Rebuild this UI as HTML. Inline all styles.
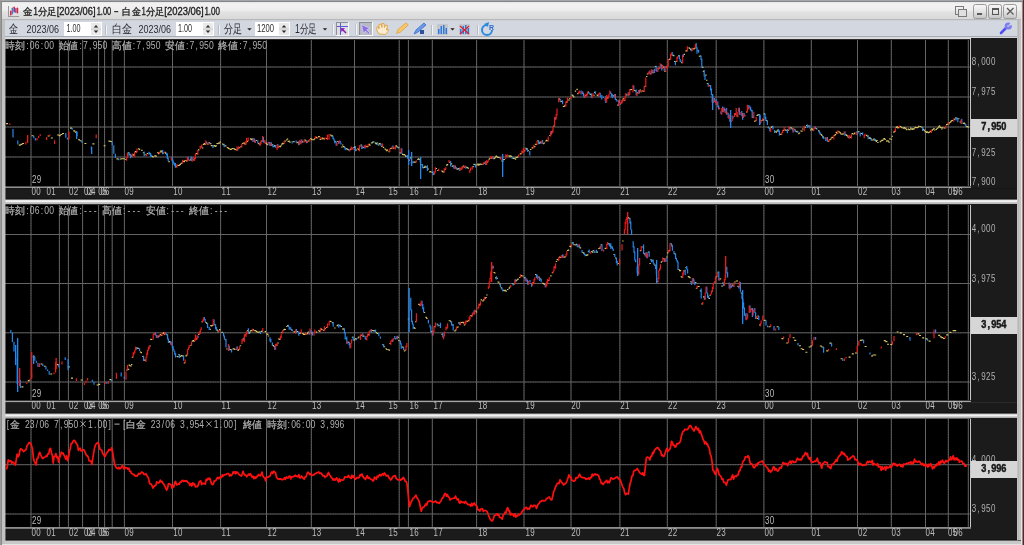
<!DOCTYPE html><html><head><meta charset="utf-8"><style>html,body{margin:0;padding:0;width:1024px;height:545px;overflow:hidden;background:#a4a8ae}svg{display:block;will-change:transform}</style></head><body>
<svg width="1024" height="545" viewBox="0 0 1024 545" font-family="Liberation Sans, sans-serif">
<defs><linearGradient id="tg" x1="0" y1="0" x2="0" y2="1"><stop offset="0" stop-color="#e4e4e4"/><stop offset="0.1" stop-color="#f2f2f2"/><stop offset="0.45" stop-color="#eeeeee"/><stop offset="0.55" stop-color="#e2e2e2"/><stop offset="1" stop-color="#d8d8d8"/></linearGradient><linearGradient id="bg" x1="0" y1="0" x2="0" y2="1"><stop offset="0" stop-color="#f8f8f8"/><stop offset="0.5" stop-color="#e4e4e4"/><stop offset="1" stop-color="#c4c4c4"/></linearGradient></defs>
<rect x="0" y="0" width="1024" height="545" fill="#c4c4c4"/>
<rect x="0" y="0" width="1024" height="1" fill="#a2a6ac"/>
<rect x="0" y="1" width="1023" height="1" fill="#858585"/>
<rect x="0" y="0" width="1" height="545" fill="#9a9a9a"/>
<rect x="1" y="1" width="1" height="544" fill="#8a8a8a"/>
<rect x="1021" y="2" width="1" height="543" fill="#e4e4e8"/>
<rect x="1022" y="2" width="1" height="543" fill="#9c8486"/>
<rect x="1023" y="0" width="1" height="545" fill="#4e2a2c"/>
<rect x="2" y="2" width="1019" height="18" fill="url(#tg)"/>
<rect x="2" y="19" width="1019" height="1" fill="#b8b8b8"/>
<rect x="8" y="6" width="1" height="11" fill="#9a9a9a"/><rect x="8" y="16" width="11" height="1" fill="#9a9a9a"/>
<rect x="10" y="10.5" width="1.6" height="5" rx="0.8" fill="#f01c30"/><rect x="11.6" y="7.5" width="1.5" height="7" rx="0.7" fill="#2a86e8"/><rect x="13.4" y="6.5" width="1.6" height="6" rx="0.8" fill="#f01c30"/><rect x="15" y="8" width="1.5" height="5" rx="0.7" fill="#2a86e8"/><rect x="16.6" y="7.5" width="1.6" height="6" rx="0.8" fill="#f01c30"/>
<text x="23.0" y="14.9" font-size="9.8" fill="#1a1a1a" stroke="#1a1a1a" stroke-width="0.3" textLength="9.600000000000005" lengthAdjust="spacingAndGlyphs">金</text>
<text x="33.300000000000004" y="14.9" font-size="10" fill="#1a1a1a" stroke="#1a1a1a" stroke-width="0.3" textLength="4.699999999999998" lengthAdjust="spacingAndGlyphs">1</text>
<text x="37.6" y="14.9" font-size="9.8" fill="#1a1a1a" stroke="#1a1a1a" stroke-width="0.3" textLength="18.900000000000002" lengthAdjust="spacingAndGlyphs">分足</text>
<text x="56.7" y="14.9" font-size="10" fill="#1a1a1a" stroke="#1a1a1a" stroke-width="0.3" textLength="38.9" lengthAdjust="spacingAndGlyphs">[2023/06]</text>
<text x="96.69999999999999" y="14.9" font-size="10" fill="#1a1a1a" stroke="#1a1a1a" stroke-width="0.3" textLength="14.500000000000004" lengthAdjust="spacingAndGlyphs">1.00</text>
<text x="122.19999999999999" y="14.9" font-size="9.8" fill="#1a1a1a" stroke="#1a1a1a" stroke-width="0.3" textLength="8.899999999999995" lengthAdjust="spacingAndGlyphs">白</text>
<text x="131.79999999999998" y="14.9" font-size="9.8" fill="#1a1a1a" stroke="#1a1a1a" stroke-width="0.3" textLength="8.900000000000023" lengthAdjust="spacingAndGlyphs">金</text>
<text x="141.5" y="14.9" font-size="10" fill="#1a1a1a" stroke="#1a1a1a" stroke-width="0.3" textLength="4.3" lengthAdjust="spacingAndGlyphs">1</text>
<text x="146.0" y="14.9" font-size="9.8" fill="#1a1a1a" stroke="#1a1a1a" stroke-width="0.3" textLength="18.599999999999984" lengthAdjust="spacingAndGlyphs">分足</text>
<text x="164.29999999999998" y="14.9" font-size="10" fill="#1a1a1a" stroke="#1a1a1a" stroke-width="0.3" textLength="39.40000000000002" lengthAdjust="spacingAndGlyphs">[2023/06]</text>
<text x="204.4" y="14.9" font-size="10" fill="#1a1a1a" stroke="#1a1a1a" stroke-width="0.3" textLength="15.599999999999984" lengthAdjust="spacingAndGlyphs">1.00</text>
<rect x="114.2" y="11" width="4" height="1.2" fill="#303030"/>
<g fill="none" stroke="#7a7a7a" stroke-width="1"><rect x="955.5" y="6.5" width="8" height="8"/><rect x="958.5" y="9.5" width="8" height="7" fill="#e0e0e0"/></g>
<rect x="973.5" y="4.5" width="13" height="14" rx="2" fill="url(#bg)" stroke="#9a9a9a"/>
<rect x="988.5" y="4.5" width="13" height="14" rx="2" fill="url(#bg)" stroke="#9a9a9a"/>
<rect x="1003.5" y="4.5" width="13" height="14" rx="2" fill="url(#bg)" stroke="#9a9a9a"/>
<rect x="977" y="13" width="5" height="2" fill="#5a5a5a"/>
<rect x="992.5" y="8.5" width="6" height="6" fill="none" stroke="#555" stroke-width="1"/><rect x="992" y="8" width="7" height="2" fill="#555"/>
<path d="M1007 8 L1013.5 14.5 M1013.5 8 L1007 14.5" stroke="#5a5a5a" stroke-width="1.3"/>
<rect x="2" y="20" width="1019" height="17" fill="#d3d7df"/>
<rect x="5" y="20" width="1012" height="1" fill="#ccd0d8"/>
<rect x="5" y="36" width="1012" height="1" fill="#a9adb5"/>
<rect x="2" y="20" width="3" height="525" fill="#c2c2c2"/>
<rect x="1017" y="20" width="4" height="525" fill="#c4c4c4"/><rect x="1018" y="20" width="1" height="525" fill="#b8b8b8"/>
<text x="9" y="32.8" font-size="12" fill="#2a2a34" textLength="9" lengthAdjust="spacingAndGlyphs">金</text>
<text x="26.5" y="33" font-size="10.8" fill="#2a2a34" textLength="32.5" lengthAdjust="spacingAndGlyphs">2023/06</text>
<rect x="64" y="22" width="38" height="14" fill="#ffffff"/>
<rect x="91" y="23" width="10" height="12" fill="#e9e9e9"/>
<rect x="91" y="28.5" width="10" height="1" fill="#c9c9c9"/>
<path d="M93.7 27.6 L98.3 27.6 L96 25.1Z M93.7 30.4 L98.3 30.4 L96 32.9Z" fill="#2a2a2a"/>
<text x="66.5" y="32" font-size="11" fill="#2c2c2c" textLength="14" lengthAdjust="spacingAndGlyphs">1.00</text>
<rect x="106" y="25" width="1" height="10" fill="#f2f2f2"/><rect x="105" y="25" width="1" height="10" fill="#b8bcc4"/>
<text x="112" y="32.8" font-size="12" fill="#2a2a34" textLength="20" lengthAdjust="spacingAndGlyphs">白金</text>
<text x="138.5" y="33" font-size="10.8" fill="#2a2a34" textLength="32.5" lengthAdjust="spacingAndGlyphs">2023/06</text>
<rect x="176" y="22" width="38" height="14" fill="#ffffff"/>
<rect x="203" y="23" width="10" height="12" fill="#e9e9e9"/>
<rect x="203" y="28.5" width="10" height="1" fill="#c9c9c9"/>
<path d="M205.7 27.6 L210.3 27.6 L208 25.1Z M205.7 30.4 L210.3 30.4 L208 32.9Z" fill="#2a2a2a"/>
<text x="178" y="32" font-size="11" fill="#2c2c2c" textLength="14" lengthAdjust="spacingAndGlyphs">1.00</text>
<rect x="219" y="25" width="1" height="10" fill="#f2f2f2"/><rect x="218" y="25" width="1" height="10" fill="#b8bcc4"/>
<text x="224" y="32.8" font-size="12" fill="#2a2a34" textLength="18" lengthAdjust="spacingAndGlyphs">分足</text>
<path d="M247.3 28.2 L251.7 28.2 L249.5 30.6Z" fill="#222"/>
<rect x="255" y="22" width="35" height="14" fill="#ffffff"/>
<rect x="279" y="23" width="10" height="12" fill="#e9e9e9"/>
<rect x="279" y="28.5" width="10" height="1" fill="#c9c9c9"/>
<path d="M281.7 27.6 L286.3 27.6 L284 25.1Z M281.7 30.4 L286.3 30.4 L284 32.9Z" fill="#2a2a2a"/>
<text x="257" y="32" font-size="11" fill="#2c2c2c" textLength="17" lengthAdjust="spacingAndGlyphs">1200</text>
<text x="295" y="32.8" font-size="12" fill="#2a2a34" textLength="22" lengthAdjust="spacingAndGlyphs">1分足</text>
<path d="M322.8 28.2 L327.2 28.2 L325 30.6Z" fill="#222"/>
<rect x="333" y="24" width="1" height="11" fill="#f4f4f6"/><rect x="332" y="24" width="1" height="11" fill="#c0c4cc"/>
<rect x="356" y="24" width="1" height="11" fill="#f4f4f6"/><rect x="355" y="24" width="1" height="11" fill="#c0c4cc"/>
<rect x="336" y="22" width="13" height="14" fill="#fafafa"/><rect x="336" y="22" width="12" height="13" fill="#8e9096"/><rect x="337" y="23" width="11" height="12" fill="#dedfe2"/>
<path d="M340.5 23 V35 M337 26.5 H348" stroke="#5a5ad8" stroke-width="1"/>
<path d="M346 33 L342.5 29.5" stroke="#9020b0" stroke-width="1.6"/><path d="M341 28 L345 28.3 L341.3 32Z" fill="#9020b0"/>
<rect x="359" y="22" width="14" height="14" fill="#fafafa"/><rect x="359" y="22" width="13" height="13" fill="#8e9096"/><rect x="360" y="23" width="12" height="12" fill="#b6b9c0"/>
<path d="M361.5 24.5 L370 28.5 L366.8 29.8 L370 33 L368.6 34.2 L365.5 31 L363.5 33.5Z" fill="#8a70e0" stroke="#e8e0ff" stroke-width="0.6"/>
<path d="M379 34 C377 31 376 29 377 27 L378 26.5 L379 29 L379 24.5 L381 24 L382 27.5 L382 23.5 L384 23.5 L384.5 27.5 L385.5 25 L387.5 25.5 L386.5 30 L388 29 L388 31.5 L385.5 34.5Z" fill="#fbecd0" stroke="#e0a040" stroke-width="0.9"/>
<path d="M396.5 33.5 L398 29.5 L406 22.8 L408.3 25 L400.5 32Z" fill="#f6c868" stroke="#e0a040" stroke-width="0.8"/>
<path d="M414 34 L416 30 L424 23 L426 25 L418 32Z" fill="#6a9ae8" stroke="#3a6ad0" stroke-width="0.8"/><rect x="420" y="30" width="4" height="4" fill="#3050a0"/>
<rect x="432" y="25" width="1" height="10" fill="#f2f2f2"/><rect x="431" y="25" width="1" height="10" fill="#b8bcc4"/>
<rect x="437" y="24" width="11" height="11" fill="#c4c6cc"/>
<g fill="#2a7ae0"><rect x="438" y="29" width="1.5" height="5"/><rect x="440.5" y="26" width="1.5" height="8"/><rect x="443" y="25" width="1.5" height="9"/><rect x="445.5" y="28" width="1.5" height="6"/></g>
<path d="M450.3 28.2 L454.7 28.2 L452.5 30.6Z" fill="#222"/>
<rect x="459" y="24" width="11" height="11" fill="#c4c6cc"/>
<g fill="#2a7ae0"><rect x="460" y="29" width="1.5" height="5"/><rect x="462.5" y="26" width="1.5" height="8"/><rect x="465" y="25" width="1.5" height="9"/><rect x="467.5" y="28" width="1.5" height="6"/></g>
<path d="M460 26 L469 34 M469 26 L460 34" stroke="#e02030" stroke-width="1.2"/>
<rect x="478" y="25" width="1" height="10" fill="#f2f2f2"/><rect x="477" y="25" width="1" height="10" fill="#b8bcc4"/>
<path d="M487 25 A5 5 0 1 0 492 30" fill="none" stroke="#2a8ae0" stroke-width="2"/><path d="M484 24 L489 22 L488 27Z" fill="#2a8ae0"/><text x="489" y="30" font-size="7" font-weight="bold" fill="#2a6ad0">R</text>
<path d="M1001 33 L1006.5 27.5" stroke="#5050f0" stroke-width="2.6" stroke-linecap="round"/>
<circle cx="1008.3" cy="26" r="3.6" fill="#7c7cf0"/>
<path d="M1008.3 26 L1011 22 L1013.5 24.5Z" fill="#d3d7df"/><circle cx="1008.3" cy="26" r="1.2" fill="#b0b0f4"/>
<rect x="5" y="36" width="1012" height="1" fill="#a6aab4"/>
<rect x="5" y="37" width="1012" height="1" fill="#d6d8de"/>
<rect x="5" y="39" width="966" height="149" fill="#000"/>
<rect x="971" y="38" width="46" height="161" fill="#1b1b1b"/>
<rect x="5" y="188" width="1012" height="11" fill="#1b1b1b"/>
<line x1="31" y1="39" x2="31" y2="187" stroke="#5c5c5c"/>
<line x1="31" y1="39" x2="31" y2="187" stroke="#9a9a9a" stroke-opacity="0.28" stroke-dasharray="1.25 1.25"/>
<line x1="59.4" y1="39" x2="59.4" y2="187" stroke="#5c5c5c"/>
<line x1="59.4" y1="39" x2="59.4" y2="187" stroke="#9a9a9a" stroke-opacity="0.28" stroke-dasharray="1.25 1.25"/>
<line x1="68.4" y1="39" x2="68.4" y2="187" stroke="#5c5c5c"/>
<line x1="68.4" y1="39" x2="68.4" y2="187" stroke="#9a9a9a" stroke-opacity="0.28" stroke-dasharray="1.25 1.25"/>
<line x1="82.6" y1="39" x2="82.6" y2="187" stroke="#5c5c5c"/>
<line x1="82.6" y1="39" x2="82.6" y2="187" stroke="#9a9a9a" stroke-opacity="0.28" stroke-dasharray="1.25 1.25"/>
<line x1="98.6" y1="39" x2="98.6" y2="187" stroke="#5c5c5c"/>
<line x1="98.6" y1="39" x2="98.6" y2="187" stroke="#9a9a9a" stroke-opacity="0.28" stroke-dasharray="1.25 1.25"/>
<line x1="104.6" y1="39" x2="104.6" y2="187" stroke="#5c5c5c"/>
<line x1="104.6" y1="39" x2="104.6" y2="187" stroke="#9a9a9a" stroke-opacity="0.28" stroke-dasharray="1.25 1.25"/>
<line x1="112.2" y1="39" x2="112.2" y2="187" stroke="#5c5c5c"/>
<line x1="112.2" y1="39" x2="112.2" y2="187" stroke="#9a9a9a" stroke-opacity="0.28" stroke-dasharray="1.25 1.25"/>
<line x1="124.4" y1="39" x2="124.4" y2="187" stroke="#5c5c5c"/>
<line x1="124.4" y1="39" x2="124.4" y2="187" stroke="#9a9a9a" stroke-opacity="0.28" stroke-dasharray="1.25 1.25"/>
<line x1="172.5" y1="39" x2="172.5" y2="187" stroke="#5c5c5c"/>
<line x1="172.5" y1="39" x2="172.5" y2="187" stroke="#9a9a9a" stroke-opacity="0.28" stroke-dasharray="1.25 1.25"/>
<line x1="220.6" y1="39" x2="220.6" y2="187" stroke="#5c5c5c"/>
<line x1="220.6" y1="39" x2="220.6" y2="187" stroke="#9a9a9a" stroke-opacity="0.28" stroke-dasharray="1.25 1.25"/>
<line x1="266.5" y1="39" x2="266.5" y2="187" stroke="#5c5c5c"/>
<line x1="266.5" y1="39" x2="266.5" y2="187" stroke="#9a9a9a" stroke-opacity="0.28" stroke-dasharray="1.25 1.25"/>
<line x1="311.3" y1="39" x2="311.3" y2="187" stroke="#5c5c5c"/>
<line x1="311.3" y1="39" x2="311.3" y2="187" stroke="#9a9a9a" stroke-opacity="0.28" stroke-dasharray="1.25 1.25"/>
<line x1="354.5" y1="39" x2="354.5" y2="187" stroke="#5c5c5c"/>
<line x1="354.5" y1="39" x2="354.5" y2="187" stroke="#9a9a9a" stroke-opacity="0.28" stroke-dasharray="1.25 1.25"/>
<line x1="399.2" y1="39" x2="399.2" y2="187" stroke="#5c5c5c"/>
<line x1="399.2" y1="39" x2="399.2" y2="187" stroke="#9a9a9a" stroke-opacity="0.28" stroke-dasharray="1.25 1.25"/>
<line x1="408.4" y1="39" x2="408.4" y2="187" stroke="#5c5c5c"/>
<line x1="408.4" y1="39" x2="408.4" y2="187" stroke="#9a9a9a" stroke-opacity="0.28" stroke-dasharray="1.25 1.25"/>
<line x1="432.3" y1="39" x2="432.3" y2="187" stroke="#5c5c5c"/>
<line x1="432.3" y1="39" x2="432.3" y2="187" stroke="#9a9a9a" stroke-opacity="0.28" stroke-dasharray="1.25 1.25"/>
<line x1="476.6" y1="39" x2="476.6" y2="187" stroke="#5c5c5c"/>
<line x1="476.6" y1="39" x2="476.6" y2="187" stroke="#9a9a9a" stroke-opacity="0.28" stroke-dasharray="1.25 1.25"/>
<line x1="524" y1="39" x2="524" y2="187" stroke="#5c5c5c"/>
<line x1="524" y1="39" x2="524" y2="187" stroke="#9a9a9a" stroke-opacity="0.28" stroke-dasharray="1.25 1.25"/>
<line x1="571" y1="39" x2="571" y2="187" stroke="#5c5c5c"/>
<line x1="571" y1="39" x2="571" y2="187" stroke="#9a9a9a" stroke-opacity="0.28" stroke-dasharray="1.25 1.25"/>
<line x1="619.9" y1="39" x2="619.9" y2="187" stroke="#5c5c5c"/>
<line x1="619.9" y1="39" x2="619.9" y2="187" stroke="#9a9a9a" stroke-opacity="0.28" stroke-dasharray="1.25 1.25"/>
<line x1="667.3" y1="39" x2="667.3" y2="187" stroke="#5c5c5c"/>
<line x1="667.3" y1="39" x2="667.3" y2="187" stroke="#9a9a9a" stroke-opacity="0.28" stroke-dasharray="1.25 1.25"/>
<line x1="716.2" y1="39" x2="716.2" y2="187" stroke="#5c5c5c"/>
<line x1="716.2" y1="39" x2="716.2" y2="187" stroke="#9a9a9a" stroke-opacity="0.28" stroke-dasharray="1.25 1.25"/>
<line x1="763.9" y1="39" x2="763.9" y2="187" stroke="#5c5c5c"/>
<line x1="763.9" y1="39" x2="763.9" y2="187" stroke="#9a9a9a" stroke-opacity="0.28" stroke-dasharray="1.25 1.25"/>
<line x1="811.3" y1="39" x2="811.3" y2="187" stroke="#5c5c5c"/>
<line x1="811.3" y1="39" x2="811.3" y2="187" stroke="#9a9a9a" stroke-opacity="0.28" stroke-dasharray="1.25 1.25"/>
<line x1="857.5" y1="39" x2="857.5" y2="187" stroke="#5c5c5c"/>
<line x1="857.5" y1="39" x2="857.5" y2="187" stroke="#9a9a9a" stroke-opacity="0.28" stroke-dasharray="1.25 1.25"/>
<line x1="891.3" y1="39" x2="891.3" y2="187" stroke="#5c5c5c"/>
<line x1="891.3" y1="39" x2="891.3" y2="187" stroke="#9a9a9a" stroke-opacity="0.28" stroke-dasharray="1.25 1.25"/>
<line x1="925.5" y1="39" x2="925.5" y2="187" stroke="#5c5c5c"/>
<line x1="925.5" y1="39" x2="925.5" y2="187" stroke="#9a9a9a" stroke-opacity="0.28" stroke-dasharray="1.25 1.25"/>
<line x1="948.3" y1="39" x2="948.3" y2="187" stroke="#5c5c5c"/>
<line x1="948.3" y1="39" x2="948.3" y2="187" stroke="#9a9a9a" stroke-opacity="0.28" stroke-dasharray="1.25 1.25"/>
<line x1="968.3" y1="39" x2="968.3" y2="187" stroke="#5c5c5c"/>
<line x1="968.3" y1="39" x2="968.3" y2="187" stroke="#9a9a9a" stroke-opacity="0.28" stroke-dasharray="1.25 1.25"/>
<line x1="5" y1="67" x2="970" y2="67" stroke="#5c5c5c"/>
<line x1="5" y1="67" x2="970" y2="67" stroke="#9a9a9a" stroke-opacity="0.28" stroke-dasharray="1.25 1.25"/>
<line x1="5" y1="97" x2="970" y2="97" stroke="#5c5c5c"/>
<line x1="5" y1="97" x2="970" y2="97" stroke="#9a9a9a" stroke-opacity="0.28" stroke-dasharray="1.25 1.25"/>
<line x1="5" y1="127" x2="970" y2="127" stroke="#5c5c5c"/>
<line x1="5" y1="127" x2="970" y2="127" stroke="#9a9a9a" stroke-opacity="0.28" stroke-dasharray="1.25 1.25"/>
<line x1="5" y1="157" x2="970" y2="157" stroke="#5c5c5c"/>
<line x1="5" y1="157" x2="970" y2="157" stroke="#9a9a9a" stroke-opacity="0.28" stroke-dasharray="1.25 1.25"/>
<rect x="970" y="38" width="1" height="150" fill="#c8c8c8"/>
<rect x="5" y="38" width="966" height="1" fill="#dcdcdc"/>
<rect x="5" y="39" width="965" height="1" fill="#2c2c2c"/>
<rect x="5" y="186" width="966" height="1" fill="#505050"/>
<rect x="5" y="187" width="966" height="1" fill="#909090"/>
<rect x="5" y="188" width="1012" height="1" fill="#161616"/>
<rect x="5" y="198" width="1012" height="1" fill="#141414"/>
<rect x="5" y="199" width="1012" height="1" fill="#6a6a6a"/>
<rect x="5" y="200" width="1012" height="1" fill="#e8e8e8"/>
<rect x="5" y="201" width="1012" height="1" fill="#f2f2f2"/>
<rect x="5" y="202" width="1012" height="1" fill="#c4c4c4"/>
<rect x="5" y="203" width="1012" height="1" fill="#bcbcbc"/>
<rect x="5" y="205" width="966" height="197" fill="#000"/>
<rect x="971" y="204" width="46" height="209" fill="#1b1b1b"/>
<rect x="5" y="402" width="1012" height="11" fill="#1b1b1b"/>
<line x1="31" y1="205" x2="31" y2="401" stroke="#5c5c5c"/>
<line x1="31" y1="205" x2="31" y2="401" stroke="#9a9a9a" stroke-opacity="0.28" stroke-dasharray="1.25 1.25"/>
<line x1="59.4" y1="205" x2="59.4" y2="401" stroke="#5c5c5c"/>
<line x1="59.4" y1="205" x2="59.4" y2="401" stroke="#9a9a9a" stroke-opacity="0.28" stroke-dasharray="1.25 1.25"/>
<line x1="68.4" y1="205" x2="68.4" y2="401" stroke="#5c5c5c"/>
<line x1="68.4" y1="205" x2="68.4" y2="401" stroke="#9a9a9a" stroke-opacity="0.28" stroke-dasharray="1.25 1.25"/>
<line x1="82.6" y1="205" x2="82.6" y2="401" stroke="#5c5c5c"/>
<line x1="82.6" y1="205" x2="82.6" y2="401" stroke="#9a9a9a" stroke-opacity="0.28" stroke-dasharray="1.25 1.25"/>
<line x1="98.6" y1="205" x2="98.6" y2="401" stroke="#5c5c5c"/>
<line x1="98.6" y1="205" x2="98.6" y2="401" stroke="#9a9a9a" stroke-opacity="0.28" stroke-dasharray="1.25 1.25"/>
<line x1="104.6" y1="205" x2="104.6" y2="401" stroke="#5c5c5c"/>
<line x1="104.6" y1="205" x2="104.6" y2="401" stroke="#9a9a9a" stroke-opacity="0.28" stroke-dasharray="1.25 1.25"/>
<line x1="112.2" y1="205" x2="112.2" y2="401" stroke="#5c5c5c"/>
<line x1="112.2" y1="205" x2="112.2" y2="401" stroke="#9a9a9a" stroke-opacity="0.28" stroke-dasharray="1.25 1.25"/>
<line x1="124.4" y1="205" x2="124.4" y2="401" stroke="#5c5c5c"/>
<line x1="124.4" y1="205" x2="124.4" y2="401" stroke="#9a9a9a" stroke-opacity="0.28" stroke-dasharray="1.25 1.25"/>
<line x1="172.5" y1="205" x2="172.5" y2="401" stroke="#5c5c5c"/>
<line x1="172.5" y1="205" x2="172.5" y2="401" stroke="#9a9a9a" stroke-opacity="0.28" stroke-dasharray="1.25 1.25"/>
<line x1="220.6" y1="205" x2="220.6" y2="401" stroke="#5c5c5c"/>
<line x1="220.6" y1="205" x2="220.6" y2="401" stroke="#9a9a9a" stroke-opacity="0.28" stroke-dasharray="1.25 1.25"/>
<line x1="266.5" y1="205" x2="266.5" y2="401" stroke="#5c5c5c"/>
<line x1="266.5" y1="205" x2="266.5" y2="401" stroke="#9a9a9a" stroke-opacity="0.28" stroke-dasharray="1.25 1.25"/>
<line x1="311.3" y1="205" x2="311.3" y2="401" stroke="#5c5c5c"/>
<line x1="311.3" y1="205" x2="311.3" y2="401" stroke="#9a9a9a" stroke-opacity="0.28" stroke-dasharray="1.25 1.25"/>
<line x1="354.5" y1="205" x2="354.5" y2="401" stroke="#5c5c5c"/>
<line x1="354.5" y1="205" x2="354.5" y2="401" stroke="#9a9a9a" stroke-opacity="0.28" stroke-dasharray="1.25 1.25"/>
<line x1="399.2" y1="205" x2="399.2" y2="401" stroke="#5c5c5c"/>
<line x1="399.2" y1="205" x2="399.2" y2="401" stroke="#9a9a9a" stroke-opacity="0.28" stroke-dasharray="1.25 1.25"/>
<line x1="408.4" y1="205" x2="408.4" y2="401" stroke="#5c5c5c"/>
<line x1="408.4" y1="205" x2="408.4" y2="401" stroke="#9a9a9a" stroke-opacity="0.28" stroke-dasharray="1.25 1.25"/>
<line x1="432.3" y1="205" x2="432.3" y2="401" stroke="#5c5c5c"/>
<line x1="432.3" y1="205" x2="432.3" y2="401" stroke="#9a9a9a" stroke-opacity="0.28" stroke-dasharray="1.25 1.25"/>
<line x1="476.6" y1="205" x2="476.6" y2="401" stroke="#5c5c5c"/>
<line x1="476.6" y1="205" x2="476.6" y2="401" stroke="#9a9a9a" stroke-opacity="0.28" stroke-dasharray="1.25 1.25"/>
<line x1="524" y1="205" x2="524" y2="401" stroke="#5c5c5c"/>
<line x1="524" y1="205" x2="524" y2="401" stroke="#9a9a9a" stroke-opacity="0.28" stroke-dasharray="1.25 1.25"/>
<line x1="571" y1="205" x2="571" y2="401" stroke="#5c5c5c"/>
<line x1="571" y1="205" x2="571" y2="401" stroke="#9a9a9a" stroke-opacity="0.28" stroke-dasharray="1.25 1.25"/>
<line x1="619.9" y1="205" x2="619.9" y2="401" stroke="#5c5c5c"/>
<line x1="619.9" y1="205" x2="619.9" y2="401" stroke="#9a9a9a" stroke-opacity="0.28" stroke-dasharray="1.25 1.25"/>
<line x1="667.3" y1="205" x2="667.3" y2="401" stroke="#5c5c5c"/>
<line x1="667.3" y1="205" x2="667.3" y2="401" stroke="#9a9a9a" stroke-opacity="0.28" stroke-dasharray="1.25 1.25"/>
<line x1="716.2" y1="205" x2="716.2" y2="401" stroke="#5c5c5c"/>
<line x1="716.2" y1="205" x2="716.2" y2="401" stroke="#9a9a9a" stroke-opacity="0.28" stroke-dasharray="1.25 1.25"/>
<line x1="763.9" y1="205" x2="763.9" y2="401" stroke="#5c5c5c"/>
<line x1="763.9" y1="205" x2="763.9" y2="401" stroke="#9a9a9a" stroke-opacity="0.28" stroke-dasharray="1.25 1.25"/>
<line x1="811.3" y1="205" x2="811.3" y2="401" stroke="#5c5c5c"/>
<line x1="811.3" y1="205" x2="811.3" y2="401" stroke="#9a9a9a" stroke-opacity="0.28" stroke-dasharray="1.25 1.25"/>
<line x1="857.5" y1="205" x2="857.5" y2="401" stroke="#5c5c5c"/>
<line x1="857.5" y1="205" x2="857.5" y2="401" stroke="#9a9a9a" stroke-opacity="0.28" stroke-dasharray="1.25 1.25"/>
<line x1="891.3" y1="205" x2="891.3" y2="401" stroke="#5c5c5c"/>
<line x1="891.3" y1="205" x2="891.3" y2="401" stroke="#9a9a9a" stroke-opacity="0.28" stroke-dasharray="1.25 1.25"/>
<line x1="925.5" y1="205" x2="925.5" y2="401" stroke="#5c5c5c"/>
<line x1="925.5" y1="205" x2="925.5" y2="401" stroke="#9a9a9a" stroke-opacity="0.28" stroke-dasharray="1.25 1.25"/>
<line x1="948.3" y1="205" x2="948.3" y2="401" stroke="#5c5c5c"/>
<line x1="948.3" y1="205" x2="948.3" y2="401" stroke="#9a9a9a" stroke-opacity="0.28" stroke-dasharray="1.25 1.25"/>
<line x1="968.3" y1="205" x2="968.3" y2="401" stroke="#5c5c5c"/>
<line x1="968.3" y1="205" x2="968.3" y2="401" stroke="#9a9a9a" stroke-opacity="0.28" stroke-dasharray="1.25 1.25"/>
<line x1="5" y1="234.5" x2="970" y2="234.5" stroke="#5c5c5c"/>
<line x1="5" y1="234.5" x2="970" y2="234.5" stroke="#9a9a9a" stroke-opacity="0.28" stroke-dasharray="1.25 1.25"/>
<line x1="5" y1="283.5" x2="970" y2="283.5" stroke="#5c5c5c"/>
<line x1="5" y1="283.5" x2="970" y2="283.5" stroke="#9a9a9a" stroke-opacity="0.28" stroke-dasharray="1.25 1.25"/>
<line x1="5" y1="332.8" x2="970" y2="332.8" stroke="#5c5c5c"/>
<line x1="5" y1="332.8" x2="970" y2="332.8" stroke="#9a9a9a" stroke-opacity="0.28" stroke-dasharray="1.25 1.25"/>
<line x1="5" y1="382" x2="970" y2="382" stroke="#5c5c5c"/>
<line x1="5" y1="382" x2="970" y2="382" stroke="#9a9a9a" stroke-opacity="0.28" stroke-dasharray="1.25 1.25"/>
<rect x="970" y="204" width="1" height="198" fill="#c8c8c8"/>
<rect x="5" y="204" width="966" height="1" fill="#303030"/>
<rect x="971" y="204" width="46" height="1" fill="#1b1b1b"/>
<rect x="5" y="400" width="966" height="1" fill="#3a3a3a"/>
<rect x="5" y="401" width="966" height="1" fill="#a4a4a4"/>
<rect x="5" y="402" width="1012" height="1" fill="#2a2a2a"/>
<rect x="5" y="412" width="1012" height="1" fill="#141414"/>
<rect x="5" y="413" width="1012" height="1" fill="#606060"/>
<rect x="5" y="414" width="1012" height="1" fill="#d8d8d8"/>
<rect x="5" y="415" width="1012" height="1" fill="#f4f4f4"/>
<rect x="5" y="416" width="1012" height="1" fill="#d0d0d0"/>
<rect x="5" y="417" width="1012" height="1" fill="#b0b0b0"/>
<rect x="5" y="419" width="966" height="110" fill="#000"/>
<rect x="971" y="418" width="46" height="122" fill="#1b1b1b"/>
<rect x="5" y="529" width="1012" height="11" fill="#1b1b1b"/>
<line x1="31" y1="419" x2="31" y2="528" stroke="#5c5c5c"/>
<line x1="31" y1="419" x2="31" y2="528" stroke="#9a9a9a" stroke-opacity="0.28" stroke-dasharray="1.25 1.25"/>
<line x1="59.4" y1="419" x2="59.4" y2="528" stroke="#5c5c5c"/>
<line x1="59.4" y1="419" x2="59.4" y2="528" stroke="#9a9a9a" stroke-opacity="0.28" stroke-dasharray="1.25 1.25"/>
<line x1="68.4" y1="419" x2="68.4" y2="528" stroke="#5c5c5c"/>
<line x1="68.4" y1="419" x2="68.4" y2="528" stroke="#9a9a9a" stroke-opacity="0.28" stroke-dasharray="1.25 1.25"/>
<line x1="82.6" y1="419" x2="82.6" y2="528" stroke="#5c5c5c"/>
<line x1="82.6" y1="419" x2="82.6" y2="528" stroke="#9a9a9a" stroke-opacity="0.28" stroke-dasharray="1.25 1.25"/>
<line x1="98.6" y1="419" x2="98.6" y2="528" stroke="#5c5c5c"/>
<line x1="98.6" y1="419" x2="98.6" y2="528" stroke="#9a9a9a" stroke-opacity="0.28" stroke-dasharray="1.25 1.25"/>
<line x1="104.6" y1="419" x2="104.6" y2="528" stroke="#5c5c5c"/>
<line x1="104.6" y1="419" x2="104.6" y2="528" stroke="#9a9a9a" stroke-opacity="0.28" stroke-dasharray="1.25 1.25"/>
<line x1="112.2" y1="419" x2="112.2" y2="528" stroke="#5c5c5c"/>
<line x1="112.2" y1="419" x2="112.2" y2="528" stroke="#9a9a9a" stroke-opacity="0.28" stroke-dasharray="1.25 1.25"/>
<line x1="124.4" y1="419" x2="124.4" y2="528" stroke="#5c5c5c"/>
<line x1="124.4" y1="419" x2="124.4" y2="528" stroke="#9a9a9a" stroke-opacity="0.28" stroke-dasharray="1.25 1.25"/>
<line x1="172.5" y1="419" x2="172.5" y2="528" stroke="#5c5c5c"/>
<line x1="172.5" y1="419" x2="172.5" y2="528" stroke="#9a9a9a" stroke-opacity="0.28" stroke-dasharray="1.25 1.25"/>
<line x1="220.6" y1="419" x2="220.6" y2="528" stroke="#5c5c5c"/>
<line x1="220.6" y1="419" x2="220.6" y2="528" stroke="#9a9a9a" stroke-opacity="0.28" stroke-dasharray="1.25 1.25"/>
<line x1="266.5" y1="419" x2="266.5" y2="528" stroke="#5c5c5c"/>
<line x1="266.5" y1="419" x2="266.5" y2="528" stroke="#9a9a9a" stroke-opacity="0.28" stroke-dasharray="1.25 1.25"/>
<line x1="311.3" y1="419" x2="311.3" y2="528" stroke="#5c5c5c"/>
<line x1="311.3" y1="419" x2="311.3" y2="528" stroke="#9a9a9a" stroke-opacity="0.28" stroke-dasharray="1.25 1.25"/>
<line x1="354.5" y1="419" x2="354.5" y2="528" stroke="#5c5c5c"/>
<line x1="354.5" y1="419" x2="354.5" y2="528" stroke="#9a9a9a" stroke-opacity="0.28" stroke-dasharray="1.25 1.25"/>
<line x1="399.2" y1="419" x2="399.2" y2="528" stroke="#5c5c5c"/>
<line x1="399.2" y1="419" x2="399.2" y2="528" stroke="#9a9a9a" stroke-opacity="0.28" stroke-dasharray="1.25 1.25"/>
<line x1="408.4" y1="419" x2="408.4" y2="528" stroke="#5c5c5c"/>
<line x1="408.4" y1="419" x2="408.4" y2="528" stroke="#9a9a9a" stroke-opacity="0.28" stroke-dasharray="1.25 1.25"/>
<line x1="432.3" y1="419" x2="432.3" y2="528" stroke="#5c5c5c"/>
<line x1="432.3" y1="419" x2="432.3" y2="528" stroke="#9a9a9a" stroke-opacity="0.28" stroke-dasharray="1.25 1.25"/>
<line x1="476.6" y1="419" x2="476.6" y2="528" stroke="#5c5c5c"/>
<line x1="476.6" y1="419" x2="476.6" y2="528" stroke="#9a9a9a" stroke-opacity="0.28" stroke-dasharray="1.25 1.25"/>
<line x1="524" y1="419" x2="524" y2="528" stroke="#5c5c5c"/>
<line x1="524" y1="419" x2="524" y2="528" stroke="#9a9a9a" stroke-opacity="0.28" stroke-dasharray="1.25 1.25"/>
<line x1="571" y1="419" x2="571" y2="528" stroke="#5c5c5c"/>
<line x1="571" y1="419" x2="571" y2="528" stroke="#9a9a9a" stroke-opacity="0.28" stroke-dasharray="1.25 1.25"/>
<line x1="619.9" y1="419" x2="619.9" y2="528" stroke="#5c5c5c"/>
<line x1="619.9" y1="419" x2="619.9" y2="528" stroke="#9a9a9a" stroke-opacity="0.28" stroke-dasharray="1.25 1.25"/>
<line x1="667.3" y1="419" x2="667.3" y2="528" stroke="#5c5c5c"/>
<line x1="667.3" y1="419" x2="667.3" y2="528" stroke="#9a9a9a" stroke-opacity="0.28" stroke-dasharray="1.25 1.25"/>
<line x1="716.2" y1="419" x2="716.2" y2="528" stroke="#5c5c5c"/>
<line x1="716.2" y1="419" x2="716.2" y2="528" stroke="#9a9a9a" stroke-opacity="0.28" stroke-dasharray="1.25 1.25"/>
<line x1="763.9" y1="419" x2="763.9" y2="528" stroke="#5c5c5c"/>
<line x1="763.9" y1="419" x2="763.9" y2="528" stroke="#9a9a9a" stroke-opacity="0.28" stroke-dasharray="1.25 1.25"/>
<line x1="811.3" y1="419" x2="811.3" y2="528" stroke="#5c5c5c"/>
<line x1="811.3" y1="419" x2="811.3" y2="528" stroke="#9a9a9a" stroke-opacity="0.28" stroke-dasharray="1.25 1.25"/>
<line x1="857.5" y1="419" x2="857.5" y2="528" stroke="#5c5c5c"/>
<line x1="857.5" y1="419" x2="857.5" y2="528" stroke="#9a9a9a" stroke-opacity="0.28" stroke-dasharray="1.25 1.25"/>
<line x1="891.3" y1="419" x2="891.3" y2="528" stroke="#5c5c5c"/>
<line x1="891.3" y1="419" x2="891.3" y2="528" stroke="#9a9a9a" stroke-opacity="0.28" stroke-dasharray="1.25 1.25"/>
<line x1="925.5" y1="419" x2="925.5" y2="528" stroke="#5c5c5c"/>
<line x1="925.5" y1="419" x2="925.5" y2="528" stroke="#9a9a9a" stroke-opacity="0.28" stroke-dasharray="1.25 1.25"/>
<line x1="948.3" y1="419" x2="948.3" y2="528" stroke="#5c5c5c"/>
<line x1="948.3" y1="419" x2="948.3" y2="528" stroke="#9a9a9a" stroke-opacity="0.28" stroke-dasharray="1.25 1.25"/>
<line x1="968.3" y1="419" x2="968.3" y2="528" stroke="#5c5c5c"/>
<line x1="968.3" y1="419" x2="968.3" y2="528" stroke="#9a9a9a" stroke-opacity="0.28" stroke-dasharray="1.25 1.25"/>
<line x1="5" y1="464.7" x2="970" y2="464.7" stroke="#5c5c5c"/>
<line x1="5" y1="464.7" x2="970" y2="464.7" stroke="#9a9a9a" stroke-opacity="0.28" stroke-dasharray="1.25 1.25"/>
<line x1="5" y1="514" x2="970" y2="514" stroke="#5c5c5c"/>
<line x1="5" y1="514" x2="970" y2="514" stroke="#9a9a9a" stroke-opacity="0.28" stroke-dasharray="1.25 1.25"/>
<rect x="970" y="418" width="1" height="111" fill="#c8c8c8"/>
<rect x="5" y="418" width="966" height="1" fill="#606060"/>
<rect x="971" y="418" width="46" height="1" fill="#1b1b1b"/>
<rect x="5" y="527" width="966" height="1" fill="#8c8c8c"/>
<rect x="5" y="528" width="966" height="1" fill="#787878"/>
<rect x="5" y="539" width="1012" height="1" fill="#141414"/>
<rect x="5" y="540" width="1016" height="1" fill="#606060"/>
<rect x="5" y="541" width="1016" height="3" fill="#c8c8c8"/>
<rect x="2" y="544" width="1019" height="1" fill="#e4e4e4"/>
<rect x="5" y="38" width="1" height="503" fill="#c4c4c4" opacity="0.45"/>
<rect x="1017" y="38" width="1" height="503" fill="#c4c4c4" opacity="0.4"/>
<g font-family="Liberation Sans, sans-serif" font-size="10" fill="#bdbdbd" text-anchor="middle"><text transform="translate(33.83 195) scale(0.8 1)">0</text><text transform="translate(38.48 195) scale(0.8 1)">0</text></g>
<g font-family="Liberation Sans, sans-serif" font-size="10" fill="#bdbdbd" text-anchor="middle"><text transform="translate(48.83 195) scale(0.8 1)">0</text><text transform="translate(53.48 195) scale(0.8 1)">1</text></g>
<g font-family="Liberation Sans, sans-serif" font-size="10" fill="#bdbdbd" text-anchor="middle"><text transform="translate(71.33 195) scale(0.8 1)">0</text><text transform="translate(75.98 195) scale(0.8 1)">2</text></g>
<g font-family="Liberation Sans, sans-serif" font-size="10" fill="#bdbdbd" text-anchor="middle"><text transform="translate(86.12 195) scale(0.8 1)">0</text><text transform="translate(90.78 195) scale(0.8 1)">3</text></g>
<g font-family="Liberation Sans, sans-serif" font-size="10" fill="#bdbdbd" text-anchor="middle"><text transform="translate(88.62 195) scale(0.8 1)">0</text><text transform="translate(93.28 195) scale(0.8 1)">4</text></g>
<g font-family="Liberation Sans, sans-serif" font-size="10" fill="#bdbdbd" text-anchor="middle"><text transform="translate(100.42 195) scale(0.8 1)">0</text><text transform="translate(105.08 195) scale(0.8 1)">5</text></g>
<g font-family="Liberation Sans, sans-serif" font-size="10" fill="#bdbdbd" text-anchor="middle"><text transform="translate(102.62 195) scale(0.8 1)">0</text><text transform="translate(107.28 195) scale(0.8 1)">6</text></g>
<g font-family="Liberation Sans, sans-serif" font-size="10" fill="#bdbdbd" text-anchor="middle"><text transform="translate(126.83 195) scale(0.8 1)">0</text><text transform="translate(131.47 195) scale(0.8 1)">9</text></g>
<g font-family="Liberation Sans, sans-serif" font-size="10" fill="#bdbdbd" text-anchor="middle"><text transform="translate(175.57 195) scale(0.8 1)">1</text><text transform="translate(180.22 195) scale(0.8 1)">0</text></g>
<g font-family="Liberation Sans, sans-serif" font-size="10" fill="#bdbdbd" text-anchor="middle"><text transform="translate(223.82 195) scale(0.8 1)">1</text><text transform="translate(228.47 195) scale(0.8 1)">1</text></g>
<g font-family="Liberation Sans, sans-serif" font-size="10" fill="#bdbdbd" text-anchor="middle"><text transform="translate(269.82 195) scale(0.8 1)">1</text><text transform="translate(274.47 195) scale(0.8 1)">2</text></g>
<g font-family="Liberation Sans, sans-serif" font-size="10" fill="#bdbdbd" text-anchor="middle"><text transform="translate(314.32 195) scale(0.8 1)">1</text><text transform="translate(318.97 195) scale(0.8 1)">3</text></g>
<g font-family="Liberation Sans, sans-serif" font-size="10" fill="#bdbdbd" text-anchor="middle"><text transform="translate(357.82 195) scale(0.8 1)">1</text><text transform="translate(362.47 195) scale(0.8 1)">4</text></g>
<g font-family="Liberation Sans, sans-serif" font-size="10" fill="#bdbdbd" text-anchor="middle"><text transform="translate(390.82 195) scale(0.8 1)">1</text><text transform="translate(395.47 195) scale(0.8 1)">5</text></g>
<g font-family="Liberation Sans, sans-serif" font-size="10" fill="#bdbdbd" text-anchor="middle"><text transform="translate(411.82 195) scale(0.8 1)">1</text><text transform="translate(416.47 195) scale(0.8 1)">6</text></g>
<g font-family="Liberation Sans, sans-serif" font-size="10" fill="#bdbdbd" text-anchor="middle"><text transform="translate(435.82 195) scale(0.8 1)">1</text><text transform="translate(440.47 195) scale(0.8 1)">7</text></g>
<g font-family="Liberation Sans, sans-serif" font-size="10" fill="#bdbdbd" text-anchor="middle"><text transform="translate(480.43 195) scale(0.8 1)">1</text><text transform="translate(485.07 195) scale(0.8 1)">8</text></g>
<g font-family="Liberation Sans, sans-serif" font-size="10" fill="#bdbdbd" text-anchor="middle"><text transform="translate(527.83 195) scale(0.8 1)">1</text><text transform="translate(532.48 195) scale(0.8 1)">9</text></g>
<g font-family="Liberation Sans, sans-serif" font-size="10" fill="#bdbdbd" text-anchor="middle"><text transform="translate(573.53 195) scale(0.8 1)">2</text><text transform="translate(578.18 195) scale(0.8 1)">0</text></g>
<g font-family="Liberation Sans, sans-serif" font-size="10" fill="#bdbdbd" text-anchor="middle"><text transform="translate(622.53 195) scale(0.8 1)">2</text><text transform="translate(627.18 195) scale(0.8 1)">1</text></g>
<g font-family="Liberation Sans, sans-serif" font-size="10" fill="#bdbdbd" text-anchor="middle"><text transform="translate(670.33 195) scale(0.8 1)">2</text><text transform="translate(674.98 195) scale(0.8 1)">2</text></g>
<g font-family="Liberation Sans, sans-serif" font-size="10" fill="#bdbdbd" text-anchor="middle"><text transform="translate(718.83 195) scale(0.8 1)">2</text><text transform="translate(723.48 195) scale(0.8 1)">3</text></g>
<g font-family="Liberation Sans, sans-serif" font-size="10" fill="#bdbdbd" text-anchor="middle"><text transform="translate(766.83 195) scale(0.8 1)">0</text><text transform="translate(771.48 195) scale(0.8 1)">0</text></g>
<g font-family="Liberation Sans, sans-serif" font-size="10" fill="#bdbdbd" text-anchor="middle"><text transform="translate(813.83 195) scale(0.8 1)">0</text><text transform="translate(818.48 195) scale(0.8 1)">1</text></g>
<g font-family="Liberation Sans, sans-serif" font-size="10" fill="#bdbdbd" text-anchor="middle"><text transform="translate(860.33 195) scale(0.8 1)">0</text><text transform="translate(864.98 195) scale(0.8 1)">2</text></g>
<g font-family="Liberation Sans, sans-serif" font-size="10" fill="#bdbdbd" text-anchor="middle"><text transform="translate(893.83 195) scale(0.8 1)">0</text><text transform="translate(898.48 195) scale(0.8 1)">3</text></g>
<g font-family="Liberation Sans, sans-serif" font-size="10" fill="#bdbdbd" text-anchor="middle"><text transform="translate(927.83 195) scale(0.8 1)">0</text><text transform="translate(932.48 195) scale(0.8 1)">4</text></g>
<g font-family="Liberation Sans, sans-serif" font-size="10" fill="#bdbdbd" text-anchor="middle"><text transform="translate(950.33 195) scale(0.8 1)">0</text><text transform="translate(954.98 195) scale(0.8 1)">5</text></g>
<g font-family="Liberation Sans, sans-serif" font-size="10" fill="#bdbdbd" text-anchor="middle"><text transform="translate(955.83 195) scale(0.8 1)">0</text><text transform="translate(960.48 195) scale(0.8 1)">6</text></g>
<g font-family="Liberation Sans, sans-serif" font-size="10" fill="#bdbdbd" text-anchor="middle"><text transform="translate(33.83 409) scale(0.8 1)">0</text><text transform="translate(38.48 409) scale(0.8 1)">0</text></g>
<g font-family="Liberation Sans, sans-serif" font-size="10" fill="#bdbdbd" text-anchor="middle"><text transform="translate(48.83 409) scale(0.8 1)">0</text><text transform="translate(53.48 409) scale(0.8 1)">1</text></g>
<g font-family="Liberation Sans, sans-serif" font-size="10" fill="#bdbdbd" text-anchor="middle"><text transform="translate(71.33 409) scale(0.8 1)">0</text><text transform="translate(75.98 409) scale(0.8 1)">2</text></g>
<g font-family="Liberation Sans, sans-serif" font-size="10" fill="#bdbdbd" text-anchor="middle"><text transform="translate(86.12 409) scale(0.8 1)">0</text><text transform="translate(90.78 409) scale(0.8 1)">3</text></g>
<g font-family="Liberation Sans, sans-serif" font-size="10" fill="#bdbdbd" text-anchor="middle"><text transform="translate(88.62 409) scale(0.8 1)">0</text><text transform="translate(93.28 409) scale(0.8 1)">4</text></g>
<g font-family="Liberation Sans, sans-serif" font-size="10" fill="#bdbdbd" text-anchor="middle"><text transform="translate(100.42 409) scale(0.8 1)">0</text><text transform="translate(105.08 409) scale(0.8 1)">5</text></g>
<g font-family="Liberation Sans, sans-serif" font-size="10" fill="#bdbdbd" text-anchor="middle"><text transform="translate(102.62 409) scale(0.8 1)">0</text><text transform="translate(107.28 409) scale(0.8 1)">6</text></g>
<g font-family="Liberation Sans, sans-serif" font-size="10" fill="#bdbdbd" text-anchor="middle"><text transform="translate(126.83 409) scale(0.8 1)">0</text><text transform="translate(131.47 409) scale(0.8 1)">9</text></g>
<g font-family="Liberation Sans, sans-serif" font-size="10" fill="#bdbdbd" text-anchor="middle"><text transform="translate(175.57 409) scale(0.8 1)">1</text><text transform="translate(180.22 409) scale(0.8 1)">0</text></g>
<g font-family="Liberation Sans, sans-serif" font-size="10" fill="#bdbdbd" text-anchor="middle"><text transform="translate(223.82 409) scale(0.8 1)">1</text><text transform="translate(228.47 409) scale(0.8 1)">1</text></g>
<g font-family="Liberation Sans, sans-serif" font-size="10" fill="#bdbdbd" text-anchor="middle"><text transform="translate(269.82 409) scale(0.8 1)">1</text><text transform="translate(274.47 409) scale(0.8 1)">2</text></g>
<g font-family="Liberation Sans, sans-serif" font-size="10" fill="#bdbdbd" text-anchor="middle"><text transform="translate(314.32 409) scale(0.8 1)">1</text><text transform="translate(318.97 409) scale(0.8 1)">3</text></g>
<g font-family="Liberation Sans, sans-serif" font-size="10" fill="#bdbdbd" text-anchor="middle"><text transform="translate(357.82 409) scale(0.8 1)">1</text><text transform="translate(362.47 409) scale(0.8 1)">4</text></g>
<g font-family="Liberation Sans, sans-serif" font-size="10" fill="#bdbdbd" text-anchor="middle"><text transform="translate(390.82 409) scale(0.8 1)">1</text><text transform="translate(395.47 409) scale(0.8 1)">5</text></g>
<g font-family="Liberation Sans, sans-serif" font-size="10" fill="#bdbdbd" text-anchor="middle"><text transform="translate(411.82 409) scale(0.8 1)">1</text><text transform="translate(416.47 409) scale(0.8 1)">6</text></g>
<g font-family="Liberation Sans, sans-serif" font-size="10" fill="#bdbdbd" text-anchor="middle"><text transform="translate(435.82 409) scale(0.8 1)">1</text><text transform="translate(440.47 409) scale(0.8 1)">7</text></g>
<g font-family="Liberation Sans, sans-serif" font-size="10" fill="#bdbdbd" text-anchor="middle"><text transform="translate(480.43 409) scale(0.8 1)">1</text><text transform="translate(485.07 409) scale(0.8 1)">8</text></g>
<g font-family="Liberation Sans, sans-serif" font-size="10" fill="#bdbdbd" text-anchor="middle"><text transform="translate(527.83 409) scale(0.8 1)">1</text><text transform="translate(532.48 409) scale(0.8 1)">9</text></g>
<g font-family="Liberation Sans, sans-serif" font-size="10" fill="#bdbdbd" text-anchor="middle"><text transform="translate(573.53 409) scale(0.8 1)">2</text><text transform="translate(578.18 409) scale(0.8 1)">0</text></g>
<g font-family="Liberation Sans, sans-serif" font-size="10" fill="#bdbdbd" text-anchor="middle"><text transform="translate(622.53 409) scale(0.8 1)">2</text><text transform="translate(627.18 409) scale(0.8 1)">1</text></g>
<g font-family="Liberation Sans, sans-serif" font-size="10" fill="#bdbdbd" text-anchor="middle"><text transform="translate(670.33 409) scale(0.8 1)">2</text><text transform="translate(674.98 409) scale(0.8 1)">2</text></g>
<g font-family="Liberation Sans, sans-serif" font-size="10" fill="#bdbdbd" text-anchor="middle"><text transform="translate(718.83 409) scale(0.8 1)">2</text><text transform="translate(723.48 409) scale(0.8 1)">3</text></g>
<g font-family="Liberation Sans, sans-serif" font-size="10" fill="#bdbdbd" text-anchor="middle"><text transform="translate(766.83 409) scale(0.8 1)">0</text><text transform="translate(771.48 409) scale(0.8 1)">0</text></g>
<g font-family="Liberation Sans, sans-serif" font-size="10" fill="#bdbdbd" text-anchor="middle"><text transform="translate(813.83 409) scale(0.8 1)">0</text><text transform="translate(818.48 409) scale(0.8 1)">1</text></g>
<g font-family="Liberation Sans, sans-serif" font-size="10" fill="#bdbdbd" text-anchor="middle"><text transform="translate(860.33 409) scale(0.8 1)">0</text><text transform="translate(864.98 409) scale(0.8 1)">2</text></g>
<g font-family="Liberation Sans, sans-serif" font-size="10" fill="#bdbdbd" text-anchor="middle"><text transform="translate(893.83 409) scale(0.8 1)">0</text><text transform="translate(898.48 409) scale(0.8 1)">3</text></g>
<g font-family="Liberation Sans, sans-serif" font-size="10" fill="#bdbdbd" text-anchor="middle"><text transform="translate(927.83 409) scale(0.8 1)">0</text><text transform="translate(932.48 409) scale(0.8 1)">4</text></g>
<g font-family="Liberation Sans, sans-serif" font-size="10" fill="#bdbdbd" text-anchor="middle"><text transform="translate(950.33 409) scale(0.8 1)">0</text><text transform="translate(954.98 409) scale(0.8 1)">5</text></g>
<g font-family="Liberation Sans, sans-serif" font-size="10" fill="#bdbdbd" text-anchor="middle"><text transform="translate(955.83 409) scale(0.8 1)">0</text><text transform="translate(960.48 409) scale(0.8 1)">6</text></g>
<g font-family="Liberation Sans, sans-serif" font-size="10" fill="#bdbdbd" text-anchor="middle"><text transform="translate(33.83 536) scale(0.8 1)">0</text><text transform="translate(38.48 536) scale(0.8 1)">0</text></g>
<g font-family="Liberation Sans, sans-serif" font-size="10" fill="#bdbdbd" text-anchor="middle"><text transform="translate(48.83 536) scale(0.8 1)">0</text><text transform="translate(53.48 536) scale(0.8 1)">1</text></g>
<g font-family="Liberation Sans, sans-serif" font-size="10" fill="#bdbdbd" text-anchor="middle"><text transform="translate(71.33 536) scale(0.8 1)">0</text><text transform="translate(75.98 536) scale(0.8 1)">2</text></g>
<g font-family="Liberation Sans, sans-serif" font-size="10" fill="#bdbdbd" text-anchor="middle"><text transform="translate(86.12 536) scale(0.8 1)">0</text><text transform="translate(90.78 536) scale(0.8 1)">3</text></g>
<g font-family="Liberation Sans, sans-serif" font-size="10" fill="#bdbdbd" text-anchor="middle"><text transform="translate(88.62 536) scale(0.8 1)">0</text><text transform="translate(93.28 536) scale(0.8 1)">4</text></g>
<g font-family="Liberation Sans, sans-serif" font-size="10" fill="#bdbdbd" text-anchor="middle"><text transform="translate(100.42 536) scale(0.8 1)">0</text><text transform="translate(105.08 536) scale(0.8 1)">5</text></g>
<g font-family="Liberation Sans, sans-serif" font-size="10" fill="#bdbdbd" text-anchor="middle"><text transform="translate(102.62 536) scale(0.8 1)">0</text><text transform="translate(107.28 536) scale(0.8 1)">6</text></g>
<g font-family="Liberation Sans, sans-serif" font-size="10" fill="#bdbdbd" text-anchor="middle"><text transform="translate(126.83 536) scale(0.8 1)">0</text><text transform="translate(131.47 536) scale(0.8 1)">9</text></g>
<g font-family="Liberation Sans, sans-serif" font-size="10" fill="#bdbdbd" text-anchor="middle"><text transform="translate(175.57 536) scale(0.8 1)">1</text><text transform="translate(180.22 536) scale(0.8 1)">0</text></g>
<g font-family="Liberation Sans, sans-serif" font-size="10" fill="#bdbdbd" text-anchor="middle"><text transform="translate(223.82 536) scale(0.8 1)">1</text><text transform="translate(228.47 536) scale(0.8 1)">1</text></g>
<g font-family="Liberation Sans, sans-serif" font-size="10" fill="#bdbdbd" text-anchor="middle"><text transform="translate(269.82 536) scale(0.8 1)">1</text><text transform="translate(274.47 536) scale(0.8 1)">2</text></g>
<g font-family="Liberation Sans, sans-serif" font-size="10" fill="#bdbdbd" text-anchor="middle"><text transform="translate(314.32 536) scale(0.8 1)">1</text><text transform="translate(318.97 536) scale(0.8 1)">3</text></g>
<g font-family="Liberation Sans, sans-serif" font-size="10" fill="#bdbdbd" text-anchor="middle"><text transform="translate(357.82 536) scale(0.8 1)">1</text><text transform="translate(362.47 536) scale(0.8 1)">4</text></g>
<g font-family="Liberation Sans, sans-serif" font-size="10" fill="#bdbdbd" text-anchor="middle"><text transform="translate(390.82 536) scale(0.8 1)">1</text><text transform="translate(395.47 536) scale(0.8 1)">5</text></g>
<g font-family="Liberation Sans, sans-serif" font-size="10" fill="#bdbdbd" text-anchor="middle"><text transform="translate(411.82 536) scale(0.8 1)">1</text><text transform="translate(416.47 536) scale(0.8 1)">6</text></g>
<g font-family="Liberation Sans, sans-serif" font-size="10" fill="#bdbdbd" text-anchor="middle"><text transform="translate(435.82 536) scale(0.8 1)">1</text><text transform="translate(440.47 536) scale(0.8 1)">7</text></g>
<g font-family="Liberation Sans, sans-serif" font-size="10" fill="#bdbdbd" text-anchor="middle"><text transform="translate(480.43 536) scale(0.8 1)">1</text><text transform="translate(485.07 536) scale(0.8 1)">8</text></g>
<g font-family="Liberation Sans, sans-serif" font-size="10" fill="#bdbdbd" text-anchor="middle"><text transform="translate(527.83 536) scale(0.8 1)">1</text><text transform="translate(532.48 536) scale(0.8 1)">9</text></g>
<g font-family="Liberation Sans, sans-serif" font-size="10" fill="#bdbdbd" text-anchor="middle"><text transform="translate(573.53 536) scale(0.8 1)">2</text><text transform="translate(578.18 536) scale(0.8 1)">0</text></g>
<g font-family="Liberation Sans, sans-serif" font-size="10" fill="#bdbdbd" text-anchor="middle"><text transform="translate(622.53 536) scale(0.8 1)">2</text><text transform="translate(627.18 536) scale(0.8 1)">1</text></g>
<g font-family="Liberation Sans, sans-serif" font-size="10" fill="#bdbdbd" text-anchor="middle"><text transform="translate(670.33 536) scale(0.8 1)">2</text><text transform="translate(674.98 536) scale(0.8 1)">2</text></g>
<g font-family="Liberation Sans, sans-serif" font-size="10" fill="#bdbdbd" text-anchor="middle"><text transform="translate(718.83 536) scale(0.8 1)">2</text><text transform="translate(723.48 536) scale(0.8 1)">3</text></g>
<g font-family="Liberation Sans, sans-serif" font-size="10" fill="#bdbdbd" text-anchor="middle"><text transform="translate(766.83 536) scale(0.8 1)">0</text><text transform="translate(771.48 536) scale(0.8 1)">0</text></g>
<g font-family="Liberation Sans, sans-serif" font-size="10" fill="#bdbdbd" text-anchor="middle"><text transform="translate(813.83 536) scale(0.8 1)">0</text><text transform="translate(818.48 536) scale(0.8 1)">1</text></g>
<g font-family="Liberation Sans, sans-serif" font-size="10" fill="#bdbdbd" text-anchor="middle"><text transform="translate(860.33 536) scale(0.8 1)">0</text><text transform="translate(864.98 536) scale(0.8 1)">2</text></g>
<g font-family="Liberation Sans, sans-serif" font-size="10" fill="#bdbdbd" text-anchor="middle"><text transform="translate(893.83 536) scale(0.8 1)">0</text><text transform="translate(898.48 536) scale(0.8 1)">3</text></g>
<g font-family="Liberation Sans, sans-serif" font-size="10" fill="#bdbdbd" text-anchor="middle"><text transform="translate(927.83 536) scale(0.8 1)">0</text><text transform="translate(932.48 536) scale(0.8 1)">4</text></g>
<g font-family="Liberation Sans, sans-serif" font-size="10" fill="#bdbdbd" text-anchor="middle"><text transform="translate(950.33 536) scale(0.8 1)">0</text><text transform="translate(954.98 536) scale(0.8 1)">5</text></g>
<g font-family="Liberation Sans, sans-serif" font-size="10" fill="#bdbdbd" text-anchor="middle"><text transform="translate(955.83 536) scale(0.8 1)">0</text><text transform="translate(960.48 536) scale(0.8 1)">6</text></g>
<g font-family="Liberation Sans, sans-serif" font-size="10" fill="#bdbdbd" text-anchor="middle"><text transform="translate(34.33 183) scale(0.8 1)">2</text><text transform="translate(38.98 183) scale(0.8 1)">9</text></g>
<g font-family="Liberation Sans, sans-serif" font-size="10" fill="#bdbdbd" text-anchor="middle"><text transform="translate(767.33 183) scale(0.8 1)">3</text><text transform="translate(771.98 183) scale(0.8 1)">0</text></g>
<g font-family="Liberation Sans, sans-serif" font-size="10" fill="#bdbdbd" text-anchor="middle"><text transform="translate(34.33 397) scale(0.8 1)">2</text><text transform="translate(38.98 397) scale(0.8 1)">9</text></g>
<g font-family="Liberation Sans, sans-serif" font-size="10" fill="#bdbdbd" text-anchor="middle"><text transform="translate(767.33 397) scale(0.8 1)">3</text><text transform="translate(771.98 397) scale(0.8 1)">0</text></g>
<g font-family="Liberation Sans, sans-serif" font-size="10" fill="#bdbdbd" text-anchor="middle"><text transform="translate(34.33 524) scale(0.8 1)">2</text><text transform="translate(38.98 524) scale(0.8 1)">9</text></g>
<g font-family="Liberation Sans, sans-serif" font-size="10" fill="#bdbdbd" text-anchor="middle"><text transform="translate(767.33 524) scale(0.8 1)">3</text><text transform="translate(771.98 524) scale(0.8 1)">0</text></g>
<g font-family="Liberation Sans, sans-serif" font-size="10" fill="#b0b0b0" text-anchor="middle"><text transform="translate(973.90 65) scale(0.8 1)">8</text><text transform="translate(978.70 65) scale(0.8 1)">,</text><text transform="translate(983.50 65) scale(0.8 1)">0</text><text transform="translate(988.30 65) scale(0.8 1)">0</text><text transform="translate(993.10 65) scale(0.8 1)">0</text></g>
<g font-family="Liberation Sans, sans-serif" font-size="10" fill="#b0b0b0" text-anchor="middle"><text transform="translate(973.90 95) scale(0.8 1)">7</text><text transform="translate(978.70 95) scale(0.8 1)">,</text><text transform="translate(983.50 95) scale(0.8 1)">9</text><text transform="translate(988.30 95) scale(0.8 1)">7</text><text transform="translate(993.10 95) scale(0.8 1)">5</text></g>
<g font-family="Liberation Sans, sans-serif" font-size="10" fill="#b0b0b0" text-anchor="middle"><text transform="translate(973.90 155.5) scale(0.8 1)">7</text><text transform="translate(978.70 155.5) scale(0.8 1)">,</text><text transform="translate(983.50 155.5) scale(0.8 1)">9</text><text transform="translate(988.30 155.5) scale(0.8 1)">2</text><text transform="translate(993.10 155.5) scale(0.8 1)">5</text></g>
<g font-family="Liberation Sans, sans-serif" font-size="10" fill="#b0b0b0" text-anchor="middle"><text transform="translate(973.90 185) scale(0.8 1)">7</text><text transform="translate(978.70 185) scale(0.8 1)">,</text><text transform="translate(983.50 185) scale(0.8 1)">9</text><text transform="translate(988.30 185) scale(0.8 1)">0</text><text transform="translate(993.10 185) scale(0.8 1)">0</text></g>
<g font-family="Liberation Sans, sans-serif" font-size="10" fill="#b0b0b0" text-anchor="middle"><text transform="translate(973.90 232) scale(0.8 1)">4</text><text transform="translate(978.70 232) scale(0.8 1)">,</text><text transform="translate(983.50 232) scale(0.8 1)">0</text><text transform="translate(988.30 232) scale(0.8 1)">0</text><text transform="translate(993.10 232) scale(0.8 1)">0</text></g>
<g font-family="Liberation Sans, sans-serif" font-size="10" fill="#b0b0b0" text-anchor="middle"><text transform="translate(973.90 281.5) scale(0.8 1)">3</text><text transform="translate(978.70 281.5) scale(0.8 1)">,</text><text transform="translate(983.50 281.5) scale(0.8 1)">9</text><text transform="translate(988.30 281.5) scale(0.8 1)">7</text><text transform="translate(993.10 281.5) scale(0.8 1)">5</text></g>
<g font-family="Liberation Sans, sans-serif" font-size="10" fill="#b0b0b0" text-anchor="middle"><text transform="translate(973.90 380) scale(0.8 1)">3</text><text transform="translate(978.70 380) scale(0.8 1)">,</text><text transform="translate(983.50 380) scale(0.8 1)">9</text><text transform="translate(988.30 380) scale(0.8 1)">2</text><text transform="translate(993.10 380) scale(0.8 1)">5</text></g>
<g font-family="Liberation Sans, sans-serif" font-size="10" fill="#b0b0b0" text-anchor="middle"><text transform="translate(973.90 462.5) scale(0.8 1)">4</text><text transform="translate(978.70 462.5) scale(0.8 1)">,</text><text transform="translate(983.50 462.5) scale(0.8 1)">0</text><text transform="translate(988.30 462.5) scale(0.8 1)">0</text><text transform="translate(993.10 462.5) scale(0.8 1)">0</text></g>
<g font-family="Liberation Sans, sans-serif" font-size="10" fill="#b0b0b0" text-anchor="middle"><text transform="translate(973.90 512) scale(0.8 1)">3</text><text transform="translate(978.70 512) scale(0.8 1)">,</text><text transform="translate(983.50 512) scale(0.8 1)">9</text><text transform="translate(988.30 512) scale(0.8 1)">5</text><text transform="translate(993.10 512) scale(0.8 1)">0</text></g>
<rect x="971" y="119" width="46" height="18" fill="#d6d6d6"/>
<g font-family="Liberation Sans, sans-serif" font-size="10" fill="#161616" text-anchor="middle" font-weight="bold" stroke="#161616" stroke-width="0.45"><text transform="translate(983.80 130.3) scale(0.92 1)">7</text><text transform="translate(988.80 130.3) scale(0.92 1)">,</text><text transform="translate(993.80 130.3) scale(0.92 1)">9</text><text transform="translate(998.80 130.3) scale(0.92 1)">5</text><text transform="translate(1003.80 130.3) scale(0.92 1)">0</text></g>
<rect x="971" y="317" width="46" height="17" fill="#d6d6d6"/>
<g font-family="Liberation Sans, sans-serif" font-size="10" fill="#161616" text-anchor="middle" font-weight="bold" stroke="#161616" stroke-width="0.45"><text transform="translate(983.80 328.3) scale(0.92 1)">3</text><text transform="translate(988.80 328.3) scale(0.92 1)">,</text><text transform="translate(993.80 328.3) scale(0.92 1)">9</text><text transform="translate(998.80 328.3) scale(0.92 1)">5</text><text transform="translate(1003.80 328.3) scale(0.92 1)">4</text></g>
<rect x="971" y="461" width="46" height="17" fill="#d6d6d6"/>
<g font-family="Liberation Sans, sans-serif" font-size="10" fill="#161616" text-anchor="middle" font-weight="bold" stroke="#161616" stroke-width="0.45"><text transform="translate(983.80 472.3) scale(0.92 1)">3</text><text transform="translate(988.80 472.3) scale(0.92 1)">,</text><text transform="translate(993.80 472.3) scale(0.92 1)">9</text><text transform="translate(998.80 472.3) scale(0.92 1)">9</text><text transform="translate(1003.80 472.3) scale(0.92 1)">6</text></g>
<clipPath id="c1"><rect x="5" y="39" width="965" height="148"/></clipPath>
<clipPath id="c2"><rect x="5" y="204" width="965" height="197"/></clipPath>
<clipPath id="c3"><rect x="5" y="419" width="965" height="109"/></clipPath>
<g clip-path="url(#c1)">
<path fill="#d8c868" d="M6.0 123.1h2.0v1.1h-2.0zM18.8 144.6h2.0v1.1h-2.0zM20.4 143.8h2.0v1.1h-2.0zM22.0 143.0h2.0v1.1h-2.0zM31.6 135.2h2.0v1.1h-2.0zM47.6 135.5h2.0v1.1h-2.0zM50.8 137.5h2.0v1.1h-2.0zM57.2 134.4h2.0v1.1h-2.0zM58.8 135.1h2.0v1.1h-2.0zM60.4 134.0h2.0v1.1h-2.0zM62.0 132.9h2.0v1.1h-2.0zM70.0 127.6h2.0v1.1h-2.0zM73.2 130.3h2.0v1.1h-2.0zM74.8 131.6h2.0v1.1h-2.0zM78.0 139.2h2.0v1.1h-2.0zM79.6 140.2h2.0v1.1h-2.0zM84.4 143.0h2.0v1.1h-2.0zM92.4 143.3h2.0v1.1h-2.0zM103.6 145.2h2.0v1.1h-2.0zM108.4 140.6h2.0v1.1h-2.0zM110.0 140.9h2.0v1.1h-2.0zM116.4 158.3h2.0v1.1h-2.0zM119.6 158.5h2.0v1.1h-2.0zM121.2 158.2h2.0v1.1h-2.0zM122.8 158.2h2.0v1.1h-2.0zM125.2 159.0h1.4v1.1h-1.4zM127.6 152.3h1.4v1.1h-1.4zM129.2 153.8h1.4v1.1h-1.4zM130.8 155.6h1.4v1.1h-1.4zM132.4 154.1h1.4v1.1h-1.4zM133.2 154.7h1.4v1.1h-1.4zM134.8 151.1h1.4v1.1h-1.4zM135.6 151.3h1.4v1.1h-1.4zM138.0 148.2h1.4v1.1h-1.4zM138.8 148.8h1.4v1.1h-1.4zM141.2 149.8h1.4v1.1h-1.4zM142.8 152.2h1.4v1.1h-1.4zM144.4 154.2h1.4v1.1h-1.4zM146.8 153.0h1.4v1.1h-1.4zM149.2 152.8h1.4v1.1h-1.4zM151.6 155.8h1.4v1.1h-1.4zM152.4 156.3h1.4v1.1h-1.4zM154.0 155.4h1.4v1.1h-1.4zM154.8 155.3h1.4v1.1h-1.4zM155.6 155.7h1.4v1.1h-1.4zM157.2 152.1h1.4v1.1h-1.4zM158.0 153.1h1.4v1.1h-1.4zM159.6 151.4h1.4v1.1h-1.4zM160.4 150.3h1.4v1.1h-1.4zM161.2 151.3h1.4v1.1h-1.4zM162.8 152.4h1.4v1.1h-1.4zM164.4 151.7h1.4v1.1h-1.4zM165.2 152.8h1.4v1.1h-1.4zM168.4 161.1h1.4v1.1h-1.4zM175.6 166.1h1.4v1.1h-1.4zM177.2 164.9h1.4v1.1h-1.4zM178.0 164.9h1.4v1.1h-1.4zM178.8 164.6h1.4v1.1h-1.4zM179.6 163.9h1.4v1.1h-1.4zM180.4 163.0h1.4v1.1h-1.4zM181.2 162.4h1.4v1.1h-1.4zM182.8 160.8h1.4v1.1h-1.4zM183.6 161.1h1.4v1.1h-1.4zM184.4 160.0h1.4v1.1h-1.4zM186.0 160.3h1.4v1.1h-1.4zM189.2 159.7h1.4v1.1h-1.4zM190.0 158.4h1.4v1.1h-1.4zM193.2 159.5h1.4v1.1h-1.4zM195.6 153.1h1.4v1.1h-1.4zM196.4 152.9h1.4v1.1h-1.4zM198.0 149.3h1.4v1.1h-1.4zM200.4 146.3h1.4v1.1h-1.4zM202.0 147.4h1.4v1.1h-1.4zM202.8 144.0h1.4v1.1h-1.4zM203.6 142.9h1.4v1.1h-1.4zM204.4 143.8h1.4v1.1h-1.4zM206.8 143.5h1.4v1.1h-1.4zM208.4 142.0h1.4v1.1h-1.4zM210.0 143.1h1.4v1.1h-1.4zM210.8 145.1h1.4v1.1h-1.4zM211.6 145.2h1.4v1.1h-1.4zM213.2 145.3h1.4v1.1h-1.4zM214.0 145.1h1.4v1.1h-1.4zM214.8 146.0h1.4v1.1h-1.4zM215.6 145.2h1.4v1.1h-1.4zM216.4 143.0h1.4v1.1h-1.4zM217.2 143.2h1.4v1.1h-1.4zM218.0 142.5h1.4v1.1h-1.4zM218.8 142.6h1.4v1.1h-1.4zM219.6 141.5h1.4v1.1h-1.4zM222.0 143.5h1.4v1.1h-1.4zM222.8 144.1h1.4v1.1h-1.4zM224.4 145.2h1.4v1.1h-1.4zM225.2 145.4h1.4v1.1h-1.4zM226.8 147.0h1.4v1.1h-1.4zM227.6 147.6h1.4v1.1h-1.4zM228.4 148.2h1.4v1.1h-1.4zM229.2 148.4h1.4v1.1h-1.4zM230.0 148.9h1.4v1.1h-1.4zM230.8 148.7h1.4v1.1h-1.4zM231.6 148.0h1.4v1.1h-1.4zM233.2 148.1h1.4v1.1h-1.4zM234.0 148.7h1.4v1.1h-1.4zM234.8 149.0h1.4v1.1h-1.4zM235.6 149.5h1.4v1.1h-1.4zM238.8 147.2h1.4v1.1h-1.4zM240.4 146.1h1.4v1.1h-1.4zM242.0 143.0h1.4v1.1h-1.4zM242.8 142.4h1.4v1.1h-1.4zM243.6 142.4h1.4v1.1h-1.4zM244.4 143.6h1.4v1.1h-1.4zM246.8 140.8h1.4v1.1h-1.4zM250.0 138.3h1.4v1.1h-1.4zM250.8 139.1h1.4v1.1h-1.4zM251.6 138.6h1.4v1.1h-1.4zM255.6 140.0h1.4v1.1h-1.4zM258.0 143.0h1.4v1.1h-1.4zM258.8 143.7h1.4v1.1h-1.4zM261.2 140.6h1.4v1.1h-1.4zM265.2 142.6h1.4v1.1h-1.4zM266.0 143.3h1.4v1.1h-1.4zM266.8 144.1h1.4v1.1h-1.4zM268.4 142.0h1.4v1.1h-1.4zM271.6 144.3h1.4v1.1h-1.4zM273.2 145.9h1.4v1.1h-1.4zM274.0 145.0h1.4v1.1h-1.4zM278.8 145.8h1.4v1.1h-1.4zM279.6 146.1h1.4v1.1h-1.4zM280.4 145.2h1.4v1.1h-1.4zM281.2 143.6h1.4v1.1h-1.4zM282.0 142.7h1.4v1.1h-1.4zM282.8 143.1h1.4v1.1h-1.4zM284.4 140.6h1.4v1.1h-1.4zM286.0 139.4h1.4v1.1h-1.4zM286.8 138.4h1.4v1.1h-1.4zM287.6 141.0h1.4v1.1h-1.4zM288.4 140.5h1.4v1.1h-1.4zM289.2 141.6h1.4v1.1h-1.4zM293.2 141.1h1.4v1.1h-1.4zM296.4 142.2h1.4v1.1h-1.4zM297.2 141.7h1.4v1.1h-1.4zM302.0 141.3h1.4v1.1h-1.4zM304.4 139.4h1.4v1.1h-1.4zM305.2 140.4h1.4v1.1h-1.4zM307.6 140.5h1.4v1.1h-1.4zM310.0 138.2h1.4v1.1h-1.4zM310.8 138.6h1.4v1.1h-1.4zM311.6 139.2h1.4v1.1h-1.4zM313.2 139.1h1.4v1.1h-1.4zM314.0 138.2h1.4v1.1h-1.4zM315.6 136.8h1.4v1.1h-1.4zM316.4 137.4h1.4v1.1h-1.4zM318.0 136.1h1.4v1.1h-1.4zM318.8 136.2h1.4v1.1h-1.4zM319.6 138.8h1.4v1.1h-1.4zM321.2 138.5h1.4v1.1h-1.4zM322.0 137.4h1.4v1.1h-1.4zM322.8 138.2h1.4v1.1h-1.4zM323.6 138.3h1.4v1.1h-1.4zM326.0 137.9h1.4v1.1h-1.4zM330.0 134.4h1.4v1.1h-1.4zM330.8 135.4h1.4v1.1h-1.4zM331.6 135.3h1.4v1.1h-1.4zM334.8 141.2h1.4v1.1h-1.4zM337.2 141.0h1.4v1.1h-1.4zM341.2 146.4h1.4v1.1h-1.4zM342.0 144.4h1.4v1.1h-1.4zM342.8 146.0h1.4v1.1h-1.4zM343.6 146.6h1.4v1.1h-1.4zM346.0 148.1h1.4v1.1h-1.4zM346.8 148.7h1.4v1.1h-1.4zM347.6 149.1h1.4v1.1h-1.4zM350.0 148.6h1.4v1.1h-1.4zM353.2 147.0h1.4v1.1h-1.4zM354.0 146.4h1.4v1.1h-1.4zM355.6 149.5h1.4v1.1h-1.4zM357.2 148.2h1.4v1.1h-1.4zM358.0 149.1h1.4v1.1h-1.4zM360.4 144.4h1.4v1.1h-1.4zM362.8 146.9h1.4v1.1h-1.4zM366.0 146.0h1.4v1.1h-1.4zM366.8 146.1h1.4v1.1h-1.4zM368.4 143.8h1.4v1.1h-1.4zM369.2 144.6h1.4v1.1h-1.4zM370.8 142.4h1.4v1.1h-1.4zM371.6 142.2h1.4v1.1h-1.4zM372.4 141.2h1.4v1.1h-1.4zM374.8 142.6h1.4v1.1h-1.4zM375.6 143.3h1.4v1.1h-1.4zM376.4 142.4h1.4v1.1h-1.4zM378.0 144.4h1.4v1.1h-1.4zM378.8 143.1h1.4v1.1h-1.4zM379.6 143.3h1.4v1.1h-1.4zM381.2 146.0h1.4v1.1h-1.4zM382.8 146.8h1.4v1.1h-1.4zM384.4 148.4h1.4v1.1h-1.4zM385.2 149.2h1.4v1.1h-1.4zM386.0 150.2h1.4v1.1h-1.4zM386.8 149.6h1.4v1.1h-1.4zM388.4 151.2h1.4v1.1h-1.4zM390.0 148.0h1.4v1.1h-1.4zM390.8 147.8h1.4v1.1h-1.4zM393.2 147.6h1.4v1.1h-1.4zM395.6 145.3h1.4v1.1h-1.4zM396.4 146.3h1.4v1.1h-1.4zM398.0 147.1h1.4v1.1h-1.4zM399.6 152.3h1.4v1.1h-1.4zM402.0 153.8h1.4v1.1h-1.4zM402.8 154.1h1.4v1.1h-1.4zM403.6 154.0h1.4v1.1h-1.4zM404.4 154.7h1.4v1.1h-1.4zM405.2 155.8h1.4v1.1h-1.4zM407.6 157.4h1.4v1.1h-1.4zM408.4 160.0h1.4v1.1h-1.4zM410.0 157.3h1.4v1.1h-1.4zM410.8 162.1h1.4v1.1h-1.4zM413.2 161.7h1.4v1.1h-1.4zM414.0 161.6h1.4v1.1h-1.4zM414.8 161.5h1.4v1.1h-1.4zM417.2 158.8h1.4v1.1h-1.4zM418.0 158.2h1.4v1.1h-1.4zM418.8 159.0h1.4v1.1h-1.4zM421.2 164.2h1.4v1.1h-1.4zM422.8 167.2h1.4v1.1h-1.4zM423.6 166.8h1.4v1.1h-1.4zM424.4 165.7h1.4v1.1h-1.4zM425.2 166.6h1.4v1.1h-1.4zM426.0 166.4h1.4v1.1h-1.4zM427.6 168.5h1.4v1.1h-1.4zM429.2 171.3h1.4v1.1h-1.4zM430.0 171.1h1.4v1.1h-1.4zM431.6 172.0h1.4v1.1h-1.4zM433.2 173.3h1.4v1.1h-1.4zM435.6 167.9h1.4v1.1h-1.4zM437.2 170.0h1.4v1.1h-1.4zM441.2 170.5h1.4v1.1h-1.4zM442.0 171.1h1.4v1.1h-1.4zM442.8 171.4h1.4v1.1h-1.4zM444.4 168.7h1.4v1.1h-1.4zM446.0 164.6h1.4v1.1h-1.4zM446.8 164.1h1.4v1.1h-1.4zM449.2 161.8h1.4v1.1h-1.4zM450.8 163.3h1.4v1.1h-1.4zM451.6 165.7h1.4v1.1h-1.4zM452.4 165.2h1.4v1.1h-1.4zM456.4 168.3h1.4v1.1h-1.4zM457.2 168.7h1.4v1.1h-1.4zM458.0 167.9h1.4v1.1h-1.4zM460.4 168.5h1.4v1.1h-1.4zM462.8 165.4h1.4v1.1h-1.4zM463.6 166.7h1.4v1.1h-1.4zM466.0 166.7h1.4v1.1h-1.4zM466.8 167.1h1.4v1.1h-1.4zM467.6 167.7h1.4v1.1h-1.4zM472.4 166.1h1.4v1.1h-1.4zM473.2 163.7h1.4v1.1h-1.4zM474.0 164.0h1.4v1.1h-1.4zM476.4 164.4h1.4v1.1h-1.4zM477.2 163.6h1.4v1.1h-1.4zM478.0 164.6h1.4v1.1h-1.4zM478.8 163.8h1.4v1.1h-1.4zM479.6 163.6h1.4v1.1h-1.4zM481.2 163.8h1.4v1.1h-1.4zM483.6 162.6h1.4v1.1h-1.4zM486.8 161.5h1.4v1.1h-1.4zM488.4 158.7h1.4v1.1h-1.4zM489.2 157.8h1.4v1.1h-1.4zM490.8 157.6h1.4v1.1h-1.4zM493.2 158.1h1.4v1.1h-1.4zM494.0 157.6h1.4v1.1h-1.4zM494.8 156.6h1.4v1.1h-1.4zM495.6 155.6h1.4v1.1h-1.4zM496.4 156.2h1.4v1.1h-1.4zM497.2 156.8h1.4v1.1h-1.4zM498.0 156.9h1.4v1.1h-1.4zM498.8 156.9h1.4v1.1h-1.4zM501.2 160.5h1.4v1.1h-1.4zM502.0 160.7h1.4v1.1h-1.4zM502.8 159.1h1.4v1.1h-1.4zM503.6 158.9h1.4v1.1h-1.4zM506.0 155.5h1.4v1.1h-1.4zM508.4 155.3h1.4v1.1h-1.4zM509.2 156.1h1.4v1.1h-1.4zM510.0 155.2h1.4v1.1h-1.4zM510.8 156.0h1.4v1.1h-1.4zM512.4 158.0h1.4v1.1h-1.4zM513.2 157.6h1.4v1.1h-1.4zM514.0 157.7h1.4v1.1h-1.4zM514.8 158.6h1.4v1.1h-1.4zM515.6 156.8h1.4v1.1h-1.4zM516.4 157.0h1.4v1.1h-1.4zM517.2 156.2h1.4v1.1h-1.4zM519.6 153.4h1.4v1.1h-1.4zM520.4 153.0h1.4v1.1h-1.4zM522.0 151.5h1.4v1.1h-1.4zM523.6 150.2h1.4v1.1h-1.4zM525.2 147.7h1.4v1.1h-1.4zM526.0 148.6h1.4v1.1h-1.4zM527.6 150.2h1.4v1.1h-1.4zM530.0 148.9h1.4v1.1h-1.4zM531.6 147.3h1.4v1.1h-1.4zM534.0 146.1h1.4v1.1h-1.4zM534.8 143.7h1.4v1.1h-1.4zM535.6 143.9h1.4v1.1h-1.4zM537.2 140.2h1.4v1.1h-1.4zM538.8 142.6h1.4v1.1h-1.4zM539.6 141.6h1.4v1.1h-1.4zM542.8 143.2h1.4v1.1h-1.4zM543.6 142.4h1.4v1.1h-1.4zM545.2 140.5h1.4v1.1h-1.4zM546.0 139.8h1.4v1.1h-1.4zM546.8 140.2h1.4v1.1h-1.4zM549.2 135.0h1.4v1.1h-1.4zM553.2 125.4h1.4v1.1h-1.4zM558.8 98.6h1.4v1.1h-1.4zM560.4 101.0h1.4v1.1h-1.4zM561.2 100.7h1.4v1.1h-1.4zM562.8 106.0h1.4v1.1h-1.4zM563.6 105.7h1.4v1.1h-1.4zM564.4 104.7h1.4v1.1h-1.4zM566.0 101.6h1.4v1.1h-1.4zM567.6 99.4h1.4v1.1h-1.4zM568.4 99.5h1.4v1.1h-1.4zM569.2 98.0h1.4v1.1h-1.4zM571.6 94.6h1.4v1.1h-1.4zM572.4 95.3h1.4v1.1h-1.4zM573.2 96.5h1.4v1.1h-1.4zM574.8 90.6h1.4v1.1h-1.4zM576.4 88.8h1.4v1.1h-1.4zM577.2 93.1h1.4v1.1h-1.4zM585.2 94.9h1.4v1.1h-1.4zM587.6 91.6h1.4v1.1h-1.4zM589.2 93.5h1.4v1.1h-1.4zM590.0 93.8h1.4v1.1h-1.4zM593.2 94.7h1.4v1.1h-1.4zM594.0 91.8h1.4v1.1h-1.4zM596.4 94.5h1.4v1.1h-1.4zM597.2 95.1h1.4v1.1h-1.4zM606.8 97.3h1.4v1.1h-1.4zM612.4 95.1h1.4v1.1h-1.4zM615.6 99.2h1.4v1.1h-1.4zM617.2 104.6h1.4v1.1h-1.4zM622.8 98.3h1.4v1.1h-1.4zM623.6 100.0h1.4v1.1h-1.4zM626.0 94.3h1.4v1.1h-1.4zM630.0 89.1h1.4v1.1h-1.4zM630.8 88.9h1.4v1.1h-1.4zM634.0 89.9h1.4v1.1h-1.4zM634.8 90.5h1.4v1.1h-1.4zM637.2 92.3h1.4v1.1h-1.4zM639.6 89.4h1.4v1.1h-1.4zM640.4 91.2h1.4v1.1h-1.4zM642.0 90.4h1.4v1.1h-1.4zM642.8 90.7h1.4v1.1h-1.4zM644.4 85.8h1.4v1.1h-1.4zM646.0 75.9h1.4v1.1h-1.4zM646.8 73.5h1.4v1.1h-1.4zM652.4 72.1h1.4v1.1h-1.4zM654.8 65.9h1.4v1.1h-1.4zM658.8 67.4h1.4v1.1h-1.4zM660.4 64.6h1.4v1.1h-1.4zM662.8 66.6h1.4v1.1h-1.4zM664.4 71.0h1.4v1.1h-1.4zM666.0 66.4h1.4v1.1h-1.4zM668.4 59.0h1.4v1.1h-1.4zM669.2 58.4h1.4v1.1h-1.4zM672.4 54.8h1.4v1.1h-1.4zM673.2 55.2h1.4v1.1h-1.4zM674.0 60.9h1.4v1.1h-1.4zM675.6 61.0h1.4v1.1h-1.4zM678.0 55.3h1.4v1.1h-1.4zM681.2 62.1h1.4v1.1h-1.4zM683.6 53.8h1.4v1.1h-1.4zM685.2 50.5h1.4v1.1h-1.4zM686.0 50.3h1.4v1.1h-1.4zM688.4 47.3h1.4v1.1h-1.4zM689.2 47.9h1.4v1.1h-1.4zM690.0 49.1h1.4v1.1h-1.4zM692.4 48.2h1.4v1.1h-1.4zM693.2 48.5h1.4v1.1h-1.4zM694.0 47.7h1.4v1.1h-1.4zM697.2 49.7h1.4v1.1h-1.4zM698.8 55.7h1.4v1.1h-1.4zM699.6 55.4h1.4v1.1h-1.4zM702.0 66.8h1.4v1.1h-1.4zM702.8 70.8h1.4v1.1h-1.4zM705.2 74.6h1.4v1.1h-1.4zM706.0 79.7h1.4v1.1h-1.4zM706.8 83.0h1.4v1.1h-1.4zM709.2 85.1h1.4v1.1h-1.4zM712.4 101.3h1.4v1.1h-1.4zM730.0 121.0h1.4v1.1h-1.4zM734.8 113.6h1.4v1.1h-1.4zM736.4 115.3h1.4v1.1h-1.4zM746.0 111.5h1.4v1.1h-1.4zM752.4 116.6h1.4v1.1h-1.4zM754.0 120.7h1.4v1.1h-1.4zM754.8 120.2h1.4v1.1h-1.4zM756.4 115.0h1.4v1.1h-1.4zM757.2 114.3h1.4v1.1h-1.4zM758.0 114.2h1.4v1.1h-1.4zM761.2 119.9h1.4v1.1h-1.4zM762.8 119.3h1.4v1.1h-1.4zM763.6 113.3h1.4v1.1h-1.4zM766.0 120.1h1.4v1.1h-1.4zM767.6 126.7h1.4v1.1h-1.4zM770.8 126.8h1.4v1.1h-1.4zM771.6 126.0h1.4v1.1h-1.4zM774.8 131.2h1.4v1.1h-1.4zM775.6 131.7h1.4v1.1h-1.4zM776.4 130.6h1.4v1.1h-1.4zM777.2 129.4h1.4v1.1h-1.4zM779.6 133.7h1.4v1.1h-1.4zM780.4 133.8h1.4v1.1h-1.4zM782.8 129.8h1.4v1.1h-1.4zM784.4 129.2h1.4v1.1h-1.4zM785.2 129.7h1.4v1.1h-1.4zM786.0 129.7h1.4v1.1h-1.4zM787.6 129.7h1.4v1.1h-1.4zM790.0 127.1h1.4v1.1h-1.4zM790.8 127.4h1.4v1.1h-1.4zM791.6 128.4h1.4v1.1h-1.4zM794.0 129.2h1.4v1.1h-1.4zM795.6 131.2h1.4v1.1h-1.4zM796.4 130.8h1.4v1.1h-1.4zM798.0 133.2h1.4v1.1h-1.4zM798.8 132.5h1.4v1.1h-1.4zM800.4 130.5h1.4v1.1h-1.4zM801.2 130.6h1.4v1.1h-1.4zM802.0 128.5h1.4v1.1h-1.4zM804.4 126.8h1.4v1.1h-1.4zM806.0 124.9h1.4v1.1h-1.4zM807.6 125.4h1.4v1.1h-1.4zM810.0 129.5h1.4v1.1h-1.4zM810.8 128.3h1.4v1.1h-1.4zM811.6 128.6h1.4v1.1h-1.4zM812.4 129.7h1.4v1.1h-1.4zM815.6 128.0h1.4v1.1h-1.4zM818.0 130.3h1.4v1.1h-1.4zM820.4 133.8h1.4v1.1h-1.4zM821.2 134.8h1.4v1.1h-1.4zM822.0 136.3h1.4v1.1h-1.4zM824.4 137.5h1.4v1.1h-1.4zM827.6 140.8h1.4v1.1h-1.4zM829.2 139.2h1.4v1.1h-1.4zM830.0 138.7h1.4v1.1h-1.4zM830.8 137.4h1.4v1.1h-1.4zM831.6 136.8h1.4v1.1h-1.4zM834.0 134.8h1.4v1.1h-1.4zM834.8 133.9h1.4v1.1h-1.4zM835.6 131.8h1.4v1.1h-1.4zM836.4 132.9h1.4v1.1h-1.4zM838.0 131.2h1.4v1.1h-1.4zM838.8 131.4h1.4v1.1h-1.4zM839.6 132.3h1.4v1.1h-1.4zM840.4 133.5h1.4v1.1h-1.4zM841.2 133.6h1.4v1.1h-1.4zM842.0 133.5h1.4v1.1h-1.4zM842.8 133.3h1.4v1.1h-1.4zM845.2 133.9h1.4v1.1h-1.4zM846.0 134.8h1.4v1.1h-1.4zM846.8 135.5h1.4v1.1h-1.4zM847.6 136.7h1.4v1.1h-1.4zM850.0 136.8h1.4v1.1h-1.4zM851.6 133.1h1.4v1.1h-1.4zM852.4 133.4h1.4v1.1h-1.4zM853.2 133.4h1.4v1.1h-1.4zM854.0 132.6h1.4v1.1h-1.4zM856.4 131.4h1.4v1.1h-1.4zM858.0 131.1h1.4v1.1h-1.4zM860.4 132.9h1.4v1.1h-1.4zM861.2 132.9h1.4v1.1h-1.4zM866.0 134.8h1.4v1.1h-1.4zM866.8 135.7h1.4v1.1h-1.4zM868.4 137.8h1.4v1.1h-1.4zM869.2 136.9h1.4v1.1h-1.4zM870.0 138.1h1.4v1.1h-1.4zM871.6 139.4h1.4v1.1h-1.4zM872.4 139.4h1.4v1.1h-1.4zM873.2 138.5h1.4v1.1h-1.4zM874.8 139.6h1.4v1.1h-1.4zM875.6 140.8h1.4v1.1h-1.4zM876.4 140.0h1.4v1.1h-1.4zM877.2 141.9h1.4v1.1h-1.4zM879.6 141.2h1.4v1.1h-1.4zM880.4 140.4h1.4v1.1h-1.4zM881.2 139.8h1.4v1.1h-1.4zM882.0 139.8h1.4v1.1h-1.4zM882.8 138.5h1.4v1.1h-1.4zM883.6 138.1h1.4v1.1h-1.4zM884.4 138.8h1.4v1.1h-1.4zM886.0 140.6h1.4v1.1h-1.4zM886.8 140.2h1.4v1.1h-1.4zM887.6 140.5h1.4v1.1h-1.4zM888.4 141.6h1.4v1.1h-1.4zM889.2 138.3h1.4v1.1h-1.4zM890.8 138.7h1.4v1.1h-1.4zM891.6 135.7h1.4v1.1h-1.4zM893.2 131.6h1.4v1.1h-1.4zM894.0 130.7h1.4v1.1h-1.4zM895.6 127.0h1.4v1.1h-1.4zM896.4 126.1h1.4v1.1h-1.4zM897.2 127.3h1.4v1.1h-1.4zM898.0 126.9h1.4v1.1h-1.4zM899.6 126.0h1.4v1.1h-1.4zM900.4 126.4h1.4v1.1h-1.4zM901.2 127.1h1.4v1.1h-1.4zM902.8 127.6h1.4v1.1h-1.4zM903.6 127.0h1.4v1.1h-1.4zM904.4 128.1h1.4v1.1h-1.4zM905.2 127.6h1.4v1.1h-1.4zM906.0 129.1h1.4v1.1h-1.4zM907.6 128.4h1.4v1.1h-1.4zM908.4 129.1h1.4v1.1h-1.4zM909.2 129.1h1.4v1.1h-1.4zM910.0 127.6h1.4v1.1h-1.4zM910.8 128.4h1.4v1.1h-1.4zM911.6 128.8h1.4v1.1h-1.4zM912.4 128.0h1.4v1.1h-1.4zM913.2 128.7h1.4v1.1h-1.4zM914.0 127.4h1.4v1.1h-1.4zM914.8 126.8h1.4v1.1h-1.4zM915.6 127.0h1.4v1.1h-1.4zM916.4 127.2h1.4v1.1h-1.4zM917.2 126.9h1.4v1.1h-1.4zM918.0 125.8h1.4v1.1h-1.4zM919.6 126.0h1.4v1.1h-1.4zM921.2 126.6h1.4v1.1h-1.4zM922.8 128.8h1.4v1.1h-1.4zM923.6 129.8h1.4v1.1h-1.4zM924.4 131.2h1.4v1.1h-1.4zM925.2 131.0h1.4v1.1h-1.4zM926.0 132.0h1.4v1.1h-1.4zM926.8 131.2h1.4v1.1h-1.4zM927.6 132.1h1.4v1.1h-1.4zM928.4 132.0h1.4v1.1h-1.4zM929.2 131.2h1.4v1.1h-1.4zM930.0 130.8h1.4v1.1h-1.4zM931.6 129.6h1.4v1.1h-1.4zM932.4 128.9h1.4v1.1h-1.4zM933.2 128.0h1.4v1.1h-1.4zM934.0 129.4h1.4v1.1h-1.4zM935.6 129.0h1.4v1.1h-1.4zM936.4 128.0h1.4v1.1h-1.4zM937.2 127.5h1.4v1.1h-1.4zM938.0 126.3h1.4v1.1h-1.4zM938.8 125.3h1.4v1.1h-1.4zM939.6 126.8h1.4v1.1h-1.4zM940.4 127.1h1.4v1.1h-1.4zM941.2 128.4h1.4v1.1h-1.4zM942.0 127.2h1.4v1.1h-1.4zM943.6 127.4h1.4v1.1h-1.4zM944.4 127.4h1.4v1.1h-1.4zM946.0 124.1h1.4v1.1h-1.4zM946.8 123.8h1.4v1.1h-1.4zM948.4 123.2h1.4v1.1h-1.4zM949.2 121.9h1.4v1.1h-1.4zM950.0 121.3h1.4v1.1h-1.4zM950.8 120.3h1.4v1.1h-1.4zM951.6 119.9h1.4v1.1h-1.4zM954.0 118.8h1.4v1.1h-1.4zM954.8 117.5h1.4v1.1h-1.4zM956.4 117.8h1.4v1.1h-1.4zM958.0 118.2h1.4v1.1h-1.4zM959.6 121.5h1.4v1.1h-1.4zM962.8 122.8h1.4v1.1h-1.4zM963.6 122.4h1.4v1.1h-1.4zM964.4 123.5h1.4v1.1h-1.4zM966.0 126.1h1.4v1.1h-1.4zM966.8 125.9h1.4v1.1h-1.4zM967.6 126.6h1.4v1.1h-1.4z"/>
<path fill="#2288ee" d="M12.4 129.0h1.2v8.4h-1.2zM17.2 140.4h1.2v4.2h-1.2zM33.2 135.7h1.2v2.6h-1.2zM34.8 138.3h1.2v2.1h-1.2zM65.2 133.0h1.2v4.7h-1.2zM66.8 137.7h1.2v1.9h-1.2zM71.6 128.1h1.2v1.7h-1.2zM76.4 132.1h1.2v3.8h-1.2zM81.2 140.7h1.2v2.1h-1.2zM90.8 146.5h1.2v3.2h-1.2zM111.6 141.4h1.2v3.9h-1.2zM113.2 145.3h1.2v8.5h-1.2zM114.8 153.8h1.2v4.1h-1.2zM118.0 158.8h1.2v1.5h-1.2zM128.4 152.1h1.2v4.0h-1.2zM130.0 154.0h1.2v4.3h-1.2zM143.6 151.6h1.2v4.6h-1.2zM148.4 151.7h1.2v3.0h-1.2zM150.0 152.9h1.2v3.5h-1.2zM150.8 154.8h1.2v2.1h-1.2zM162.0 149.9h1.2v4.4h-1.2zM166.0 152.8h1.2v2.8h-1.2zM166.8 153.6h1.2v5.3h-1.2zM167.6 157.8h1.2v3.4h-1.2zM171.6 156.8h1.2v4.6h-1.2zM172.4 159.4h1.2v3.9h-1.2zM173.2 162.1h1.2v2.4h-1.2zM174.0 163.2h1.2v2.5h-1.2zM174.8 162.9h1.2v4.9h-1.2zM187.6 156.7h1.2v3.8h-1.2zM190.8 156.5h1.2v4.6h-1.2zM192.4 157.2h1.2v2.8h-1.2zM206.0 141.5h1.2v2.3h-1.2zM209.2 142.2h1.2v2.0h-1.2zM212.4 145.4h1.2v2.5h-1.2zM223.6 143.7h1.2v3.5h-1.2zM237.2 147.3h1.2v3.1h-1.2zM252.4 138.0h1.2v4.0h-1.2zM254.0 138.4h1.2v4.2h-1.2zM257.2 140.2h1.2v3.3h-1.2zM262.8 137.1h1.2v5.4h-1.2zM263.6 140.3h1.2v2.6h-1.2zM269.2 141.9h1.2v3.9h-1.2zM270.8 142.3h1.2v3.6h-1.2zM272.4 144.3h1.2v3.3h-1.2zM274.8 144.9h1.2v2.9h-1.2zM277.2 144.1h1.2v4.1h-1.2zM291.6 140.9h1.2v2.6h-1.2zM295.6 140.6h1.2v2.1h-1.2zM298.0 141.4h1.2v3.8h-1.2zM299.6 140.5h1.2v3.2h-1.2zM301.2 139.6h1.2v3.2h-1.2zM306.0 140.5h1.2v2.8h-1.2zM332.4 135.8h1.2v3.3h-1.2zM333.2 138.3h1.2v2.1h-1.2zM334.0 139.8h1.2v3.4h-1.2zM335.6 141.5h1.2v4.2h-1.2zM338.0 141.2h1.2v2.5h-1.2zM339.6 140.7h1.2v2.6h-1.2zM340.4 142.7h1.2v1.7h-1.2zM344.4 146.8h1.2v2.7h-1.2zM345.2 148.2h1.2v2.0h-1.2zM348.4 149.0h1.2v2.1h-1.2zM351.6 147.4h1.2v1.5h-1.2zM354.8 146.1h1.2v5.2h-1.2zM361.2 144.7h1.2v4.3h-1.2zM362.0 146.4h1.2v2.2h-1.2zM364.4 145.2h1.2v3.6h-1.2zM373.2 141.3h1.2v1.8h-1.2zM377.2 142.6h1.2v2.7h-1.2zM380.4 143.4h1.2v2.5h-1.2zM392.4 145.4h1.2v2.7h-1.2zM397.2 146.7h1.2v1.5h-1.2zM401.2 148.2h1.2v5.9h-1.2zM406.8 154.9h1.2v3.6h-1.2zM412.4 161.1h1.2v2.2h-1.2zM419.6 158.8h1.2v3.8h-1.2zM422.0 164.3h1.2v3.9h-1.2zM426.8 165.3h1.2v5.6h-1.2zM432.4 170.9h1.2v4.3h-1.2zM450.0 161.0h1.2v5.5h-1.2zM453.2 165.5h1.2v3.0h-1.2zM454.8 165.6h1.2v2.8h-1.2zM455.6 167.1h1.2v2.5h-1.2zM458.8 167.7h1.2v3.1h-1.2zM465.2 165.9h1.2v2.8h-1.2zM474.8 163.8h1.2v3.8h-1.2zM485.2 161.1h1.2v4.0h-1.2zM492.4 155.9h1.2v3.2h-1.2zM499.6 157.1h1.2v1.9h-1.2zM511.6 156.4h1.2v2.6h-1.2zM526.8 147.9h1.2v3.8h-1.2zM529.2 150.9h1.2v4.5h-1.2zM538.0 140.5h1.2v3.8h-1.2zM540.4 141.9h1.2v2.2h-1.2zM542.0 139.9h1.2v3.5h-1.2zM550.8 131.0h1.2v3.5h-1.2zM554.8 117.3h1.2v2.5h-1.2zM559.6 99.0h1.2v3.2h-1.2zM562.0 100.2h1.2v4.0h-1.2zM580.4 90.6h1.2v4.0h-1.2zM582.0 91.3h1.2v2.8h-1.2zM582.8 92.4h1.2v3.9h-1.2zM583.6 95.7h1.2v2.2h-1.2zM588.4 92.0h1.2v2.0h-1.2zM590.8 93.5h1.2v4.2h-1.2zM594.8 91.3h1.2v2.9h-1.2zM599.6 92.7h1.2v4.7h-1.2zM601.2 95.1h1.2v4.4h-1.2zM602.8 96.7h1.2v1.4h-1.2zM605.2 96.6h1.2v6.3h-1.2zM610.0 91.4h1.2v2.5h-1.2zM610.8 93.2h1.2v3.3h-1.2zM611.6 93.7h1.2v4.6h-1.2zM613.2 95.3h1.2v1.7h-1.2zM614.8 94.1h1.2v6.0h-1.2zM616.4 99.7h1.2v2.1h-1.2zM618.8 100.1h1.2v3.0h-1.2zM619.6 102.9h1.2v2.0h-1.2zM627.6 92.2h1.2v3.7h-1.2zM633.2 85.4h1.2v5.0h-1.2zM635.6 89.5h1.2v5.8h-1.2zM638.8 90.1h1.2v3.4h-1.2zM649.2 70.5h1.2v3.3h-1.2zM650.0 72.7h1.2v1.9h-1.2zM651.6 69.7h1.2v3.2h-1.2zM654.0 68.7h1.2v4.4h-1.2zM655.6 65.8h1.2v5.3h-1.2zM656.4 70.2h1.2v1.8h-1.2zM661.2 64.4h1.2v6.0h-1.2zM663.6 66.2h1.2v4.8h-1.2zM671.6 52.1h1.2v3.7h-1.2zM674.8 61.3h1.2v4.0h-1.2zM678.8 55.1h1.2v4.2h-1.2zM679.6 58.9h1.2v2.9h-1.2zM680.4 60.4h1.2v1.8h-1.2zM682.8 54.4h1.2v2.6h-1.2zM690.8 48.6h1.2v2.7h-1.2zM695.6 43.0h1.2v5.4h-1.2zM696.4 47.3h1.2v6.4h-1.2zM698.0 50.1h1.2v2.7h-1.2zM700.4 55.6h1.2v4.5h-1.2zM701.2 58.7h1.2v9.1h-1.2zM703.6 70.1h1.2v6.5h-1.2zM704.4 75.9h1.2v4.0h-1.2zM707.6 83.0h1.2v3.6h-1.2zM710.0 85.3h1.2v5.3h-1.2zM710.8 88.6h1.2v6.5h-1.2zM711.6 94.4h1.2v8.0h-1.2zM714.0 97.9h1.2v4.2h-1.2zM715.6 99.3h1.2v5.7h-1.2zM717.2 101.4h1.2v5.8h-1.2zM718.0 105.5h1.2v3.9h-1.2zM720.4 111.3h1.2v2.9h-1.2zM722.0 106.4h1.2v5.5h-1.2zM723.6 107.6h1.2v3.2h-1.2zM724.4 109.0h1.2v3.7h-1.2zM726.0 107.9h1.2v6.9h-1.2zM727.6 112.7h1.2v5.3h-1.2zM729.2 114.5h1.2v7.3h-1.2zM732.4 116.2h1.2v2.3h-1.2zM738.8 107.8h1.2v7.0h-1.2zM741.2 110.9h1.2v5.3h-1.2zM742.0 112.9h1.2v6.8h-1.2zM743.6 113.3h1.2v3.2h-1.2zM747.6 104.9h1.2v4.4h-1.2zM749.2 105.4h1.2v2.7h-1.2zM750.0 106.9h1.2v3.5h-1.2zM750.8 109.6h1.2v1.8h-1.2zM751.6 109.9h1.2v8.0h-1.2zM758.8 114.3h1.2v1.4h-1.2zM759.6 115.3h1.2v8.9h-1.2zM764.4 113.3h1.2v5.9h-1.2zM765.2 116.7h1.2v4.3h-1.2zM766.8 120.5h1.2v4.6h-1.2zM768.4 127.0h1.2v1.8h-1.2zM769.2 127.7h1.2v3.5h-1.2zM772.4 125.8h1.2v3.7h-1.2zM774.0 130.0h1.2v2.9h-1.2zM778.0 129.2h1.2v2.5h-1.2zM778.8 130.6h1.2v4.8h-1.2zM786.8 129.1h1.2v4.1h-1.2zM789.2 126.9h1.2v3.0h-1.2zM792.4 128.3h1.2v4.1h-1.2zM794.8 129.6h1.2v2.1h-1.2zM797.2 131.0h1.2v2.1h-1.2zM806.8 124.5h1.2v3.3h-1.2zM809.2 125.0h1.2v3.5h-1.2zM814.8 126.6h1.2v2.5h-1.2zM816.4 128.5h1.2v1.2h-1.2zM818.8 130.8h1.2v2.8h-1.2zM819.6 132.2h1.2v2.5h-1.2zM822.8 136.0h1.2v2.9h-1.2zM825.2 137.9h1.2v3.0h-1.2zM826.8 137.0h1.2v4.5h-1.2zM844.4 131.5h1.2v4.5h-1.2zM849.2 135.8h1.2v2.0h-1.2zM857.2 131.0h1.2v3.3h-1.2zM859.6 132.6h1.2v3.9h-1.2zM862.0 132.2h1.2v3.1h-1.2zM867.6 135.3h1.2v3.9h-1.2zM870.8 138.2h1.2v2.5h-1.2zM874.0 138.4h1.2v2.5h-1.2zM922.0 126.9h1.2v4.1h-1.2zM955.6 117.3h1.2v3.1h-1.2zM957.2 118.0h1.2v4.3h-1.2zM961.2 118.8h1.2v5.1h-1.2zM965.2 124.0h1.2v2.5h-1.2z"/>
<path fill="#f01818" d="M9.2 123.4h1.2v1.5h-1.2zM25.2 141.8h1.2v2.7h-1.2zM36.4 138.1h1.2v2.4h-1.2zM38.0 136.1h1.2v2.0h-1.2zM39.6 134.2h1.2v1.9h-1.2zM46.0 137.0h1.2v2.9h-1.2zM49.2 134.5h1.2v1.4h-1.2zM54.0 140.2h1.2v3.9h-1.2zM68.4 131.5h1.2v8.1h-1.2zM95.6 134.5h1.2v3.7h-1.2zM126.0 157.4h1.2v3.3h-1.2zM126.8 153.1h1.2v5.0h-1.2zM131.6 153.4h1.2v3.9h-1.2zM134.0 152.0h1.2v4.8h-1.2zM136.4 148.6h1.2v3.9h-1.2zM146.0 153.7h1.2v2.3h-1.2zM158.8 151.9h1.2v2.0h-1.2zM163.6 151.7h1.2v1.3h-1.2zM170.8 157.6h1.2v2.8h-1.2zM176.4 164.0h1.2v3.6h-1.2zM182.0 159.7h1.2v3.9h-1.2zM186.8 156.9h1.2v4.5h-1.2zM188.4 159.3h1.2v1.5h-1.2zM191.6 157.6h1.2v4.1h-1.2zM194.0 157.4h1.2v3.4h-1.2zM194.8 154.0h1.2v5.0h-1.2zM197.2 150.0h1.2v5.0h-1.2zM199.6 145.9h1.2v3.3h-1.2zM201.2 144.5h1.2v2.8h-1.2zM205.2 140.4h1.2v4.2h-1.2zM207.6 142.1h1.2v3.0h-1.2zM236.4 146.4h1.2v4.5h-1.2zM238.0 146.3h1.2v2.8h-1.2zM241.2 143.5h1.2v4.1h-1.2zM245.2 141.0h1.2v4.3h-1.2zM246.0 138.1h1.2v5.5h-1.2zM247.6 137.5h1.2v3.8h-1.2zM253.2 138.5h1.2v3.1h-1.2zM254.8 140.7h1.2v2.3h-1.2zM259.6 142.1h1.2v3.8h-1.2zM260.4 140.5h1.2v3.5h-1.2zM262.0 135.9h1.2v5.7h-1.2zM264.4 140.3h1.2v3.2h-1.2zM267.6 141.7h1.2v3.0h-1.2zM270.0 143.0h1.2v2.9h-1.2zM276.4 144.6h1.2v5.4h-1.2zM278.0 145.8h1.2v2.4h-1.2zM283.6 140.8h1.2v2.9h-1.2zM298.8 140.2h1.2v4.8h-1.2zM300.4 139.5h1.2v4.7h-1.2zM303.6 139.6h1.2v2.9h-1.2zM306.8 141.1h1.2v1.9h-1.2zM309.2 138.9h1.2v2.9h-1.2zM314.8 136.2h1.2v2.8h-1.2zM317.2 136.7h1.2v1.5h-1.2zM320.4 136.9h1.2v2.3h-1.2zM324.4 137.3h1.2v1.9h-1.2zM326.8 134.7h1.2v5.4h-1.2zM328.4 134.0h1.2v5.7h-1.2zM336.4 142.7h1.2v3.0h-1.2zM338.8 140.5h1.2v2.9h-1.2zM349.2 149.7h1.2v1.7h-1.2zM350.8 146.6h1.2v3.5h-1.2zM352.4 147.4h1.2v2.6h-1.2zM358.8 145.2h1.2v6.0h-1.2zM359.6 145.3h1.2v1.8h-1.2zM363.6 145.5h1.2v2.3h-1.2zM365.2 144.7h1.2v3.2h-1.2zM367.6 144.1h1.2v3.0h-1.2zM382.0 143.6h1.2v3.0h-1.2zM389.2 148.5h1.2v3.4h-1.2zM391.6 146.2h1.2v3.0h-1.2zM394.8 145.4h1.2v4.2h-1.2zM400.4 148.2h1.2v4.9h-1.2zM409.2 158.8h1.2v1.7h-1.2zM415.6 160.3h1.2v2.1h-1.2zM434.0 171.6h1.2v2.8h-1.2zM434.8 167.3h1.2v5.2h-1.2zM438.0 168.7h1.2v2.4h-1.2zM443.6 168.2h1.2v4.3h-1.2zM445.2 167.2h1.2v2.2h-1.2zM448.4 160.1h1.2v2.6h-1.2zM454.0 165.2h1.2v3.7h-1.2zM459.6 167.5h1.2v3.3h-1.2zM461.2 166.5h1.2v3.2h-1.2zM462.0 166.0h1.2v2.7h-1.2zM464.4 165.5h1.2v2.2h-1.2zM469.2 169.4h1.2v3.5h-1.2zM470.0 167.5h1.2v3.2h-1.2zM471.6 166.5h1.2v3.0h-1.2zM482.8 162.6h1.2v2.5h-1.2zM484.4 161.6h1.2v2.1h-1.2zM486.0 160.3h1.2v4.6h-1.2zM487.6 159.7h1.2v2.3h-1.2zM490.0 156.1h1.2v3.0h-1.2zM491.6 156.1h1.2v2.5h-1.2zM500.4 157.3h1.2v2.6h-1.2zM505.2 154.2h1.2v4.8h-1.2zM506.8 154.5h1.2v2.1h-1.2zM518.0 154.4h1.2v2.5h-1.2zM521.2 150.6h1.2v3.9h-1.2zM522.8 148.1h1.2v4.9h-1.2zM524.4 148.4h1.2v3.1h-1.2zM533.2 144.8h1.2v3.7h-1.2zM536.4 140.8h1.2v4.0h-1.2zM541.2 140.4h1.2v3.4h-1.2zM547.6 136.4h1.2v5.1h-1.2zM550.0 131.5h1.2v5.0h-1.2zM551.6 130.5h1.2v3.0h-1.2zM552.4 126.2h1.2v6.2h-1.2zM554.0 116.9h1.2v9.2h-1.2zM555.6 114.1h1.2v5.5h-1.2zM556.4 108.5h1.2v7.0h-1.2zM558.0 97.9h1.2v4.4h-1.2zM565.2 101.5h1.2v5.3h-1.2zM566.8 97.8h1.2v5.0h-1.2zM570.0 96.6h1.2v2.6h-1.2zM578.0 91.8h1.2v2.0h-1.2zM578.8 90.6h1.2v2.6h-1.2zM581.2 91.5h1.2v2.3h-1.2zM584.4 93.7h1.2v4.2h-1.2zM586.0 94.0h1.2v2.7h-1.2zM586.8 91.8h1.2v3.7h-1.2zM591.6 95.6h1.2v2.7h-1.2zM592.4 92.9h1.2v3.0h-1.2zM598.0 93.6h1.2v2.8h-1.2zM598.8 92.5h1.2v2.0h-1.2zM604.4 97.8h1.2v2.9h-1.2zM606.0 95.0h1.2v7.4h-1.2zM607.6 95.4h1.2v3.4h-1.2zM608.4 94.0h1.2v2.8h-1.2zM609.2 90.6h1.2v3.6h-1.2zM614.0 94.1h1.2v4.1h-1.2zM618.0 99.7h1.2v6.4h-1.2zM620.4 101.8h1.2v2.5h-1.2zM621.2 99.9h1.2v3.8h-1.2zM622.0 98.5h1.2v3.9h-1.2zM624.4 96.5h1.2v4.6h-1.2zM625.2 93.0h1.2v4.5h-1.2zM628.4 92.3h1.2v3.4h-1.2zM629.2 89.0h1.2v5.9h-1.2zM632.4 85.0h1.2v7.6h-1.2zM636.4 93.1h1.2v2.8h-1.2zM638.0 89.9h1.2v3.9h-1.2zM641.2 90.3h1.2v1.6h-1.2zM643.6 86.4h1.2v5.6h-1.2zM645.2 77.5h1.2v9.4h-1.2zM647.6 72.6h1.2v1.7h-1.2zM648.4 71.3h1.2v3.1h-1.2zM650.8 69.2h1.2v5.3h-1.2zM653.2 69.6h1.2v3.1h-1.2zM657.2 67.7h1.2v4.3h-1.2zM658.0 67.4h1.2v2.4h-1.2zM659.6 63.3h1.2v5.1h-1.2zM662.0 64.9h1.2v4.2h-1.2zM665.2 66.2h1.2v5.7h-1.2zM666.8 65.0h1.2v3.5h-1.2zM667.6 59.0h1.2v7.3h-1.2zM670.0 54.0h1.2v5.7h-1.2zM670.8 52.5h1.2v2.8h-1.2zM676.4 57.1h1.2v4.8h-1.2zM677.2 56.1h1.2v2.5h-1.2zM682.0 54.8h1.2v8.4h-1.2zM686.8 46.2h1.2v5.1h-1.2zM691.6 47.7h1.2v3.5h-1.2zM694.8 44.0h1.2v4.8h-1.2zM708.4 84.9h1.2v1.8h-1.2zM713.2 98.1h1.2v4.1h-1.2zM714.8 100.2h1.2v3.0h-1.2zM716.4 101.6h1.2v3.8h-1.2zM718.8 107.3h1.2v2.3h-1.2zM721.2 108.0h1.2v6.8h-1.2zM722.8 107.6h1.2v4.6h-1.2zM725.2 108.4h1.2v5.1h-1.2zM726.8 112.5h1.2v1.9h-1.2zM728.4 114.7h1.2v4.3h-1.2zM730.8 120.5h1.2v1.3h-1.2zM731.6 115.6h1.2v5.4h-1.2zM734.0 113.1h1.2v4.0h-1.2zM735.6 108.1h1.2v7.0h-1.2zM737.2 111.7h1.2v5.7h-1.2zM738.0 107.7h1.2v4.1h-1.2zM739.6 112.1h1.2v2.9h-1.2zM742.8 113.3h1.2v4.6h-1.2zM744.4 114.8h1.2v1.8h-1.2zM746.8 104.8h1.2v7.8h-1.2zM748.4 106.8h1.2v3.0h-1.2zM753.2 111.8h1.2v6.4h-1.2zM755.6 117.1h1.2v4.1h-1.2zM760.4 119.7h1.2v3.1h-1.2zM762.0 118.2h1.2v2.3h-1.2zM770.0 127.8h1.2v4.2h-1.2zM781.2 132.2h1.2v2.5h-1.2zM782.0 130.1h1.2v3.0h-1.2zM783.6 127.0h1.2v3.8h-1.2zM788.4 126.1h1.2v4.1h-1.2zM793.2 127.7h1.2v4.6h-1.2zM803.6 125.6h1.2v5.6h-1.2zM813.2 128.0h1.2v2.8h-1.2zM814.0 126.4h1.2v2.7h-1.2zM826.0 137.3h1.2v2.8h-1.2zM828.4 139.4h1.2v2.5h-1.2zM833.2 135.1h1.2v4.5h-1.2zM837.2 130.3h1.2v3.7h-1.2zM843.6 131.4h1.2v2.9h-1.2zM848.4 135.0h1.2v3.8h-1.2zM850.8 134.2h1.2v4.2h-1.2zM855.6 132.0h1.2v3.2h-1.2zM863.6 134.7h1.2v3.5h-1.2zM864.4 133.8h1.2v2.2h-1.2zM894.8 128.2h1.2v3.7h-1.2zM898.8 125.4h1.2v2.8h-1.2zM930.8 129.7h1.2v3.2h-1.2zM945.2 125.6h1.2v2.8h-1.2zM947.6 122.3h1.2v2.2h-1.2zM953.2 118.4h1.2v3.4h-1.2zM960.4 119.6h1.2v4.2h-1.2z"/>
</g>
<g clip-path="url(#c1)">
<rect x="420" y="157" width="1.3" height="22" fill="#2288ee"/>
<rect x="502" y="154" width="1.3" height="23" fill="#2288ee"/>
<rect x="408" y="150" width="1.3" height="15" fill="#2288ee"/>
<rect x="411" y="152" width="1.3" height="14" fill="#2288ee"/>
<rect x="91" y="147" width="1.3" height="7" fill="#2288ee"/>
<rect x="27" y="135" width="1.3" height="8" fill="#f01818"/>
<rect x="712" y="94" width="1.3" height="16" fill="#2288ee"/>
<rect x="730" y="110" width="1.3" height="18" fill="#2288ee"/>
<rect x="759" y="114" width="1.3" height="11" fill="#2288ee"/>
<rect x="76" y="131" width="1.3" height="8" fill="#2288ee"/>
</g>
<g clip-path="url(#c2)">
<path fill="#d8c868" d="M21.4 386.3h2.0v1.1h-2.0zM27.8 380.1h2.0v1.1h-2.0zM32.6 356.3h2.0v1.1h-2.0zM40.6 363.5h2.0v1.1h-2.0zM43.8 365.7h2.0v1.1h-2.0zM50.2 373.4h2.0v1.1h-2.0zM56.6 364.1h2.0v1.1h-2.0zM67.8 366.3h2.0v1.1h-2.0zM71.0 377.6h2.0v1.1h-2.0zM80.6 379.4h2.0v1.1h-2.0zM96.6 384.5h2.0v1.1h-2.0zM98.2 383.8h2.0v1.1h-2.0zM109.4 379.1h2.0v1.1h-2.0zM126.2 369.4h1.4v1.1h-1.4zM127.8 368.8h1.4v1.1h-1.4zM128.6 364.6h1.4v1.1h-1.4zM129.4 365.2h1.4v1.1h-1.4zM130.2 365.3h1.4v1.1h-1.4zM131.0 363.9h1.4v1.1h-1.4zM131.8 356.7h1.4v1.1h-1.4zM136.6 347.5h1.4v1.1h-1.4zM137.4 347.8h1.4v1.1h-1.4zM139.8 351.4h1.4v1.1h-1.4zM140.6 352.1h1.4v1.1h-1.4zM142.2 355.9h1.4v1.1h-1.4zM143.8 359.6h1.4v1.1h-1.4zM144.6 359.7h1.4v1.1h-1.4zM149.4 345.5h1.4v1.1h-1.4zM150.2 338.8h1.4v1.1h-1.4zM151.0 339.0h1.4v1.1h-1.4zM153.4 333.5h1.4v1.1h-1.4zM158.2 335.8h1.4v1.1h-1.4zM159.8 333.9h1.4v1.1h-1.4zM160.6 335.0h1.4v1.1h-1.4zM162.2 332.9h1.4v1.1h-1.4zM163.0 332.3h1.4v1.1h-1.4zM163.8 333.7h1.4v1.1h-1.4zM166.2 334.2h1.4v1.1h-1.4zM168.6 341.0h1.4v1.1h-1.4zM169.4 341.8h1.4v1.1h-1.4zM176.6 356.0h1.4v1.1h-1.4zM177.4 356.2h1.4v1.1h-1.4zM178.2 354.2h1.4v1.1h-1.4zM179.8 355.9h1.4v1.1h-1.4zM180.6 355.0h1.4v1.1h-1.4zM181.4 355.3h1.4v1.1h-1.4zM182.2 355.5h1.4v1.1h-1.4zM183.8 362.3h1.4v1.1h-1.4zM185.4 355.3h1.4v1.1h-1.4zM186.2 354.4h1.4v1.1h-1.4zM190.2 344.7h1.4v1.1h-1.4zM191.8 340.6h1.4v1.1h-1.4zM192.6 340.1h1.4v1.1h-1.4zM193.4 340.6h1.4v1.1h-1.4zM195.8 338.3h1.4v1.1h-1.4zM198.2 333.8h1.4v1.1h-1.4zM201.4 321.2h1.4v1.1h-1.4zM205.4 321.9h1.4v1.1h-1.4zM206.2 323.0h1.4v1.1h-1.4zM209.4 328.8h1.4v1.1h-1.4zM210.2 325.1h1.4v1.1h-1.4zM211.0 325.4h1.4v1.1h-1.4zM211.8 324.8h1.4v1.1h-1.4zM214.2 324.2h1.4v1.1h-1.4zM216.6 329.6h1.4v1.1h-1.4zM217.4 331.2h1.4v1.1h-1.4zM219.0 329.1h1.4v1.1h-1.4zM221.4 331.8h1.4v1.1h-1.4zM224.6 339.2h1.4v1.1h-1.4zM226.2 348.4h1.4v1.1h-1.4zM229.4 349.1h1.4v1.1h-1.4zM230.2 348.9h1.4v1.1h-1.4zM232.6 348.3h1.4v1.1h-1.4zM233.4 348.3h1.4v1.1h-1.4zM234.2 349.0h1.4v1.1h-1.4zM237.4 350.0h1.4v1.1h-1.4zM238.2 349.0h1.4v1.1h-1.4zM239.8 345.2h1.4v1.1h-1.4zM244.6 334.4h1.4v1.1h-1.4zM247.0 330.1h1.4v1.1h-1.4zM248.6 332.6h1.4v1.1h-1.4zM249.4 331.4h1.4v1.1h-1.4zM250.2 330.1h1.4v1.1h-1.4zM251.0 330.1h1.4v1.1h-1.4zM252.6 329.3h1.4v1.1h-1.4zM254.2 330.1h1.4v1.1h-1.4zM255.0 330.1h1.4v1.1h-1.4zM255.8 331.0h1.4v1.1h-1.4zM256.6 331.6h1.4v1.1h-1.4zM257.4 331.5h1.4v1.1h-1.4zM258.2 332.0h1.4v1.1h-1.4zM259.0 331.4h1.4v1.1h-1.4zM260.6 330.9h1.4v1.1h-1.4zM261.4 330.6h1.4v1.1h-1.4zM264.6 331.1h1.4v1.1h-1.4zM266.2 333.5h1.4v1.1h-1.4zM267.0 333.8h1.4v1.1h-1.4zM267.8 335.5h1.4v1.1h-1.4zM272.6 345.0h1.4v1.1h-1.4zM273.4 345.8h1.4v1.1h-1.4zM275.8 344.4h1.4v1.1h-1.4zM277.4 342.5h1.4v1.1h-1.4zM278.2 338.3h1.4v1.1h-1.4zM279.0 339.0h1.4v1.1h-1.4zM281.4 331.8h1.4v1.1h-1.4zM283.0 329.4h1.4v1.1h-1.4zM283.8 328.8h1.4v1.1h-1.4zM284.6 329.0h1.4v1.1h-1.4zM286.2 326.0h1.4v1.1h-1.4zM287.0 325.0h1.4v1.1h-1.4zM289.4 327.5h1.4v1.1h-1.4zM291.0 329.3h1.4v1.1h-1.4zM293.4 331.2h1.4v1.1h-1.4zM294.2 331.7h1.4v1.1h-1.4zM296.6 330.9h1.4v1.1h-1.4zM299.0 332.9h1.4v1.1h-1.4zM299.8 332.6h1.4v1.1h-1.4zM302.2 333.1h1.4v1.1h-1.4zM303.0 333.8h1.4v1.1h-1.4zM303.8 334.0h1.4v1.1h-1.4zM304.6 333.6h1.4v1.1h-1.4zM306.2 333.4h1.4v1.1h-1.4zM307.0 332.6h1.4v1.1h-1.4zM307.8 331.4h1.4v1.1h-1.4zM311.0 332.3h1.4v1.1h-1.4zM315.8 331.6h1.4v1.1h-1.4zM318.2 330.1h1.4v1.1h-1.4zM319.0 330.8h1.4v1.1h-1.4zM320.6 328.5h1.4v1.1h-1.4zM321.4 329.2h1.4v1.1h-1.4zM323.0 329.7h1.4v1.1h-1.4zM324.6 328.2h1.4v1.1h-1.4zM326.2 326.9h1.4v1.1h-1.4zM329.4 320.8h1.4v1.1h-1.4zM330.2 321.0h1.4v1.1h-1.4zM331.8 322.1h1.4v1.1h-1.4zM334.2 327.4h1.4v1.1h-1.4zM336.6 325.1h1.4v1.1h-1.4zM337.4 324.5h1.4v1.1h-1.4zM339.0 324.7h1.4v1.1h-1.4zM340.6 325.9h1.4v1.1h-1.4zM342.2 328.6h1.4v1.1h-1.4zM343.0 328.2h1.4v1.1h-1.4zM345.4 338.0h1.4v1.1h-1.4zM347.8 341.8h1.4v1.1h-1.4zM351.8 336.7h1.4v1.1h-1.4zM353.4 339.4h1.4v1.1h-1.4zM354.2 339.2h1.4v1.1h-1.4zM355.0 337.9h1.4v1.1h-1.4zM357.4 337.5h1.4v1.1h-1.4zM358.2 336.4h1.4v1.1h-1.4zM360.6 334.9h1.4v1.1h-1.4zM363.0 335.6h1.4v1.1h-1.4zM367.8 334.1h1.4v1.1h-1.4zM369.4 330.4h1.4v1.1h-1.4zM371.8 330.0h1.4v1.1h-1.4zM372.6 330.0h1.4v1.1h-1.4zM373.4 330.3h1.4v1.1h-1.4zM374.2 330.2h1.4v1.1h-1.4zM375.8 332.1h1.4v1.1h-1.4zM376.6 333.0h1.4v1.1h-1.4zM382.2 344.2h1.4v1.1h-1.4zM383.8 346.2h1.4v1.1h-1.4zM385.4 348.2h1.4v1.1h-1.4zM386.2 349.0h1.4v1.1h-1.4zM387.8 349.2h1.4v1.1h-1.4zM388.6 349.6h1.4v1.1h-1.4zM389.4 342.9h1.4v1.1h-1.4zM395.0 338.2h1.4v1.1h-1.4zM397.4 336.8h1.4v1.1h-1.4zM398.2 340.1h1.4v1.1h-1.4zM401.4 346.4h1.4v1.1h-1.4zM402.2 346.6h1.4v1.1h-1.4zM403.8 350.5h1.4v1.1h-1.4zM404.6 349.5h1.4v1.1h-1.4zM407.8 318.4h1.4v1.1h-1.4zM413.4 326.9h1.4v1.1h-1.4zM414.2 327.8h1.4v1.1h-1.4zM415.0 321.2h1.4v1.1h-1.4zM418.2 303.8h1.4v1.1h-1.4zM419.0 304.5h1.4v1.1h-1.4zM423.8 312.0h1.4v1.1h-1.4zM425.4 316.8h1.4v1.1h-1.4zM426.2 317.8h1.4v1.1h-1.4zM431.0 331.1h1.4v1.1h-1.4zM434.2 326.1h1.4v1.1h-1.4zM436.6 323.7h1.4v1.1h-1.4zM438.2 324.9h1.4v1.1h-1.4zM441.4 333.8h1.4v1.1h-1.4zM446.2 327.4h1.4v1.1h-1.4zM448.6 320.2h1.4v1.1h-1.4zM449.4 320.2h1.4v1.1h-1.4zM450.2 321.2h1.4v1.1h-1.4zM451.8 324.4h1.4v1.1h-1.4zM454.2 330.3h1.4v1.1h-1.4zM455.0 329.5h1.4v1.1h-1.4zM456.6 326.7h1.4v1.1h-1.4zM457.4 326.4h1.4v1.1h-1.4zM458.2 322.3h1.4v1.1h-1.4zM460.6 322.0h1.4v1.1h-1.4zM461.4 321.9h1.4v1.1h-1.4zM462.2 321.7h1.4v1.1h-1.4zM463.0 322.3h1.4v1.1h-1.4zM463.8 324.3h1.4v1.1h-1.4zM466.2 320.8h1.4v1.1h-1.4zM467.0 320.7h1.4v1.1h-1.4zM467.8 319.9h1.4v1.1h-1.4zM470.2 314.9h1.4v1.1h-1.4zM471.0 315.5h1.4v1.1h-1.4zM475.0 310.4h1.4v1.1h-1.4zM475.8 311.4h1.4v1.1h-1.4zM479.0 304.3h1.4v1.1h-1.4zM480.6 299.3h1.4v1.1h-1.4zM482.2 300.3h1.4v1.1h-1.4zM483.0 299.3h1.4v1.1h-1.4zM484.6 297.6h1.4v1.1h-1.4zM485.4 296.9h1.4v1.1h-1.4zM486.2 294.4h1.4v1.1h-1.4zM493.4 271.9h1.4v1.1h-1.4zM494.2 272.4h1.4v1.1h-1.4zM495.0 277.3h1.4v1.1h-1.4zM496.6 277.7h1.4v1.1h-1.4zM497.4 281.4h1.4v1.1h-1.4zM498.2 281.7h1.4v1.1h-1.4zM499.0 283.5h1.4v1.1h-1.4zM500.6 287.3h1.4v1.1h-1.4zM503.0 289.8h1.4v1.1h-1.4zM503.8 290.2h1.4v1.1h-1.4zM504.6 289.7h1.4v1.1h-1.4zM505.4 290.6h1.4v1.1h-1.4zM507.0 289.0h1.4v1.1h-1.4zM508.6 287.6h1.4v1.1h-1.4zM509.4 286.5h1.4v1.1h-1.4zM511.8 283.2h1.4v1.1h-1.4zM513.4 283.5h1.4v1.1h-1.4zM515.8 280.1h1.4v1.1h-1.4zM516.6 279.2h1.4v1.1h-1.4zM517.4 278.6h1.4v1.1h-1.4zM519.0 277.0h1.4v1.1h-1.4zM520.6 275.1h1.4v1.1h-1.4zM521.4 275.5h1.4v1.1h-1.4zM522.2 275.5h1.4v1.1h-1.4zM523.8 277.1h1.4v1.1h-1.4zM532.6 282.2h1.4v1.1h-1.4zM535.0 274.0h1.4v1.1h-1.4zM538.2 276.6h1.4v1.1h-1.4zM539.8 278.5h1.4v1.1h-1.4zM542.2 282.8h1.4v1.1h-1.4zM543.0 283.1h1.4v1.1h-1.4zM543.8 283.8h1.4v1.1h-1.4zM547.8 279.9h1.4v1.1h-1.4zM550.2 275.3h1.4v1.1h-1.4zM551.8 272.2h1.4v1.1h-1.4zM554.2 266.6h1.4v1.1h-1.4zM555.8 260.9h1.4v1.1h-1.4zM556.6 259.1h1.4v1.1h-1.4zM557.4 259.2h1.4v1.1h-1.4zM559.0 256.6h1.4v1.1h-1.4zM559.8 256.9h1.4v1.1h-1.4zM561.4 255.4h1.4v1.1h-1.4zM563.8 256.6h1.4v1.1h-1.4zM564.6 256.2h1.4v1.1h-1.4zM567.0 249.9h1.4v1.1h-1.4zM567.8 249.6h1.4v1.1h-1.4zM569.4 245.8h1.4v1.1h-1.4zM570.2 246.1h1.4v1.1h-1.4zM571.8 242.3h1.4v1.1h-1.4zM573.4 244.1h1.4v1.1h-1.4zM575.0 244.4h1.4v1.1h-1.4zM575.8 243.8h1.4v1.1h-1.4zM577.4 246.2h1.4v1.1h-1.4zM579.8 247.3h1.4v1.1h-1.4zM582.2 251.9h1.4v1.1h-1.4zM583.0 252.6h1.4v1.1h-1.4zM585.4 254.8h1.4v1.1h-1.4zM586.2 254.6h1.4v1.1h-1.4zM587.0 254.3h1.4v1.1h-1.4zM587.8 250.7h1.4v1.1h-1.4zM591.0 250.9h1.4v1.1h-1.4zM591.8 251.6h1.4v1.1h-1.4zM592.6 250.0h1.4v1.1h-1.4zM594.2 251.4h1.4v1.1h-1.4zM596.6 251.6h1.4v1.1h-1.4zM598.2 248.0h1.4v1.1h-1.4zM599.0 247.6h1.4v1.1h-1.4zM600.6 244.2h1.4v1.1h-1.4zM604.6 247.8h1.4v1.1h-1.4zM605.4 247.7h1.4v1.1h-1.4zM607.8 243.1h1.4v1.1h-1.4zM611.0 246.4h1.4v1.1h-1.4zM613.4 254.0h1.4v1.1h-1.4zM615.0 257.4h1.4v1.1h-1.4zM617.4 262.9h1.4v1.1h-1.4zM622.2 240.5h1.4v1.1h-1.4zM627.0 217.1h1.4v1.1h-1.4zM627.8 217.1h1.4v1.1h-1.4zM628.6 218.2h1.4v1.1h-1.4zM639.8 250.1h1.4v1.1h-1.4zM641.4 246.4h1.4v1.1h-1.4zM643.8 253.3h1.4v1.1h-1.4zM647.8 251.4h1.4v1.1h-1.4zM649.4 263.0h1.4v1.1h-1.4zM650.2 259.2h1.4v1.1h-1.4zM651.8 260.2h1.4v1.1h-1.4zM654.2 264.6h1.4v1.1h-1.4zM656.6 281.0h1.4v1.1h-1.4zM660.6 261.7h1.4v1.1h-1.4zM661.4 260.9h1.4v1.1h-1.4zM663.0 258.2h1.4v1.1h-1.4zM666.2 256.5h1.4v1.1h-1.4zM667.0 252.3h1.4v1.1h-1.4zM668.6 250.1h1.4v1.1h-1.4zM670.2 243.2h1.4v1.1h-1.4zM674.2 253.3h1.4v1.1h-1.4zM678.2 268.9h1.4v1.1h-1.4zM679.0 270.1h1.4v1.1h-1.4zM679.8 270.1h1.4v1.1h-1.4zM680.6 276.2h1.4v1.1h-1.4zM681.4 276.6h1.4v1.1h-1.4zM683.8 270.5h1.4v1.1h-1.4zM685.4 267.1h1.4v1.1h-1.4zM687.8 276.1h1.4v1.1h-1.4zM688.6 276.6h1.4v1.1h-1.4zM689.4 277.2h1.4v1.1h-1.4zM690.2 281.2h1.4v1.1h-1.4zM695.0 282.0h1.4v1.1h-1.4zM695.8 287.7h1.4v1.1h-1.4zM697.4 286.0h1.4v1.1h-1.4zM698.2 285.9h1.4v1.1h-1.4zM699.8 290.3h1.4v1.1h-1.4zM701.4 303.3h1.4v1.1h-1.4zM703.0 296.3h1.4v1.1h-1.4zM708.6 297.8h1.4v1.1h-1.4zM709.4 294.7h1.4v1.1h-1.4zM714.2 281.4h1.4v1.1h-1.4zM715.8 276.2h1.4v1.1h-1.4zM717.4 271.7h1.4v1.1h-1.4zM719.8 278.3h1.4v1.1h-1.4zM721.4 285.6h1.4v1.1h-1.4zM722.2 282.4h1.4v1.1h-1.4zM725.4 267.7h1.4v1.1h-1.4zM731.8 284.6h1.4v1.1h-1.4zM734.2 281.5h1.4v1.1h-1.4zM735.8 280.5h1.4v1.1h-1.4zM736.6 280.5h1.4v1.1h-1.4zM737.4 285.8h1.4v1.1h-1.4zM740.6 292.4h1.4v1.1h-1.4zM744.6 314.7h1.4v1.1h-1.4zM751.0 308.4h1.4v1.1h-1.4zM756.6 317.8h1.4v1.1h-1.4zM757.4 315.5h1.4v1.1h-1.4zM759.0 324.5h1.4v1.1h-1.4zM763.8 319.8h2.0v1.1h-2.0zM768.6 326.2h2.0v1.1h-2.0zM776.6 326.2h2.0v1.1h-2.0zM781.4 338.1h2.0v1.1h-2.0zM786.2 342.5h2.0v1.1h-2.0zM792.6 337.2h2.0v1.1h-2.0zM794.2 339.8h2.0v1.1h-2.0zM799.0 345.2h2.0v1.1h-2.0zM800.6 348.2h2.0v1.1h-2.0zM802.2 348.9h2.0v1.1h-2.0zM805.4 351.7h2.0v1.1h-2.0zM808.6 346.5h2.0v1.1h-2.0zM810.2 345.4h2.0v1.1h-2.0zM819.8 345.4h2.0v1.1h-2.0zM821.4 346.4h2.0v1.1h-2.0zM826.2 350.3h2.0v1.1h-2.0zM829.4 342.6h2.0v1.1h-2.0zM840.6 358.2h2.0v1.1h-2.0zM848.6 356.6h2.0v1.1h-2.0zM851.8 353.3h2.0v1.1h-2.0zM855.0 352.4h2.0v1.1h-2.0zM859.8 339.8h2.0v1.1h-2.0zM861.4 339.5h2.0v1.1h-2.0zM864.6 345.9h2.0v1.1h-2.0zM871.0 355.5h2.0v1.1h-2.0zM872.6 354.5h2.0v1.1h-2.0zM874.2 354.4h2.0v1.1h-2.0zM883.8 340.1h2.0v1.1h-2.0zM885.4 341.1h2.0v1.1h-2.0zM887.0 343.7h2.0v1.1h-2.0zM890.2 344.0h2.0v1.1h-2.0zM896.6 331.4h2.0v1.1h-2.0zM899.8 332.3h2.0v1.1h-2.0zM903.0 334.1h2.0v1.1h-2.0zM906.2 335.9h2.0v1.1h-2.0zM917.4 333.3h2.0v1.1h-2.0zM919.0 334.9h2.0v1.1h-2.0zM922.2 337.3h2.0v1.1h-2.0zM925.4 338.3h2.0v1.1h-2.0zM928.6 340.6h2.0v1.1h-2.0zM938.2 334.8h2.0v1.1h-2.0zM939.8 336.3h2.0v1.1h-2.0zM941.4 337.1h2.0v1.1h-2.0zM943.0 337.9h2.0v1.1h-2.0zM946.2 334.3h2.0v1.1h-2.0zM949.4 331.8h2.0v1.1h-2.0zM952.6 330.1h2.0v1.1h-2.0zM954.2 330.1h2.0v1.1h-2.0z"/>
<path fill="#2288ee" d="M10.2 330.1h1.2v2.7h-1.2zM11.8 332.8h1.2v9.1h-1.2zM13.4 341.8h1.2v9.7h-1.2zM15.0 351.6h1.2v6.6h-1.2zM16.6 358.2h1.2v25.7h-1.2zM19.8 380.1h1.2v8.0h-1.2zM34.2 356.8h1.2v3.9h-1.2zM35.8 360.8h1.2v2.0h-1.2zM37.4 362.7h1.2v4.3h-1.2zM42.2 364.0h1.2v1.9h-1.2zM45.4 366.2h1.2v3.2h-1.2zM47.0 369.4h1.2v1.6h-1.2zM48.6 371.1h1.2v3.7h-1.2zM58.2 364.6h1.2v2.6h-1.2zM64.6 357.3h1.2v2.7h-1.2zM91.8 379.8h1.2v2.0h-1.2zM93.4 381.7h1.2v3.0h-1.2zM106.2 382.0h1.2v1.8h-1.2zM111.0 379.6h1.2v1.8h-1.2zM120.6 372.4h1.2v4.0h-1.2zM123.8 376.6h1.2v2.4h-1.2zM135.8 346.9h1.2v2.5h-1.2zM139.0 348.3h1.2v2.7h-1.2zM143.0 355.8h1.2v5.1h-1.2zM155.0 332.3h1.2v3.2h-1.2zM155.8 334.9h1.2v3.1h-1.2zM157.4 335.2h1.2v3.0h-1.2zM165.4 332.2h1.2v2.9h-1.2zM167.0 334.4h1.2v5.0h-1.2zM167.8 338.4h1.2v4.6h-1.2zM170.2 340.9h1.2v3.8h-1.2zM171.8 342.2h1.2v5.9h-1.2zM172.6 346.3h1.2v3.6h-1.2zM173.4 349.2h1.2v2.5h-1.2zM174.2 351.2h1.2v3.8h-1.2zM175.0 353.2h1.2v4.3h-1.2zM179.0 354.1h1.2v3.9h-1.2zM183.0 355.2h1.2v5.5h-1.2zM197.4 335.5h1.2v2.4h-1.2zM203.8 316.9h1.2v3.0h-1.2zM204.6 319.0h1.2v3.1h-1.2zM207.0 322.7h1.2v5.3h-1.2zM208.6 326.8h1.2v3.3h-1.2zM213.4 319.6h1.2v5.6h-1.2zM215.0 324.3h1.2v4.9h-1.2zM215.8 326.9h1.2v3.8h-1.2zM223.0 332.5h1.2v4.0h-1.2zM223.8 335.4h1.2v3.9h-1.2zM225.4 338.8h1.2v8.7h-1.2zM228.6 345.5h1.2v4.9h-1.2zM231.0 349.3h1.2v3.1h-1.2zM236.6 346.3h1.2v3.4h-1.2zM243.0 337.8h1.2v2.9h-1.2zM247.8 328.3h1.2v5.4h-1.2zM259.8 331.4h1.2v2.7h-1.2zM269.4 337.2h1.2v4.2h-1.2zM270.2 339.0h1.2v3.6h-1.2zM271.8 342.6h1.2v3.3h-1.2zM274.2 346.1h1.2v4.0h-1.2zM287.8 324.7h1.2v2.4h-1.2zM288.6 326.5h1.2v3.2h-1.2zM290.2 327.6h1.2v2.3h-1.2zM291.8 329.7h1.2v1.6h-1.2zM295.8 328.9h1.2v4.3h-1.2zM298.2 331.3h1.2v4.4h-1.2zM308.6 331.8h1.2v2.9h-1.2zM310.2 330.1h1.2v3.1h-1.2zM311.8 331.4h1.2v4.2h-1.2zM332.6 322.1h1.2v4.6h-1.2zM338.2 324.4h1.2v3.4h-1.2zM339.8 324.9h1.2v2.1h-1.2zM343.8 328.4h1.2v5.0h-1.2zM344.6 332.0h1.2v7.4h-1.2zM346.2 336.5h1.2v7.2h-1.2zM348.6 341.7h1.2v3.5h-1.2zM349.4 343.1h1.2v5.1h-1.2zM352.6 336.6h1.2v3.9h-1.2zM355.8 338.0h1.2v2.2h-1.2zM362.2 333.6h1.2v3.4h-1.2zM364.6 335.9h1.2v3.0h-1.2zM365.4 338.1h1.2v1.9h-1.2zM371.0 329.2h1.2v3.5h-1.2zM375.0 329.6h1.2v3.0h-1.2zM378.2 332.9h1.2v3.3h-1.2zM379.8 336.5h1.2v2.2h-1.2zM383.0 343.9h1.2v3.4h-1.2zM391.8 339.6h1.2v2.2h-1.2zM394.2 336.1h1.2v3.2h-1.2zM396.6 335.8h1.2v3.7h-1.2zM399.8 340.6h1.2v4.0h-1.2zM400.6 343.2h1.2v5.6h-1.2zM403.0 347.0h1.2v3.0h-1.2zM410.2 297.7h1.2v12.7h-1.2zM411.0 309.4h1.2v12.5h-1.2zM411.8 320.7h1.2v3.9h-1.2zM412.6 323.8h1.2v5.2h-1.2zM421.4 300.7h1.2v5.5h-1.2zM422.2 304.0h1.2v5.2h-1.2zM423.0 307.3h1.2v5.3h-1.2zM427.8 319.7h1.2v3.9h-1.2zM429.4 324.5h1.2v3.0h-1.2zM430.2 326.4h1.2v5.7h-1.2zM431.8 331.5h1.2v3.9h-1.2zM437.4 323.8h1.2v2.8h-1.2zM439.8 322.7h1.2v5.2h-1.2zM442.2 332.9h1.2v4.6h-1.2zM451.0 321.2h1.2v4.2h-1.2zM452.6 324.0h1.2v6.4h-1.2zM459.0 322.1h1.2v2.9h-1.2zM473.4 310.6h1.2v3.9h-1.2zM492.6 265.8h1.2v2.8h-1.2zM495.8 276.3h1.2v3.1h-1.2zM499.8 283.8h1.2v3.1h-1.2zM501.4 287.6h1.2v2.1h-1.2zM502.2 289.4h1.2v2.2h-1.2zM512.6 283.5h1.2v1.9h-1.2zM515.0 279.3h1.2v2.9h-1.2zM524.6 276.8h1.2v3.9h-1.2zM526.2 278.5h1.2v3.3h-1.2zM527.0 280.0h1.2v4.8h-1.2zM529.4 279.9h1.2v2.7h-1.2zM531.0 283.2h1.2v3.6h-1.2zM535.8 274.4h1.2v3.5h-1.2zM536.6 274.8h1.2v3.9h-1.2zM539.0 276.9h1.2v4.1h-1.2zM540.6 278.8h1.2v3.4h-1.2zM544.6 284.2h1.2v3.0h-1.2zM562.2 254.3h1.2v3.7h-1.2zM572.6 242.1h1.2v2.7h-1.2zM576.6 244.2h1.2v2.9h-1.2zM579.0 244.6h1.2v3.7h-1.2zM581.4 249.9h1.2v2.9h-1.2zM583.8 252.7h1.2v2.4h-1.2zM584.6 254.0h1.2v2.2h-1.2zM588.6 249.6h1.2v3.7h-1.2zM593.4 250.3h1.2v2.6h-1.2zM595.8 249.7h1.2v3.3h-1.2zM601.4 244.3h1.2v6.8h-1.2zM608.6 242.9h1.2v2.8h-1.2zM609.4 244.0h1.2v2.9h-1.2zM610.2 243.2h1.2v5.7h-1.2zM611.8 246.5h1.2v2.8h-1.2zM612.6 248.4h1.2v2.5h-1.2zM614.2 254.0h1.2v2.9h-1.2zM615.8 257.7h1.2v5.2h-1.2zM616.6 260.8h1.2v4.7h-1.2zM629.4 217.7h1.2v5.7h-1.2zM630.2 221.5h1.2v8.2h-1.2zM631.0 229.5h1.2v5.6h-1.2zM632.6 241.2h1.2v6.4h-1.2zM633.4 246.2h1.2v6.6h-1.2zM634.2 251.6h1.2v8.9h-1.2zM635.0 259.6h1.2v2.7h-1.2zM636.6 266.6h1.2v6.6h-1.2zM637.4 271.1h1.2v3.4h-1.2zM643.0 244.4h1.2v9.5h-1.2zM644.6 252.8h1.2v3.6h-1.2zM646.2 251.9h1.2v6.3h-1.2zM648.6 251.5h1.2v5.2h-1.2zM651.0 259.3h1.2v3.0h-1.2zM652.6 259.5h1.2v4.0h-1.2zM653.4 263.1h1.2v1.8h-1.2zM655.0 264.8h1.2v4.1h-1.2zM655.8 268.2h1.2v6.3h-1.2zM663.8 258.6h1.2v3.4h-1.2zM665.4 258.1h1.2v3.8h-1.2zM671.0 243.6h1.2v3.0h-1.2zM671.8 244.9h1.2v5.8h-1.2zM673.4 250.9h1.2v3.0h-1.2zM675.0 253.5h1.2v5.5h-1.2zM675.8 257.8h1.2v2.8h-1.2zM676.6 260.1h1.2v2.3h-1.2zM677.4 261.6h1.2v8.5h-1.2zM684.6 269.6h1.2v5.7h-1.2zM686.2 266.0h1.2v3.4h-1.2zM687.0 268.9h1.2v4.6h-1.2zM691.0 281.4h1.2v3.7h-1.2zM692.6 277.9h1.2v3.2h-1.2zM693.4 279.6h1.2v3.8h-1.2zM694.2 282.5h1.2v2.7h-1.2zM700.6 288.5h1.2v10.0h-1.2zM703.8 296.3h1.2v3.5h-1.2zM706.2 286.8h1.2v6.8h-1.2zM707.0 292.8h1.2v5.0h-1.2zM707.8 295.6h1.2v3.0h-1.2zM718.2 271.4h1.2v9.1h-1.2zM723.0 282.7h1.2v3.3h-1.2zM726.2 266.7h1.2v6.8h-1.2zM727.0 272.3h1.2v5.1h-1.2zM728.6 282.4h1.2v6.2h-1.2zM730.2 283.8h1.2v4.2h-1.2zM731.0 285.8h1.2v1.7h-1.2zM732.6 284.9h1.2v1.8h-1.2zM738.2 286.1h1.2v2.5h-1.2zM739.8 282.0h1.2v9.7h-1.2zM741.4 291.7h1.2v7.3h-1.2zM742.2 298.2h1.2v5.5h-1.2zM743.0 302.2h1.2v6.6h-1.2zM743.8 307.4h1.2v8.0h-1.2zM745.4 313.1h1.2v7.1h-1.2zM749.4 305.5h1.2v7.2h-1.2zM751.8 308.1h1.2v8.8h-1.2zM754.2 307.9h1.2v5.2h-1.2zM755.0 312.2h1.2v6.9h-1.2zM758.2 315.9h1.2v4.1h-1.2zM765.4 320.3h1.2v5.3h-1.2zM767.0 325.6h1.2v1.6h-1.2zM773.4 326.1h1.2v4.4h-1.2zM778.2 326.7h1.2v3.4h-1.2zM797.4 343.0h1.2v2.5h-1.2zM815.0 337.1h1.2v2.6h-1.2zM823.0 346.9h1.2v5.9h-1.2zM831.0 343.1h1.2v3.5h-1.2zM842.2 358.7h1.2v2.4h-1.2zM863.0 340.0h1.2v3.3h-1.2zM869.4 352.5h1.2v2.0h-1.2zM909.4 337.0h1.2v3.8h-1.2zM927.0 338.8h1.2v2.0h-1.2zM935.0 329.5h1.2v3.7h-1.2z"/>
<path fill="#f01818" d="M26.2 382.5h1.2v1.6h-1.2zM29.4 378.8h1.2v1.8h-1.2zM31.0 373.6h1.2v5.2h-1.2zM39.0 363.3h1.2v3.7h-1.2zM53.4 372.6h1.2v1.7h-1.2zM55.0 362.3h1.2v10.3h-1.2zM61.4 361.5h1.2v2.9h-1.2zM75.8 378.2h1.2v2.8h-1.2zM83.8 382.9h1.2v2.1h-1.2zM85.4 380.6h1.2v2.2h-1.2zM87.0 377.9h1.2v2.7h-1.2zM104.6 382.0h1.2v1.7h-1.2zM107.8 380.9h1.2v2.9h-1.2zM115.8 372.8h1.2v6.0h-1.2zM125.4 371.5h1.2v8.2h-1.2zM127.0 365.0h1.2v5.5h-1.2zM132.6 352.4h1.2v5.0h-1.2zM133.4 351.8h1.2v2.6h-1.2zM134.2 349.9h1.2v3.0h-1.2zM135.0 346.7h1.2v3.7h-1.2zM145.4 357.1h1.2v5.0h-1.2zM146.2 352.7h1.2v4.9h-1.2zM147.0 349.7h1.2v5.0h-1.2zM147.8 347.1h1.2v3.7h-1.2zM148.6 345.5h1.2v3.4h-1.2zM152.6 333.8h1.2v5.7h-1.2zM154.2 332.4h1.2v2.8h-1.2zM156.6 335.6h1.2v2.5h-1.2zM159.0 334.4h1.2v2.5h-1.2zM161.4 332.2h1.2v3.9h-1.2zM164.6 332.2h1.2v2.4h-1.2zM171.0 342.2h1.2v3.2h-1.2zM184.6 359.4h1.2v3.7h-1.2zM187.0 349.3h1.2v5.7h-1.2zM187.8 347.3h1.2v2.8h-1.2zM188.6 344.9h1.2v3.1h-1.2zM191.0 341.7h1.2v3.6h-1.2zM194.2 338.6h1.2v2.7h-1.2zM195.0 334.6h1.2v6.0h-1.2zM196.6 335.6h1.2v4.0h-1.2zM199.0 331.2h1.2v3.7h-1.2zM199.8 329.6h1.2v4.1h-1.2zM200.6 327.2h1.2v2.7h-1.2zM202.2 319.5h1.2v2.9h-1.2zM203.0 317.6h1.2v3.5h-1.2zM212.6 319.0h1.2v6.7h-1.2zM218.2 330.1h1.2v1.8h-1.2zM227.8 344.1h1.2v6.9h-1.2zM235.8 347.3h1.2v2.7h-1.2zM239.0 346.3h1.2v3.8h-1.2zM241.4 339.3h1.2v4.8h-1.2zM242.2 338.2h1.2v3.1h-1.2zM243.8 334.3h1.2v7.9h-1.2zM245.4 332.7h1.2v4.3h-1.2zM246.2 330.8h1.2v3.9h-1.2zM251.8 328.8h1.2v2.7h-1.2zM262.2 328.1h1.2v3.4h-1.2zM275.0 343.8h1.2v6.0h-1.2zM276.6 342.7h1.2v3.2h-1.2zM279.8 336.2h1.2v3.9h-1.2zM280.6 333.8h1.2v4.1h-1.2zM282.2 329.9h1.2v3.5h-1.2zM295.0 329.4h1.2v4.3h-1.2zM300.6 329.3h1.2v4.5h-1.2zM305.4 332.3h1.2v2.6h-1.2zM309.4 328.6h1.2v6.0h-1.2zM313.4 331.7h1.2v4.0h-1.2zM314.2 329.5h1.2v3.3h-1.2zM319.8 327.7h1.2v4.4h-1.2zM323.8 326.2h1.2v5.0h-1.2zM327.0 323.4h1.2v4.6h-1.2zM328.6 321.1h1.2v4.3h-1.2zM347.0 341.3h1.2v2.5h-1.2zM350.2 343.2h1.2v5.1h-1.2zM351.0 339.3h1.2v4.3h-1.2zM359.8 334.6h1.2v5.3h-1.2zM361.4 333.4h1.2v2.9h-1.2zM366.2 335.9h1.2v4.7h-1.2zM367.0 333.7h1.2v3.2h-1.2zM368.6 330.9h1.2v5.2h-1.2zM370.2 329.2h1.2v2.0h-1.2zM390.2 340.8h1.2v4.3h-1.2zM391.0 339.8h1.2v1.8h-1.2zM392.6 338.0h1.2v3.6h-1.2zM395.8 336.6h1.2v2.1h-1.2zM405.4 345.7h1.2v4.8h-1.2zM406.2 342.9h1.2v4.4h-1.2zM415.8 313.3h1.2v8.4h-1.2zM419.8 303.3h1.2v2.9h-1.2zM420.6 300.8h1.2v4.0h-1.2zM432.6 330.4h1.2v5.2h-1.2zM433.4 326.1h1.2v5.8h-1.2zM435.0 322.4h1.2v4.9h-1.2zM443.0 335.2h1.2v4.0h-1.2zM443.8 331.6h1.2v4.8h-1.2zM445.4 326.6h1.2v3.8h-1.2zM447.0 323.2h1.2v4.8h-1.2zM455.8 326.5h1.2v3.8h-1.2zM459.8 321.7h1.2v3.6h-1.2zM464.6 321.6h1.2v3.4h-1.2zM465.4 320.3h1.2v3.3h-1.2zM468.6 317.1h1.2v4.5h-1.2zM469.4 315.4h1.2v4.4h-1.2zM471.8 312.4h1.2v4.0h-1.2zM472.6 312.4h1.2v2.1h-1.2zM474.2 309.4h1.2v5.0h-1.2zM477.4 306.8h1.2v2.7h-1.2zM478.2 303.4h1.2v4.7h-1.2zM479.8 301.2h1.2v4.3h-1.2zM483.8 296.7h1.2v3.8h-1.2zM487.8 286.6h1.2v2.5h-1.2zM488.6 281.6h1.2v6.1h-1.2zM489.4 278.0h1.2v4.3h-1.2zM490.2 271.3h1.2v7.7h-1.2zM491.0 267.9h1.2v3.7h-1.2zM491.8 265.6h1.2v3.5h-1.2zM510.2 285.0h1.2v2.0h-1.2zM514.2 279.5h1.2v4.9h-1.2zM519.8 274.2h1.2v3.6h-1.2zM525.4 278.3h1.2v3.4h-1.2zM527.8 280.9h1.2v3.9h-1.2zM531.8 282.1h1.2v3.6h-1.2zM533.4 278.9h1.2v5.0h-1.2zM534.2 277.3h1.2v3.1h-1.2zM537.4 276.5h1.2v3.3h-1.2zM545.4 283.5h1.2v4.1h-1.2zM546.2 281.2h1.2v4.9h-1.2zM547.0 278.9h1.2v4.4h-1.2zM548.6 277.0h1.2v4.1h-1.2zM552.6 271.0h1.2v2.1h-1.2zM553.4 266.2h1.2v5.2h-1.2zM555.0 263.2h1.2v5.5h-1.2zM558.2 257.0h1.2v3.7h-1.2zM560.6 255.5h1.2v2.8h-1.2zM563.0 255.4h1.2v2.5h-1.2zM565.4 254.0h1.2v2.7h-1.2zM566.2 251.2h1.2v3.9h-1.2zM571.0 243.7h1.2v3.1h-1.2zM578.2 244.2h1.2v2.4h-1.2zM590.2 251.5h1.2v2.3h-1.2zM599.8 245.4h1.2v3.8h-1.2zM603.0 249.4h1.2v2.1h-1.2zM606.2 243.7h1.2v5.4h-1.2zM607.0 242.1h1.2v2.9h-1.2zM619.0 258.9h1.2v6.1h-1.2zM621.4 244.3h1.2v6.1h-1.2zM623.8 229.2h1.2v4.8h-1.2zM624.6 221.8h1.2v8.4h-1.2zM625.4 219.0h1.2v4.8h-1.2zM626.2 217.0h1.2v3.0h-1.2zM638.2 264.4h1.2v10.0h-1.2zM639.0 258.0h1.2v7.4h-1.2zM640.6 246.1h1.2v5.0h-1.2zM645.4 252.5h1.2v4.1h-1.2zM647.0 253.2h1.2v5.1h-1.2zM657.4 278.0h1.2v4.4h-1.2zM658.2 270.3h1.2v8.7h-1.2zM659.0 268.3h1.2v2.8h-1.2zM659.8 264.2h1.2v5.4h-1.2zM662.2 257.6h1.2v4.5h-1.2zM664.6 257.9h1.2v4.0h-1.2zM667.8 250.1h1.2v2.7h-1.2zM669.4 243.3h1.2v8.3h-1.2zM682.2 272.5h1.2v5.4h-1.2zM683.0 270.1h1.2v4.6h-1.2zM691.8 278.1h1.2v5.7h-1.2zM696.6 285.4h1.2v3.1h-1.2zM702.2 302.0h1.2v2.5h-1.2zM704.6 292.4h1.2v7.5h-1.2zM705.4 286.4h1.2v6.4h-1.2zM710.2 293.6h1.2v1.7h-1.2zM711.0 290.6h1.2v3.3h-1.2zM711.8 287.1h1.2v5.0h-1.2zM712.6 283.2h1.2v5.9h-1.2zM713.4 282.3h1.2v1.3h-1.2zM715.0 276.8h1.2v5.6h-1.2zM716.6 272.7h1.2v4.4h-1.2zM719.0 278.1h1.2v2.5h-1.2zM723.8 279.0h1.2v6.8h-1.2zM724.6 274.4h1.2v6.0h-1.2zM729.4 282.9h1.2v6.3h-1.2zM733.4 282.4h1.2v4.5h-1.2zM739.0 281.6h1.2v6.0h-1.2zM746.2 316.9h1.2v3.1h-1.2zM747.0 313.5h1.2v5.0h-1.2zM748.6 305.6h1.2v7.5h-1.2zM750.2 308.6h1.2v3.3h-1.2zM752.6 309.8h1.2v5.6h-1.2zM753.4 308.4h1.2v3.4h-1.2zM755.8 315.9h1.2v2.8h-1.2zM759.8 323.1h1.2v3.1h-1.2zM760.6 320.6h1.2v2.9h-1.2zM762.2 315.5h1.2v5.1h-1.2zM770.2 324.2h1.2v2.5h-1.2zM775.0 328.6h1.2v1.9h-1.2zM783.0 336.6h1.2v2.0h-1.2zM787.8 338.1h1.2v4.9h-1.2zM789.4 334.1h1.2v4.0h-1.2zM811.8 340.3h1.2v5.5h-1.2zM813.4 337.1h1.2v3.2h-1.2zM827.8 349.0h1.2v1.8h-1.2zM835.8 348.2h1.2v1.7h-1.2zM843.8 358.6h1.2v2.5h-1.2zM845.4 357.0h1.2v1.6h-1.2zM856.6 345.8h1.2v7.0h-1.2zM858.2 340.9h1.2v4.9h-1.2zM880.6 346.6h1.2v2.0h-1.2zM891.8 341.3h1.2v3.3h-1.2zM893.4 336.1h1.2v5.1h-1.2zM915.8 333.1h1.2v2.1h-1.2zM933.4 329.5h1.2v8.7h-1.2zM944.6 336.2h1.2v2.2h-1.2z"/>
</g>
<g clip-path="url(#c2)">
<rect x="17" y="338" width="1.3" height="54" fill="#2288ee"/>
<rect x="19" y="368" width="1.3" height="18" fill="#f01818"/>
<rect x="31" y="352" width="1.3" height="26" fill="#f01818"/>
<rect x="408.5" y="288" width="1.3" height="44" fill="#2288ee"/>
<rect x="491" y="262" width="1.3" height="20" fill="#f01818"/>
<rect x="627" y="212" width="1.3" height="22" fill="#f01818"/>
<rect x="637" y="248" width="1.3" height="28" fill="#2288ee"/>
<rect x="656" y="260" width="1.3" height="23" fill="#2288ee"/>
<rect x="725" y="256" width="1.3" height="22" fill="#f01818"/>
<rect x="742" y="290" width="1.3" height="34" fill="#2288ee"/>
<rect x="15" y="345" width="1.3" height="20" fill="#2288ee"/>
<rect x="55.5" y="358" width="1.3" height="11" fill="#f01818"/>
<rect x="67.5" y="359" width="1.3" height="11" fill="#2288ee"/>
<rect x="33" y="355" width="1.3" height="9" fill="#2288ee"/>
</g>
<g clip-path="url(#c3)"><polyline points="6.4,469.6 7.3,466.4 8.2,459.9 9.1,461.6 10.0,460.6 10.9,460.8 11.8,463.2 12.7,462.0 13.6,462.5 14.5,463.9 15.4,465.0 16.3,459.3 17.2,454.0 18.1,456.8 19.0,455.3 19.9,450.5 20.8,448.7 21.7,449.4 22.6,450.2 23.5,451.5 24.4,451.0 25.3,450.2 26.2,449.1 27.1,445.5 28.0,444.5 28.9,442.6 29.8,442.8 30.7,443.3 31.6,445.9 32.5,449.0 33.4,458.3 34.3,461.3 35.2,463.0 36.1,465.0 37.0,458.5 37.9,458.3 38.8,454.6 39.7,452.3 40.6,454.6 41.5,456.3 42.4,458.3 43.3,458.2 44.2,457.4 45.1,456.9 46.0,456.1 46.9,456.5 47.8,453.9 48.7,454.0 49.6,449.3 50.5,448.3 51.4,452.4 52.3,455.2 53.2,463.2 54.1,456.5 55.0,456.3 55.9,453.6 56.8,457.7 57.7,456.6 58.6,462.1 59.5,457.9 60.4,455.6 61.3,452.1 62.2,453.6 63.1,453.0 64.0,455.2 64.9,456.8 65.8,459.2 66.7,455.8 67.6,460.6 68.5,457.5 69.4,451.9 70.3,448.4 71.2,443.4 72.1,443.3 73.0,441.3 73.9,440.3 74.8,440.8 75.7,442.3 76.6,443.8 77.5,445.0 78.4,450.4 79.3,448.8 80.2,448.2 81.1,451.0 82.0,450.3 82.9,450.2 83.8,449.7 84.7,451.3 85.6,453.4 86.5,455.6 87.4,455.7 88.3,457.2 89.2,461.0 90.1,461.0 91.0,461.0 91.9,464.4 92.8,458.4 93.7,452.6 94.6,447.6 95.5,445.1 96.4,443.6 97.3,443.1 98.2,442.6 99.1,445.5 100.0,449.3 100.9,449.9 101.8,450.2 102.7,453.6 103.6,454.4 104.5,456.5 105.4,456.0 106.3,453.5 107.2,452.4 108.1,451.4 109.0,449.3 109.9,450.2 110.8,450.0 111.7,447.9 112.6,451.9 113.5,457.8 114.4,463.1 115.3,465.9 116.2,467.5 117.1,468.3 118.0,468.8 118.9,467.3 119.8,468.9 120.7,468.3 121.6,466.7 122.5,465.5 123.4,467.9 124.3,469.1 125.2,467.4 126.1,467.8 127.0,467.8 127.9,469.2 128.8,468.2 129.7,471.2 130.6,471.1 131.5,473.5 132.4,473.7 133.3,474.6 134.2,474.5 135.1,476.1 136.0,475.8 136.9,476.1 137.8,475.1 138.7,473.5 139.6,473.9 140.5,473.9 141.4,472.2 142.3,472.4 143.2,472.8 144.1,474.5 145.0,474.7 145.9,473.6 146.8,475.4 147.7,476.7 148.6,478.6 149.5,482.8 150.4,484.2 151.3,484.0 152.2,486.2 153.1,488.0 154.0,486.3 154.9,485.7 155.8,485.4 156.7,481.9 157.6,483.0 158.5,483.0 159.4,482.3 160.3,480.1 161.2,481.9 162.1,481.4 163.0,483.4 163.9,484.1 164.8,486.2 165.7,487.9 166.6,490.1 167.5,488.6 168.4,483.9 169.3,483.6 170.2,484.5 171.1,484.6 172.0,488.2 172.9,485.7 173.8,487.1 174.7,482.3 175.6,481.4 176.5,484.8 177.4,484.6 178.3,483.9 179.2,484.3 180.1,482.1 181.0,482.2 181.9,480.7 182.8,480.3 183.7,481.4 184.6,480.8 185.5,481.4 186.4,480.6 187.3,481.6 188.2,482.8 189.1,483.2 190.0,485.4 190.9,483.5 191.8,486.0 192.7,482.9 193.6,484.7 194.5,483.6 195.4,486.9 196.3,486.3 197.2,486.9 198.1,485.5 199.0,482.3 199.9,481.2 200.8,480.8 201.7,484.6 202.6,483.2 203.5,483.8 204.4,483.4 205.3,484.2 206.2,479.3 207.1,480.1 208.0,478.3 208.9,479.0 209.8,478.2 210.7,481.1 211.6,483.9 212.5,484.7 213.4,484.0 214.3,480.8 215.2,481.0 216.1,480.1 217.0,478.1 217.9,477.3 218.8,478.8 219.7,477.6 220.6,476.6 221.5,477.5 222.4,474.9 223.3,476.0 224.2,475.0 225.1,474.5 226.0,474.6 226.9,473.8 227.8,473.5 228.7,473.5 229.6,476.0 230.5,474.7 231.4,475.7 232.3,474.1 233.2,471.9 234.1,473.0 235.0,471.6 235.9,473.8 236.8,472.0 237.7,472.5 238.6,473.9 239.5,475.0 240.4,475.6 241.3,476.1 242.2,474.0 243.1,471.4 244.0,474.0 244.9,475.2 245.8,475.2 246.7,476.8 247.6,475.6 248.5,474.1 249.4,475.2 250.3,473.7 251.2,475.1 252.1,477.2 253.0,476.2 253.9,478.6 254.8,476.9 255.7,478.4 256.6,476.4 257.5,476.7 258.4,474.5 259.3,475.1 260.2,475.9 261.1,474.8 262.0,472.0 262.9,475.9 263.8,477.4 264.7,477.7 265.6,480.8 266.5,477.2 267.4,477.1 268.3,477.1 269.2,476.5 270.1,475.9 271.0,473.1 271.9,471.9 272.8,473.5 273.7,471.2 274.6,472.0 275.5,472.6 276.4,476.8 277.3,478.3 278.2,479.3 279.1,478.9 280.0,479.1 280.9,478.9 281.8,479.7 282.7,479.7 283.6,479.3 284.5,477.7 285.4,479.4 286.3,477.0 287.2,477.7 288.1,478.1 289.0,476.4 289.9,476.0 290.8,478.9 291.7,476.9 292.6,477.0 293.5,476.3 294.4,476.3 295.3,475.2 296.2,476.4 297.1,476.2 298.0,476.8 298.9,474.6 299.8,477.9 300.7,477.7 301.6,476.0 302.5,477.4 303.4,478.5 304.3,479.1 305.2,476.9 306.1,476.7 307.0,473.7 307.9,472.2 308.8,472.9 309.7,474.6 310.6,473.6 311.5,475.5 312.4,475.4 313.3,474.7 314.2,474.9 315.1,473.5 316.0,473.4 316.9,472.5 317.8,472.6 318.7,472.0 319.6,473.3 320.5,473.2 321.4,473.2 322.3,475.2 323.2,476.0 324.1,475.6 325.0,477.5 325.9,476.5 326.8,476.1 327.7,473.9 328.6,472.5 329.5,475.1 330.4,475.9 331.3,477.5 332.2,478.2 333.1,480.1 334.0,478.9 334.9,480.2 335.8,479.0 336.7,477.9 337.6,480.0 338.5,481.9 339.4,478.7 340.3,481.4 341.2,479.7 342.1,480.0 343.0,480.3 343.9,479.3 344.8,476.9 345.7,477.1 346.6,477.2 347.5,477.2 348.4,475.4 349.3,477.4 350.2,477.4 351.1,478.4 352.0,475.2 352.9,477.3 353.8,475.8 354.7,478.6 355.6,479.3 356.5,478.2 357.4,477.4 358.3,478.0 359.2,477.4 360.1,474.8 361.0,475.7 361.9,474.0 362.8,476.3 363.7,477.7 364.6,478.2 365.5,479.6 366.4,476.9 367.3,475.7 368.2,478.5 369.1,477.4 370.0,478.6 370.9,479.3 371.8,479.6 372.7,480.8 373.6,480.8 374.5,477.1 375.4,478.0 376.3,479.3 377.2,476.2 378.1,477.0 379.0,475.4 379.9,474.5 380.8,475.9 381.7,474.8 382.6,473.7 383.5,475.1 384.4,473.0 385.3,473.8 386.2,475.9 387.1,475.8 388.0,475.4 388.9,477.7 389.8,478.3 390.7,480.0 391.6,479.1 392.5,477.1 393.4,476.2 394.3,475.8 395.2,475.6 396.1,478.2 397.0,479.2 397.9,479.9 398.8,479.8 399.7,479.3 400.6,480.3 401.5,478.9 402.4,479.4 403.3,477.3 404.2,478.5 405.1,481.1 406.0,481.3 406.9,483.5 407.8,490.2 408.7,499.4 409.6,506.6 410.5,503.8 411.4,501.6 412.3,500.0 413.2,498.0 414.1,497.9 415.0,496.4 415.9,495.2 416.8,497.2 417.7,498.7 418.6,500.3 419.5,502.8 420.4,507.5 421.3,511.2 422.2,508.1 423.1,507.1 424.0,507.1 424.9,505.5 425.8,504.0 426.7,505.3 427.6,502.0 428.5,501.4 429.4,501.1 430.3,500.7 431.2,501.2 432.1,501.9 433.0,502.6 433.9,501.8 434.8,501.7 435.7,501.0 436.6,502.7 437.5,502.4 438.4,502.9 439.3,503.3 440.2,501.9 441.1,500.8 442.0,498.6 442.9,497.7 443.8,496.2 444.7,493.6 445.6,493.6 446.5,496.1 447.4,494.6 448.3,496.9 449.2,497.3 450.1,500.0 451.0,499.0 451.9,498.7 452.8,498.5 453.7,498.2 454.6,498.1 455.5,496.1 456.4,498.4 457.3,499.8 458.2,498.9 459.1,502.3 460.0,503.2 460.9,501.2 461.8,502.2 462.7,502.4 463.6,502.2 464.5,503.1 465.4,501.4 466.3,502.6 467.2,503.6 468.1,504.6 469.0,504.5 469.9,504.7 470.8,506.2 471.7,503.4 472.6,505.7 473.5,503.9 474.4,502.8 475.3,505.2 476.2,505.4 477.1,506.7 478.0,510.0 478.9,509.8 479.8,511.1 480.7,509.3 481.6,508.7 482.5,508.9 483.4,511.5 484.3,510.5 485.2,510.5 486.1,510.8 487.0,511.4 487.9,513.6 488.8,515.9 489.7,518.2 490.6,519.9 491.5,520.6 492.4,520.9 493.3,519.0 494.2,515.8 495.1,515.3 496.0,515.0 496.9,513.8 497.8,515.3 498.7,514.3 499.6,517.3 500.5,517.5 501.4,518.0 502.3,519.1 503.2,514.8 504.1,514.5 505.0,512.2 505.9,513.0 506.8,509.0 507.7,507.6 508.6,510.8 509.5,510.7 510.4,515.0 511.3,513.5 512.2,514.6 513.1,514.2 514.0,516.3 514.9,513.8 515.8,517.1 516.7,515.8 517.6,516.0 518.5,514.2 519.4,514.9 520.3,514.2 521.2,513.3 522.1,511.5 523.0,510.3 523.9,509.7 524.8,508.3 525.7,507.5 526.6,507.4 527.5,509.4 528.4,508.3 529.3,509.1 530.2,507.2 531.1,505.2 532.0,506.3 532.9,506.8 533.8,505.3 534.7,505.3 535.6,506.0 536.5,508.4 537.4,505.7 538.3,504.1 539.2,503.3 540.1,501.6 541.0,501.5 541.9,500.7 542.8,500.4 543.7,501.0 544.6,500.8 545.5,500.5 546.4,498.5 547.3,498.4 548.2,497.7 549.1,497.0 550.0,498.4 550.9,499.7 551.8,499.8 552.7,496.3 553.6,492.0 554.5,489.9 555.4,487.3 556.3,485.5 557.2,483.4 558.1,483.3 559.0,483.6 559.9,479.9 560.8,480.9 561.7,482.6 562.6,483.0 563.5,485.0 564.4,484.3 565.3,483.5 566.2,482.9 567.1,480.6 568.0,477.9 568.9,474.9 569.8,476.9 570.7,476.9 571.6,480.1 572.5,480.4 573.4,481.2 574.3,481.2 575.2,480.2 576.1,477.6 577.0,477.9 577.9,477.7 578.8,475.5 579.7,474.2 580.6,476.8 581.5,477.0 582.4,477.7 583.3,477.6 584.2,477.8 585.1,478.1 586.0,479.4 586.9,478.6 587.8,478.8 588.7,478.0 589.6,479.3 590.5,477.3 591.4,477.6 592.3,474.1 593.2,475.8 594.1,474.8 595.0,473.8 595.9,474.9 596.8,474.5 597.7,474.9 598.6,475.5 599.5,478.9 600.4,479.9 601.3,483.5 602.2,483.1 603.1,484.6 604.0,483.3 604.9,482.0 605.8,481.6 606.7,480.3 607.6,482.8 608.5,481.3 609.4,482.7 610.3,479.7 611.2,477.7 612.1,478.5 613.0,479.2 613.9,478.8 614.8,478.4 615.7,477.4 616.6,477.3 617.5,476.9 618.4,478.8 619.3,478.8 620.2,480.0 621.1,482.4 622.0,485.0 622.9,487.5 623.8,488.5 624.7,492.9 625.6,494.7 626.5,493.6 627.4,493.3 628.3,494.1 629.2,488.7 630.1,483.5 631.0,481.0 631.9,476.1 632.8,475.8 633.7,471.1 634.6,470.3 635.5,470.5 636.4,469.5 637.3,468.5 638.2,470.4 639.1,471.6 640.0,473.1 640.9,473.6 641.8,474.2 642.7,472.7 643.6,475.4 644.5,475.5 645.4,466.4 646.3,458.2 647.2,457.1 648.1,457.4 649.0,458.0 649.9,459.9 650.8,456.4 651.7,456.3 652.6,452.4 653.5,453.6 654.4,450.1 655.3,449.3 656.2,448.5 657.1,447.7 658.0,447.6 658.9,449.1 659.8,450.4 660.7,451.1 661.6,455.6 662.5,454.9 663.4,456.6 664.3,456.1 665.2,452.8 666.1,450.2 667.0,448.5 667.9,451.6 668.8,450.1 669.7,449.5 670.6,447.0 671.5,441.3 672.4,442.2 673.3,445.4 674.2,445.2 675.1,447.2 676.0,446.5 676.9,443.5 677.8,444.0 678.7,443.1 679.6,442.7 680.5,440.8 681.4,436.2 682.3,433.1 683.2,431.0 684.1,430.8 685.0,429.2 685.9,429.5 686.8,429.8 687.7,429.2 688.6,427.8 689.5,425.9 690.4,425.6 691.3,426.8 692.2,428.6 693.1,429.5 694.0,431.0 694.9,428.9 695.8,426.6 696.7,428.0 697.6,429.8 698.5,428.5 699.4,432.8 700.3,431.0 701.2,433.7 702.1,436.3 703.0,439.2 703.9,440.8 704.8,443.8 705.7,441.8 706.6,444.3 707.5,443.9 708.4,446.9 709.3,448.2 710.2,454.0 711.1,456.0 712.0,461.3 712.9,470.1 713.8,470.8 714.7,473.4 715.6,474.6 716.5,470.9 717.4,468.3 718.3,471.3 719.2,474.9 720.1,475.5 721.0,476.5 721.9,479.2 722.8,478.6 723.7,482.4 724.6,482.4 725.5,483.1 726.4,485.1 727.3,482.3 728.2,479.5 729.1,479.5 730.0,479.7 730.9,479.6 731.8,476.9 732.7,474.8 733.6,479.1 734.5,476.5 735.4,476.0 736.3,476.6 737.2,475.1 738.1,475.0 739.0,471.2 739.9,470.7 740.8,467.3 741.7,467.1 742.6,462.4 743.5,460.8 744.4,460.1 745.3,456.8 746.2,457.0 747.1,457.2 748.0,455.8 748.9,456.9 749.8,461.8 750.7,464.2 751.6,463.8 752.5,465.3 753.4,467.2 754.3,467.8 755.2,466.5 756.1,464.1 757.0,465.7 757.9,462.9 758.8,462.9 759.7,462.1 760.6,461.8 761.5,461.4 762.4,460.9 763.3,463.0 764.2,464.8 765.1,464.9 766.0,466.5 766.9,467.5 767.8,468.3 768.7,471.3 769.6,470.1 770.5,472.1 771.4,471.6 772.3,469.6 773.2,467.1 774.1,466.9 775.0,470.2 775.9,468.4 776.8,470.0 777.7,471.2 778.6,470.4 779.5,468.0 780.4,467.3 781.3,468.0 782.2,464.7 783.1,462.5 784.0,463.0 784.9,464.0 785.8,463.4 786.7,463.6 787.6,465.6 788.5,463.5 789.4,462.3 790.3,461.1 791.2,463.3 792.1,461.2 793.0,461.2 793.9,462.6 794.8,462.0 795.7,462.1 796.6,460.0 797.5,458.2 798.4,459.6 799.3,459.8 800.2,459.0 801.1,460.1 802.0,458.8 802.9,456.0 803.8,456.2 804.7,454.2 805.6,452.5 806.5,454.8 807.4,453.5 808.3,457.6 809.2,459.2 810.1,457.5 811.0,460.9 811.9,462.5 812.8,461.9 813.7,461.9 814.6,461.1 815.5,461.5 816.4,460.3 817.3,458.2 818.2,462.0 819.1,463.1 820.0,462.7 820.9,465.7 821.8,468.2 822.7,463.8 823.6,463.4 824.5,461.8 825.4,462.0 826.3,462.5 827.2,462.7 828.1,466.7 829.0,466.5 829.9,467.9 830.8,468.6 831.7,464.7 832.6,464.1 833.5,464.5 834.4,462.3 835.3,461.6 836.2,459.7 837.1,461.2 838.0,457.6 838.9,456.4 839.8,455.3 840.7,454.7 841.6,451.8 842.5,452.4 843.4,454.3 844.3,453.3 845.2,455.4 846.1,456.2 847.0,456.5 847.9,460.2 848.8,459.0 849.7,459.2 850.6,457.5 851.5,457.5 852.4,456.2 853.3,455.9 854.2,456.8 855.1,459.8 856.0,459.3 856.9,460.3 857.8,461.4 858.7,465.0 859.6,463.7 860.5,463.3 861.4,465.0 862.3,465.3 863.2,465.3 864.1,464.6 865.0,465.0 865.9,465.1 866.8,462.7 867.7,461.3 868.6,462.5 869.5,461.4 870.4,461.7 871.3,462.7 872.2,460.5 873.1,465.0 874.0,463.4 874.9,464.4 875.8,464.5 876.7,465.0 877.6,463.6 878.5,467.0 879.4,466.4 880.3,466.8 881.2,470.3 882.1,466.6 883.0,469.3 883.9,468.5 884.8,466.9 885.7,470.1 886.6,466.5 887.5,468.0 888.4,467.6 889.3,467.4 890.2,465.7 891.1,467.5 892.0,465.8 892.9,463.7 893.8,463.2 894.7,464.9 895.6,463.8 896.5,465.7 897.4,465.9 898.3,465.2 899.2,464.2 900.1,465.1 901.0,466.5 901.9,465.1 902.8,466.9 903.7,464.1 904.6,464.4 905.5,464.1 906.4,463.3 907.3,463.3 908.2,463.8 909.1,462.5 910.0,462.8 910.9,461.9 911.8,464.2 912.7,462.4 913.6,463.0 914.5,459.2 915.4,461.7 916.3,461.1 917.2,462.2 918.1,461.8 919.0,461.2 919.9,462.0 920.8,463.7 921.7,464.5 922.6,463.4 923.5,465.5 924.4,464.4 925.3,466.0 926.2,464.3 927.1,466.0 928.0,467.1 928.9,464.2 929.8,465.9 930.7,463.7 931.6,465.1 932.5,468.9 933.4,466.8 934.3,467.9 935.2,465.3 936.1,465.8 937.0,463.9 937.9,464.8 938.8,461.9 939.7,464.8 940.6,461.1 941.5,462.5 942.4,460.2 943.3,461.8 944.2,463.4 945.1,462.1 946.0,460.5 946.9,461.6 947.8,461.3 948.7,460.1 949.6,459.9 950.5,456.8 951.4,459.7 952.3,458.6 953.2,455.8 954.1,459.8 955.0,458.1 955.9,459.8 956.8,457.9 957.7,460.0 958.6,459.3 959.5,462.2 960.4,461.4 961.3,460.9 962.2,461.7 963.1,463.9 964.0,463.4 964.9,466.1 965.8,465.7 966.7,466.6" fill="none" stroke="#ff1010" stroke-width="1.7" stroke-linejoin="round"/></g>
<g font-family="Liberation Sans, sans-serif" font-size="11" fill="#b0b0b0" text-anchor="middle"><text transform="translate(10.44 48.7) scale(0.98 1)" font-size="9.9" stroke="#b0b0b0" stroke-width="0.25">時</text><text transform="translate(20.12 48.7) scale(0.98 1)" font-size="9.9" stroke="#b0b0b0" stroke-width="0.25">刻</text><text transform="translate(27.38 48.7) scale(0.78 1)">:</text><text transform="translate(32.22 48.7) scale(0.78 1)">0</text><text transform="translate(37.06 48.7) scale(0.78 1)">6</text><text transform="translate(41.90 48.7) scale(0.78 1)">:</text><text transform="translate(46.74 48.7) scale(0.78 1)">0</text><text transform="translate(51.58 48.7) scale(0.78 1)">0</text></g>
<g font-family="Liberation Sans, sans-serif" font-size="11" fill="#b0b0b0" text-anchor="middle"><text transform="translate(63.68 48.7) scale(0.98 1)" font-size="9.9" stroke="#b0b0b0" stroke-width="0.25">始</text><text transform="translate(73.36 48.7) scale(0.98 1)" font-size="9.9" stroke="#b0b0b0" stroke-width="0.25">値</text><text transform="translate(80.62 48.7) scale(0.78 1)">:</text><text transform="translate(85.46 48.7) scale(0.78 1)">7</text><text transform="translate(90.30 48.7) scale(0.78 1)">,</text><text transform="translate(95.14 48.7) scale(0.78 1)">9</text><text transform="translate(99.98 48.7) scale(0.78 1)">5</text><text transform="translate(104.82 48.7) scale(0.78 1)">0</text></g>
<g font-family="Liberation Sans, sans-serif" font-size="11" fill="#b0b0b0" text-anchor="middle"><text transform="translate(116.92 48.7) scale(0.98 1)" font-size="9.9" stroke="#b0b0b0" stroke-width="0.25">高</text><text transform="translate(126.60 48.7) scale(0.98 1)" font-size="9.9" stroke="#b0b0b0" stroke-width="0.25">値</text><text transform="translate(133.86 48.7) scale(0.78 1)">:</text><text transform="translate(138.70 48.7) scale(0.78 1)">7</text><text transform="translate(143.54 48.7) scale(0.78 1)">,</text><text transform="translate(148.38 48.7) scale(0.78 1)">9</text><text transform="translate(153.22 48.7) scale(0.78 1)">5</text><text transform="translate(158.06 48.7) scale(0.78 1)">0</text></g>
<g font-family="Liberation Sans, sans-serif" font-size="11" fill="#b0b0b0" text-anchor="middle"><text transform="translate(170.14 48.7) scale(0.98 1)" font-size="9.9" stroke="#b0b0b0" stroke-width="0.25">安</text><text transform="translate(179.82 48.7) scale(0.98 1)" font-size="9.9" stroke="#b0b0b0" stroke-width="0.25">値</text><text transform="translate(187.08 48.7) scale(0.78 1)">:</text><text transform="translate(191.92 48.7) scale(0.78 1)">7</text><text transform="translate(196.76 48.7) scale(0.78 1)">,</text><text transform="translate(201.60 48.7) scale(0.78 1)">9</text><text transform="translate(206.44 48.7) scale(0.78 1)">5</text><text transform="translate(211.28 48.7) scale(0.78 1)">0</text></g>
<g font-family="Liberation Sans, sans-serif" font-size="11" fill="#b0b0b0" text-anchor="middle"><text transform="translate(223.40 48.7) scale(0.98 1)" font-size="9.9" stroke="#b0b0b0" stroke-width="0.25">終</text><text transform="translate(233.08 48.7) scale(0.98 1)" font-size="9.9" stroke="#b0b0b0" stroke-width="0.25">値</text><text transform="translate(240.34 48.7) scale(0.78 1)">:</text><text transform="translate(245.18 48.7) scale(0.78 1)">7</text><text transform="translate(250.02 48.7) scale(0.78 1)">,</text><text transform="translate(254.86 48.7) scale(0.78 1)">9</text><text transform="translate(259.70 48.7) scale(0.78 1)">5</text><text transform="translate(264.54 48.7) scale(0.78 1)">0</text></g>
<g font-family="Liberation Sans, sans-serif" font-size="11" fill="#b0b0b0" text-anchor="middle"><text transform="translate(10.44 213.8) scale(0.98 1)" font-size="9.9" stroke="#b0b0b0" stroke-width="0.25">時</text><text transform="translate(20.12 213.8) scale(0.98 1)" font-size="9.9" stroke="#b0b0b0" stroke-width="0.25">刻</text><text transform="translate(27.38 213.8) scale(0.78 1)">:</text><text transform="translate(32.22 213.8) scale(0.78 1)">0</text><text transform="translate(37.06 213.8) scale(0.78 1)">6</text><text transform="translate(41.90 213.8) scale(0.78 1)">:</text><text transform="translate(46.74 213.8) scale(0.78 1)">0</text><text transform="translate(51.58 213.8) scale(0.78 1)">0</text></g>
<g font-family="Liberation Sans, sans-serif" font-size="11" fill="#b0b0b0" text-anchor="middle"><text transform="translate(63.68 213.8) scale(0.98 1)" font-size="9.9" stroke="#b0b0b0" stroke-width="0.25">始</text><text transform="translate(73.36 213.8) scale(0.98 1)" font-size="9.9" stroke="#b0b0b0" stroke-width="0.25">値</text><text transform="translate(80.62 213.8) scale(0.78 1)">:</text><text transform="translate(85.46 213.8) scale(0.78 1)">-</text><text transform="translate(90.30 213.8) scale(0.78 1)">-</text><text transform="translate(95.14 213.8) scale(0.78 1)">-</text></g>
<g font-family="Liberation Sans, sans-serif" font-size="11" fill="#b0b0b0" text-anchor="middle"><text transform="translate(107.24 213.8) scale(0.98 1)" font-size="9.9" stroke="#b0b0b0" stroke-width="0.25">高</text><text transform="translate(116.92 213.8) scale(0.98 1)" font-size="9.9" stroke="#b0b0b0" stroke-width="0.25">値</text><text transform="translate(124.18 213.8) scale(0.78 1)">:</text><text transform="translate(129.02 213.8) scale(0.78 1)">-</text><text transform="translate(133.86 213.8) scale(0.78 1)">-</text><text transform="translate(138.70 213.8) scale(0.78 1)">-</text></g>
<g font-family="Liberation Sans, sans-serif" font-size="11" fill="#b0b0b0" text-anchor="middle"><text transform="translate(150.84 213.8) scale(0.98 1)" font-size="9.9" stroke="#b0b0b0" stroke-width="0.25">安</text><text transform="translate(160.52 213.8) scale(0.98 1)" font-size="9.9" stroke="#b0b0b0" stroke-width="0.25">値</text><text transform="translate(167.78 213.8) scale(0.78 1)">:</text><text transform="translate(172.62 213.8) scale(0.78 1)">-</text><text transform="translate(177.46 213.8) scale(0.78 1)">-</text><text transform="translate(182.30 213.8) scale(0.78 1)">-</text></g>
<g font-family="Liberation Sans, sans-serif" font-size="11" fill="#b0b0b0" text-anchor="middle"><text transform="translate(194.34 213.8) scale(0.98 1)" font-size="9.9" stroke="#b0b0b0" stroke-width="0.25">終</text><text transform="translate(204.02 213.8) scale(0.98 1)" font-size="9.9" stroke="#b0b0b0" stroke-width="0.25">値</text><text transform="translate(211.28 213.8) scale(0.78 1)">:</text><text transform="translate(216.12 213.8) scale(0.78 1)">-</text><text transform="translate(220.96 213.8) scale(0.78 1)">-</text><text transform="translate(225.80 213.8) scale(0.78 1)">-</text></g>
<g font-family="Liberation Sans, sans-serif" font-size="11" fill="#b0b0b0" text-anchor="middle"><text transform="translate(8.02 427.8) scale(0.78 1)">[</text><text transform="translate(15.28 427.8) scale(0.98 1)" font-size="9.9" stroke="#b0b0b0" stroke-width="0.25">金</text><text transform="translate(27.38 427.8) scale(0.78 1)">2</text><text transform="translate(32.22 427.8) scale(0.78 1)">3</text><text transform="translate(37.06 427.8) scale(0.78 1)">/</text><text transform="translate(41.90 427.8) scale(0.78 1)">0</text><text transform="translate(46.74 427.8) scale(0.78 1)">6</text><text transform="translate(56.42 427.8) scale(0.78 1)">7</text><text transform="translate(61.26 427.8) scale(0.78 1)">,</text><text transform="translate(66.10 427.8) scale(0.78 1)">9</text><text transform="translate(70.94 427.8) scale(0.78 1)">5</text><text transform="translate(75.78 427.8) scale(0.78 1)">0</text><path d="M80.44 421.20 L85.64 426.60 M85.64 421.20 L80.44 426.60" stroke="#b0b0b0" stroke-width="0.9" fill="none"/><text transform="translate(90.30 427.8) scale(0.78 1)">1</text><text transform="translate(95.14 427.8) scale(0.78 1)">.</text><text transform="translate(99.98 427.8) scale(0.78 1)">0</text><text transform="translate(104.82 427.8) scale(0.78 1)">0</text><text transform="translate(109.66 427.8) scale(0.78 1)">]</text><rect x="114.48" y="423.60" width="5.08" height="1" fill="#b0b0b0"/><text transform="translate(124.18 427.8) scale(0.78 1)">[</text><text transform="translate(131.44 427.8) scale(0.98 1)" font-size="9.9" stroke="#b0b0b0" stroke-width="0.25">白</text><text transform="translate(141.12 427.8) scale(0.98 1)" font-size="9.9" stroke="#b0b0b0" stroke-width="0.25">金</text><text transform="translate(153.22 427.8) scale(0.78 1)">2</text><text transform="translate(158.06 427.8) scale(0.78 1)">3</text><text transform="translate(162.90 427.8) scale(0.78 1)">/</text><text transform="translate(167.74 427.8) scale(0.78 1)">0</text><text transform="translate(172.58 427.8) scale(0.78 1)">6</text><text transform="translate(182.26 427.8) scale(0.78 1)">3</text><text transform="translate(187.10 427.8) scale(0.78 1)">,</text><text transform="translate(191.94 427.8) scale(0.78 1)">9</text><text transform="translate(196.78 427.8) scale(0.78 1)">5</text><text transform="translate(201.62 427.8) scale(0.78 1)">4</text><path d="M206.28 421.20 L211.48 426.60 M211.48 421.20 L206.28 426.60" stroke="#b0b0b0" stroke-width="0.9" fill="none"/><text transform="translate(216.14 427.8) scale(0.78 1)">1</text><text transform="translate(220.98 427.8) scale(0.78 1)">.</text><text transform="translate(225.82 427.8) scale(0.78 1)">0</text><text transform="translate(230.66 427.8) scale(0.78 1)">0</text><text transform="translate(235.50 427.8) scale(0.78 1)">]</text><text transform="translate(247.60 427.8) scale(0.98 1)" font-size="9.9" stroke="#b0b0b0" stroke-width="0.25">終</text><text transform="translate(257.28 427.8) scale(0.98 1)" font-size="9.9" stroke="#b0b0b0" stroke-width="0.25">値</text><text transform="translate(271.80 427.8) scale(0.98 1)" font-size="9.9" stroke="#b0b0b0" stroke-width="0.25">時</text><text transform="translate(281.48 427.8) scale(0.98 1)" font-size="9.9" stroke="#b0b0b0" stroke-width="0.25">刻</text><text transform="translate(288.74 427.8) scale(0.78 1)">:</text><text transform="translate(293.58 427.8) scale(0.78 1)">0</text><text transform="translate(298.42 427.8) scale(0.78 1)">6</text><text transform="translate(303.26 427.8) scale(0.78 1)">:</text><text transform="translate(308.10 427.8) scale(0.78 1)">0</text><text transform="translate(312.94 427.8) scale(0.78 1)">0</text><text transform="translate(322.62 427.8) scale(0.78 1)">3</text><text transform="translate(327.46 427.8) scale(0.78 1)">,</text><text transform="translate(332.30 427.8) scale(0.78 1)">9</text><text transform="translate(337.14 427.8) scale(0.78 1)">9</text><text transform="translate(341.98 427.8) scale(0.78 1)">6</text></g>
</svg></body></html>
